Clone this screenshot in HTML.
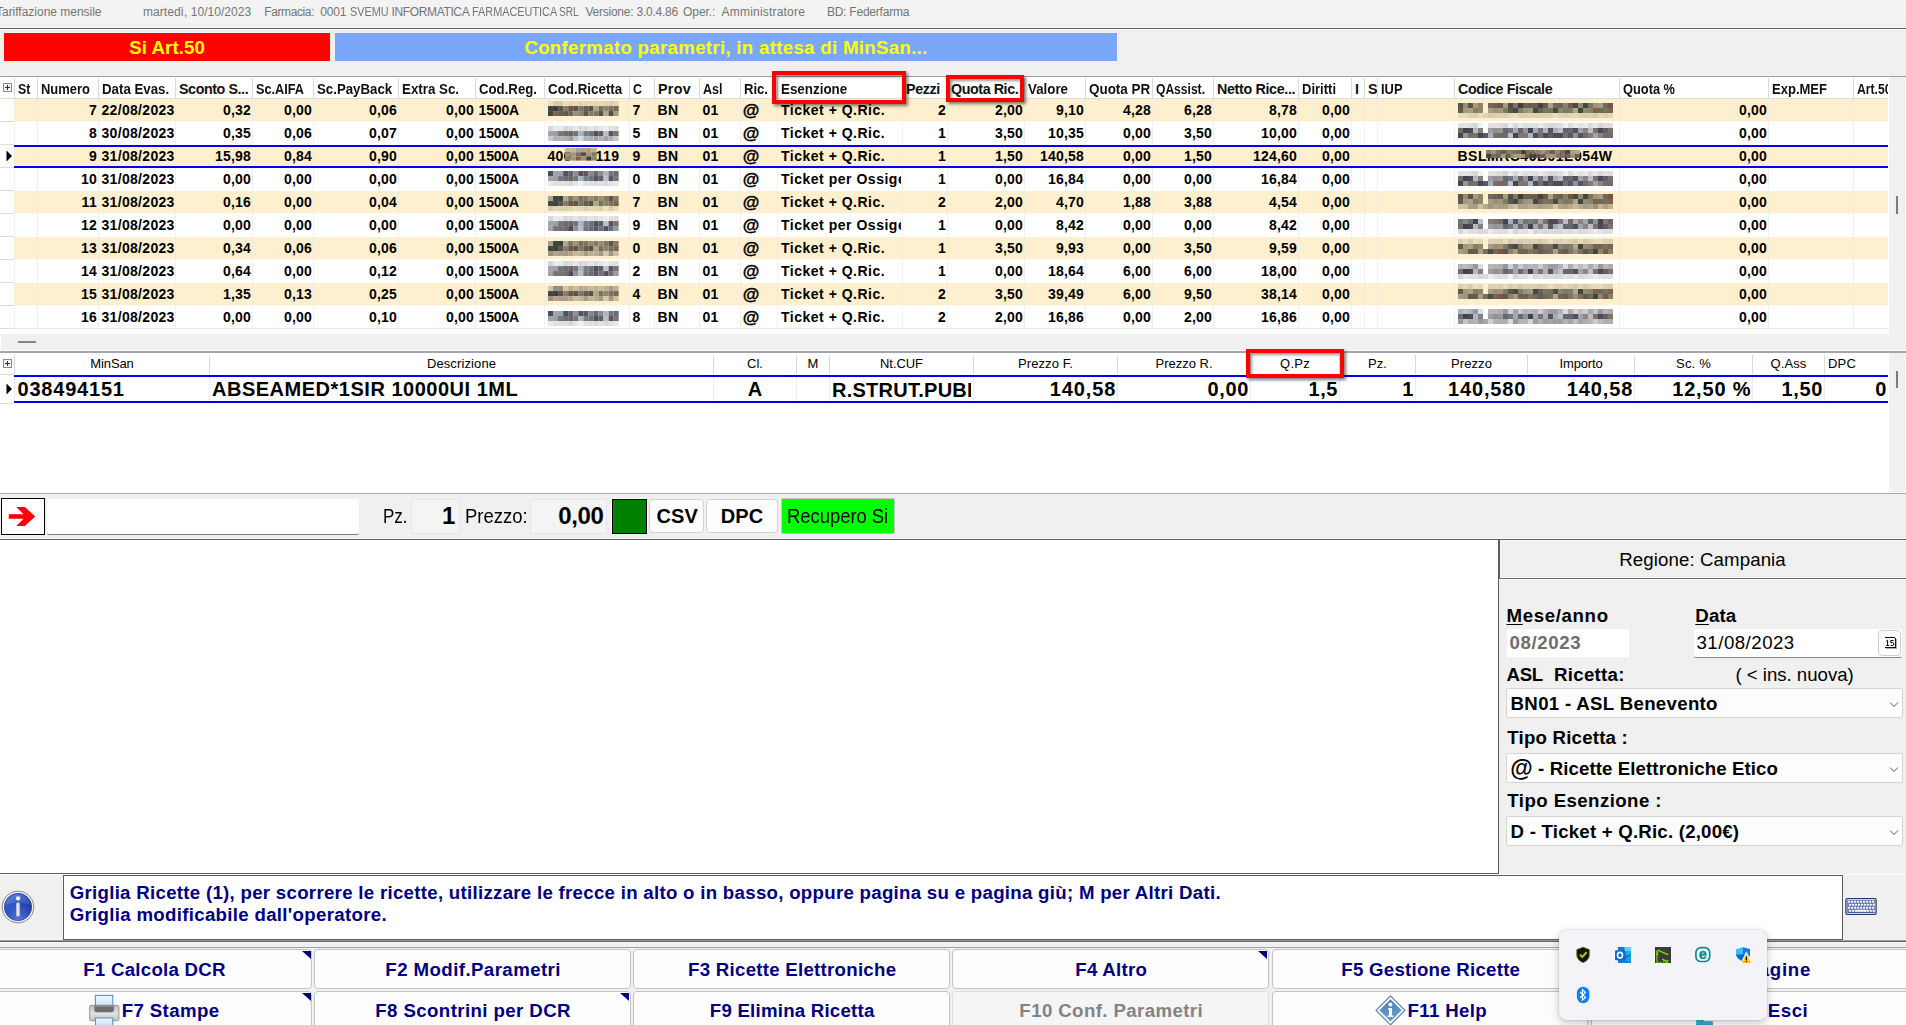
<!DOCTYPE html>
<html><head><meta charset="utf-8"><title>Tariffazione mensile</title><style>
html,body{margin:0;padding:0}
body{width:1906px;height:1025px;overflow:hidden;background:#f0f0f0;position:relative;font-family:"Liberation Sans",sans-serif;}
body>div,body>span,body>svg,.t{position:absolute}
body>div{box-sizing:content-box}
.clip>span{position:absolute}
.t{white-space:pre;}
.hd{font-size:14.3px;font-weight:bold;line-height:16px;color:#111}
u{text-decoration-thickness:1px;text-underline-offset:1.5px}
</style></head>
<body>
<div style="left:0px;top:0px;width:1906px;height:23px;background:#f3f3f3"></div>
<span class="t" style="letter-spacing:-0.017px;top:4.84px;line-height:14px;font-size:12px;color:#757575;left:-4px;">Tariffazione mensile</span>
<span class="t" style="letter-spacing:0.041px;top:4.84px;line-height:14px;font-size:12px;color:#757575;left:143px;">martedì, 10/10/2023</span>
<span class="t" style="letter-spacing:-0.394px;top:4.84px;line-height:14px;font-size:12px;color:#757575;left:264.3px;">Farmacia:</span>
<span class="t" style="letter-spacing:-0.226px;top:4.84px;line-height:14px;font-size:12px;color:#757575;left:320.3px;">0001</span>
<span class="t" style="display:inline-block;transform:scaleX(0.9066);transform-origin:left center;top:4.84px;line-height:14px;font-size:12px;color:#757575;left:349.5px;">SVEMU</span>
<span class="t" style="letter-spacing:-0.371px;top:4.84px;line-height:14px;font-size:12px;color:#757575;left:391.6px;">INFORMATICA</span>
<span class="t" style="display:inline-block;transform:scaleX(0.9062);transform-origin:left center;top:4.84px;line-height:14px;font-size:12px;color:#757575;left:471.5px;">FARMACEUTICA</span>
<span class="t" style="display:inline-block;transform:scaleX(0.8439);transform-origin:left center;top:4.84px;line-height:14px;font-size:12px;color:#757575;left:559px;">SRL</span>
<span class="t" style="letter-spacing:-0.231px;top:4.84px;line-height:14px;font-size:12px;color:#757575;left:585.4px;">Versione: 3.0.4.86</span>
<span class="t" style="letter-spacing:-0.065px;top:4.84px;line-height:14px;font-size:12px;color:#757575;left:683.1px;">Oper.:</span>
<span class="t" style="letter-spacing:0.194px;top:4.84px;line-height:14px;font-size:12px;color:#757575;left:721.6px;">Amministratore</span>
<span class="t" style="letter-spacing:-0.219px;top:4.84px;line-height:14px;font-size:12px;color:#757575;left:826.9px;">BD: Federfarma</span>
<div style="left:0px;top:27px;width:1906px;height:1px;background:#f8f8f8"></div>
<div style="left:0px;top:28px;width:1906px;height:1px;background:#626262"></div>
<div style="left:0px;top:29px;width:1906px;height:1px;background:#f8f8f8"></div>
<div style="left:4px;top:33px;width:326px;height:28px;background:#ff0000"></div>
<div class="t" style="top:36.53px;line-height:22px;font-size:18.67px;color:#ffff00;font-weight:bold;left:-433px;width:1200px;text-align:center;"><span style="letter-spacing:0.078px;">Si Art.50</span></div>
<div style="left:335px;top:33px;width:782px;height:28px;background:#7aa7fa"></div>
<div class="t" style="top:36.53px;line-height:22px;font-size:18.67px;color:#ffff00;font-weight:bold;left:126px;width:1200px;text-align:center;"><span style="letter-spacing:0.305px;">Confermato parametri, in attesa di MinSan...</span></div>
<div style="left:0px;top:76px;width:1906px;height:1px;background:#a0a0a0"></div>
<div style="left:0px;top:77px;width:1889px;height:257px;background:#fff"></div>
<div style="left:1905px;top:77px;width:1px;height:274px;background:#fbfbfb"></div>
<div style="left:0px;top:350px;width:1906px;height:1px;background:#fbfbfb"></div>
<div style="left:14px;top:99px;width:1874px;height:23px;background:#fef0ce"></div>
<div style="left:0px;top:121px;width:14px;height:1px;background:#dcdcdc"></div>
<div style="left:14px;top:121px;width:1874px;height:1px;background:rgba(255,255,255,0.72)"></div>
<div style="left:0px;top:144px;width:14px;height:1px;background:#dcdcdc"></div>
<div style="left:14px;top:144px;width:1874px;height:1px;background:rgba(255,255,255,0.72)"></div>
<div style="left:14px;top:145px;width:1874px;height:23px;background:#fef0ce"></div>
<div style="left:0px;top:167px;width:14px;height:1px;background:#dcdcdc"></div>
<div style="left:14px;top:167px;width:1874px;height:1px;background:rgba(255,255,255,0.72)"></div>
<div style="left:0px;top:190px;width:14px;height:1px;background:#dcdcdc"></div>
<div style="left:14px;top:190px;width:1874px;height:1px;background:rgba(255,255,255,0.72)"></div>
<div style="left:14px;top:191px;width:1874px;height:23px;background:#fef0ce"></div>
<div style="left:0px;top:213px;width:14px;height:1px;background:#dcdcdc"></div>
<div style="left:14px;top:213px;width:1874px;height:1px;background:rgba(255,255,255,0.72)"></div>
<div style="left:0px;top:236px;width:14px;height:1px;background:#dcdcdc"></div>
<div style="left:14px;top:236px;width:1874px;height:1px;background:rgba(255,255,255,0.72)"></div>
<div style="left:14px;top:237px;width:1874px;height:23px;background:#fef0ce"></div>
<div style="left:0px;top:259px;width:14px;height:1px;background:#dcdcdc"></div>
<div style="left:14px;top:259px;width:1874px;height:1px;background:rgba(255,255,255,0.72)"></div>
<div style="left:0px;top:282px;width:14px;height:1px;background:#dcdcdc"></div>
<div style="left:14px;top:282px;width:1874px;height:1px;background:rgba(255,255,255,0.72)"></div>
<div style="left:14px;top:283px;width:1874px;height:23px;background:#fef0ce"></div>
<div style="left:0px;top:305px;width:14px;height:1px;background:#dcdcdc"></div>
<div style="left:14px;top:305px;width:1874px;height:1px;background:rgba(255,255,255,0.72)"></div>
<div style="left:0px;top:328px;width:14px;height:1px;background:#dcdcdc"></div>
<div style="left:14px;top:328px;width:1874px;height:1px;background:rgba(255,255,255,0.72)"></div>
<div style="left:0px;top:98px;width:1888px;height:1px;background:#dcdcdc"></div>
<div style="left:14px;top:78px;width:1px;height:20px;background:#d9d9d9"></div>
<div style="left:14px;top:99px;width:1px;height:230px;background:rgba(234,234,234,0.72)"></div>
<div style="left:37px;top:78px;width:1px;height:20px;background:#d9d9d9"></div>
<div style="left:37px;top:99px;width:1px;height:230px;background:rgba(234,234,234,0.72)"></div>
<div style="left:98px;top:78px;width:1px;height:20px;background:#d9d9d9"></div>
<div style="left:98px;top:99px;width:1px;height:230px;background:rgba(234,234,234,0.72)"></div>
<div style="left:175px;top:78px;width:1px;height:20px;background:#d9d9d9"></div>
<div style="left:175px;top:99px;width:1px;height:230px;background:rgba(234,234,234,0.72)"></div>
<div style="left:252px;top:78px;width:1px;height:20px;background:#d9d9d9"></div>
<div style="left:252px;top:99px;width:1px;height:230px;background:rgba(234,234,234,0.72)"></div>
<div style="left:313px;top:78px;width:1px;height:20px;background:#d9d9d9"></div>
<div style="left:313px;top:99px;width:1px;height:230px;background:rgba(234,234,234,0.72)"></div>
<div style="left:398px;top:78px;width:1px;height:20px;background:#d9d9d9"></div>
<div style="left:398px;top:99px;width:1px;height:230px;background:rgba(234,234,234,0.72)"></div>
<div style="left:475px;top:78px;width:1px;height:20px;background:#d9d9d9"></div>
<div style="left:475px;top:99px;width:1px;height:230px;background:rgba(234,234,234,0.72)"></div>
<div style="left:544px;top:78px;width:1px;height:20px;background:#d9d9d9"></div>
<div style="left:544px;top:99px;width:1px;height:230px;background:rgba(234,234,234,0.72)"></div>
<div style="left:629px;top:78px;width:1px;height:20px;background:#d9d9d9"></div>
<div style="left:629px;top:99px;width:1px;height:230px;background:rgba(234,234,234,0.72)"></div>
<div style="left:654px;top:78px;width:1px;height:20px;background:#d9d9d9"></div>
<div style="left:654px;top:99px;width:1px;height:230px;background:rgba(234,234,234,0.72)"></div>
<div style="left:699px;top:78px;width:1px;height:20px;background:#d9d9d9"></div>
<div style="left:699px;top:99px;width:1px;height:230px;background:rgba(234,234,234,0.72)"></div>
<div style="left:740px;top:78px;width:1px;height:20px;background:#d9d9d9"></div>
<div style="left:740px;top:99px;width:1px;height:230px;background:rgba(234,234,234,0.72)"></div>
<div style="left:777px;top:78px;width:1px;height:20px;background:#d9d9d9"></div>
<div style="left:777px;top:99px;width:1px;height:230px;background:rgba(234,234,234,0.72)"></div>
<div style="left:902px;top:78px;width:1px;height:20px;background:#d9d9d9"></div>
<div style="left:902px;top:99px;width:1px;height:230px;background:rgba(234,234,234,0.72)"></div>
<div style="left:947px;top:78px;width:1px;height:20px;background:#d9d9d9"></div>
<div style="left:947px;top:99px;width:1px;height:230px;background:rgba(234,234,234,0.72)"></div>
<div style="left:1024px;top:78px;width:1px;height:20px;background:#d9d9d9"></div>
<div style="left:1024px;top:99px;width:1px;height:230px;background:rgba(234,234,234,0.72)"></div>
<div style="left:1085px;top:78px;width:1px;height:20px;background:#d9d9d9"></div>
<div style="left:1085px;top:99px;width:1px;height:230px;background:rgba(234,234,234,0.72)"></div>
<div style="left:1152px;top:78px;width:1px;height:20px;background:#d9d9d9"></div>
<div style="left:1152px;top:99px;width:1px;height:230px;background:rgba(234,234,234,0.72)"></div>
<div style="left:1213px;top:78px;width:1px;height:20px;background:#d9d9d9"></div>
<div style="left:1213px;top:99px;width:1px;height:230px;background:rgba(234,234,234,0.72)"></div>
<div style="left:1298px;top:78px;width:1px;height:20px;background:#d9d9d9"></div>
<div style="left:1298px;top:99px;width:1px;height:230px;background:rgba(234,234,234,0.72)"></div>
<div style="left:1351px;top:78px;width:1px;height:20px;background:#d9d9d9"></div>
<div style="left:1351px;top:99px;width:1px;height:230px;background:rgba(234,234,234,0.72)"></div>
<div style="left:1364px;top:78px;width:1px;height:20px;background:#d9d9d9"></div>
<div style="left:1364px;top:99px;width:1px;height:230px;background:rgba(234,234,234,0.72)"></div>
<div style="left:1377px;top:78px;width:1px;height:20px;background:#d9d9d9"></div>
<div style="left:1377px;top:99px;width:1px;height:230px;background:rgba(234,234,234,0.72)"></div>
<div style="left:1454px;top:78px;width:1px;height:20px;background:#d9d9d9"></div>
<div style="left:1454px;top:99px;width:1px;height:230px;background:rgba(234,234,234,0.72)"></div>
<div style="left:1619px;top:78px;width:1px;height:20px;background:#d9d9d9"></div>
<div style="left:1619px;top:99px;width:1px;height:230px;background:rgba(234,234,234,0.72)"></div>
<div style="left:1768px;top:78px;width:1px;height:20px;background:#d9d9d9"></div>
<div style="left:1768px;top:99px;width:1px;height:230px;background:rgba(234,234,234,0.72)"></div>
<div style="left:1853px;top:78px;width:1px;height:20px;background:#d9d9d9"></div>
<div style="left:1853px;top:99px;width:1px;height:230px;background:rgba(234,234,234,0.72)"></div>
<div style="left:14px;top:328px;width:1874px;height:1px;background:#e6e6e6"></div>
<div class="clip" style="left:18px;top:77px;width:19px;height:21px;overflow:hidden;"><span class="t hd" style="display:inline-block;transform:scaleX(0.8603);transform-origin:left center;left:0;top:3.5px">St</span></div>
<div class="clip" style="left:41px;top:77px;width:57px;height:21px;overflow:hidden;"><span class="t hd" style="display:inline-block;transform:scaleX(0.9069);transform-origin:left center;left:0;top:3.5px">Numero</span></div>
<div class="clip" style="left:102px;top:77px;width:73px;height:21px;overflow:hidden;"><span class="t hd" style="display:inline-block;transform:scaleX(0.9291);transform-origin:left center;left:0;top:3.5px">Data Evas.</span></div>
<div class="clip" style="left:179px;top:77px;width:73px;height:21px;overflow:hidden;"><span class="t hd" style="letter-spacing:-0.425px;left:0;top:3.5px">Sconto S...</span></div>
<div class="clip" style="left:256px;top:77px;width:57px;height:21px;overflow:hidden;"><span class="t hd" style="display:inline-block;transform:scaleX(0.8884);transform-origin:left center;left:0;top:3.5px">Sc.AIFA</span></div>
<div class="clip" style="left:317px;top:77px;width:81px;height:21px;overflow:hidden;"><span class="t hd" style="display:inline-block;transform:scaleX(0.9275);transform-origin:left center;left:0;top:3.5px">Sc.PayBack</span></div>
<div class="clip" style="left:402px;top:77px;width:73px;height:21px;overflow:hidden;"><span class="t hd" style="display:inline-block;transform:scaleX(0.9313);transform-origin:left center;left:0;top:3.5px">Extra Sc.</span></div>
<div class="clip" style="left:479px;top:77px;width:65px;height:21px;overflow:hidden;"><span class="t hd" style="display:inline-block;transform:scaleX(0.9243);transform-origin:left center;left:0;top:3.5px">Cod.Reg.</span></div>
<div class="clip" style="left:548px;top:77px;width:81px;height:21px;overflow:hidden;"><span class="t hd" style="display:inline-block;transform:scaleX(0.9341);transform-origin:left center;left:0;top:3.5px">Cod.Ricetta</span></div>
<div class="clip" style="left:633px;top:77px;width:21px;height:21px;overflow:hidden;"><span class="t hd" style="display:inline-block;transform:scaleX(0.8714);transform-origin:left center;left:0;top:3.5px">C</span></div>
<div class="clip" style="left:658px;top:77px;width:41px;height:21px;overflow:hidden;"><span class="t hd" style="letter-spacing:0.301px;left:0;top:3.5px">Prov</span></div>
<div class="clip" style="left:703px;top:77px;width:37px;height:21px;overflow:hidden;"><span class="t hd" style="display:inline-block;transform:scaleX(0.8764);transform-origin:left center;left:0;top:3.5px">Asl</span></div>
<div class="clip" style="left:744px;top:77px;width:33px;height:21px;overflow:hidden;"><span class="t hd" style="display:inline-block;transform:scaleX(0.9148);transform-origin:left center;left:0;top:3.5px">Ric.</span></div>
<div class="clip" style="left:781px;top:77px;width:121px;height:21px;overflow:hidden;"><span class="t hd" style="display:inline-block;transform:scaleX(0.9361);transform-origin:left center;left:0;top:3.5px">Esenzione</span></div>
<div class="clip" style="left:906px;top:77px;width:41px;height:21px;overflow:hidden;"><span class="t hd" style="letter-spacing:-0.353px;left:0;top:3.5px">Pezzi</span></div>
<div class="clip" style="left:951px;top:77px;width:73px;height:21px;overflow:hidden;"><span class="t hd" style="letter-spacing:-0.430px;left:0;top:3.5px">Quota Ric.</span></div>
<div class="clip" style="left:1028px;top:77px;width:57px;height:21px;overflow:hidden;"><span class="t hd" style="display:inline-block;transform:scaleX(0.9319);transform-origin:left center;left:0;top:3.5px">Valore</span></div>
<div class="clip" style="left:1089px;top:77px;width:63px;height:21px;overflow:hidden;"><span class="t hd" style="display:inline-block;transform:scaleX(0.9395);transform-origin:left center;left:0;top:3.5px">Quota PR</span></div>
<div class="clip" style="left:1156px;top:77px;width:57px;height:21px;overflow:hidden;"><span class="t hd" style="display:inline-block;transform:scaleX(0.8446);transform-origin:left center;left:0;top:3.5px">QAssist.</span></div>
<div class="clip" style="left:1217px;top:77px;width:81px;height:21px;overflow:hidden;"><span class="t hd" style="letter-spacing:-0.340px;left:0;top:3.5px">Netto Rice...</span></div>
<div class="clip" style="left:1302px;top:77px;width:49px;height:21px;overflow:hidden;"><span class="t hd" style="display:inline-block;transform:scaleX(0.9108);transform-origin:left center;left:0;top:3.5px">Diritti</span></div>
<div class="clip" style="left:1355px;top:77px;width:9px;height:21px;overflow:hidden;"><span class="t hd" style="left:0;top:3.5px">I</span></div>
<div class="clip" style="left:1368px;top:77px;width:9px;height:21px;overflow:hidden;"><span class="t hd" style="left:0;top:3.5px">S</span></div>
<div class="clip" style="left:1381px;top:77px;width:73px;height:21px;overflow:hidden;"><span class="t hd" style="display:inline-block;transform:scaleX(0.9017);transform-origin:left center;left:0;top:3.5px">IUP</span></div>
<div class="clip" style="left:1458px;top:77px;width:161px;height:21px;overflow:hidden;"><span class="t hd" style="letter-spacing:-0.423px;left:0;top:3.5px">Codice Fiscale</span></div>
<div class="clip" style="left:1623px;top:77px;width:145px;height:21px;overflow:hidden;"><span class="t hd" style="display:inline-block;transform:scaleX(0.8968);transform-origin:left center;left:0;top:3.5px">Quota %</span></div>
<div class="clip" style="left:1772px;top:77px;width:81px;height:21px;overflow:hidden;"><span class="t hd" style="display:inline-block;transform:scaleX(0.9110);transform-origin:left center;left:0;top:3.5px">Exp.MEF</span></div>
<div class="clip" style="left:1857px;top:77px;width:31px;height:21px;overflow:hidden;"><span class="t hd" style="display:inline-block;transform:scaleX(0.8512);transform-origin:left center;left:0;top:3.5px">Art.50</span></div>
<svg style="left:3px;top:83px;" width="9" height="9" viewBox="0 0 9 9"><rect x="0.5" y="0.5" width="8" height="8" fill="#f4f4f4" stroke="#8c8c8c"/><path d="M2 4.5h5M4.5 2v5" stroke="#1c2a8c" stroke-width="1"/></svg>
<span class="t d" style="letter-spacing:0.203px;margin-right:-0.203px;top:101.65px;line-height:17px;font-size:14px;color:#000;font-weight:bold;right:1809.2px;">7</span>
<span class="t d" style="letter-spacing:0.312px;top:101.65px;line-height:17px;font-size:14px;color:#000;font-weight:bold;left:101.5px;">22/08/2023</span>
<span class="t d" style="letter-spacing:0.188px;margin-right:-0.188px;top:101.65px;line-height:17px;font-size:14px;color:#000;font-weight:bold;right:1655.2px;">0,32</span>
<span class="t d" style="letter-spacing:0.188px;margin-right:-0.188px;top:101.65px;line-height:17px;font-size:14px;color:#000;font-weight:bold;right:1594.2px;">0,00</span>
<span class="t d" style="letter-spacing:0.188px;margin-right:-0.188px;top:101.65px;line-height:17px;font-size:14px;color:#000;font-weight:bold;right:1509.2px;">0,06</span>
<span class="t d" style="letter-spacing:0.188px;margin-right:-0.188px;top:101.65px;line-height:17px;font-size:14px;color:#000;font-weight:bold;right:1432.2px;">0,00</span>
<span class="t d" style="letter-spacing:-0.153px;top:101.65px;line-height:17px;font-size:14px;color:#000;font-weight:bold;left:478.5px;">1500A</span>
<svg style="left:548px;top:101px;filter:blur(0.35px);" width="70.7" height="15.149999999999999" viewBox="0 0 70.7 15.149999999999999"><rect x="0.0" y="0.0" width="5.05" height="5.05" fill="#ebdebd"/><rect x="5.05" y="0.0" width="5.05" height="5.05" fill="#d4caae"/><rect x="10.1" y="0.0" width="5.05" height="5.05" fill="#d3c9ad"/><rect x="15.149999999999999" y="0.0" width="5.05" height="5.05" fill="#eddfbe"/><rect x="20.2" y="0.0" width="5.05" height="5.05" fill="#e1d5b6"/><rect x="25.25" y="0.0" width="5.05" height="5.05" fill="#e8dbbb"/><rect x="30.299999999999997" y="0.0" width="5.05" height="5.05" fill="#e0d3b5"/><rect x="35.35" y="0.0" width="5.05" height="5.05" fill="#e2d4b7"/><rect x="40.4" y="0.0" width="5.05" height="5.05" fill="#e6d9b9"/><rect x="45.449999999999996" y="0.0" width="5.05" height="5.05" fill="#e2d6b7"/><rect x="50.5" y="0.0" width="5.05" height="5.05" fill="#e7daba"/><rect x="55.55" y="0.0" width="5.05" height="5.05" fill="#e2d5b5"/><rect x="60.599999999999994" y="0.0" width="5.05" height="5.05" fill="#daceb1"/><rect x="65.64999999999999" y="0.0" width="5.05" height="5.05" fill="#e3d7b8"/><rect x="0.0" y="5.05" width="5.05" height="5.05" fill="#41453f"/><rect x="5.05" y="5.05" width="5.05" height="5.05" fill="#3c403a"/><rect x="10.1" y="5.05" width="5.05" height="5.05" fill="#5a544a"/><rect x="15.149999999999999" y="5.05" width="5.05" height="5.05" fill="#837e6a"/><rect x="20.2" y="5.05" width="5.05" height="5.05" fill="#725440"/><rect x="25.25" y="5.05" width="5.05" height="5.05" fill="#5a544a"/><rect x="30.299999999999997" y="5.05" width="5.05" height="5.05" fill="#81775e"/><rect x="35.35" y="5.05" width="5.05" height="5.05" fill="#625c52"/><rect x="40.4" y="5.05" width="5.05" height="5.05" fill="#575147"/><rect x="45.449999999999996" y="5.05" width="5.05" height="5.05" fill="#b0a688"/><rect x="50.5" y="5.05" width="5.05" height="5.05" fill="#78735f"/><rect x="55.55" y="5.05" width="5.05" height="5.05" fill="#8f856c"/><rect x="60.599999999999994" y="5.05" width="5.05" height="5.05" fill="#7c7263"/><rect x="65.64999999999999" y="5.05" width="5.05" height="5.05" fill="#80624e"/><rect x="0.0" y="10.1" width="5.05" height="5.05" fill="#41453f"/><rect x="5.05" y="10.1" width="5.05" height="5.05" fill="#7f614d"/><rect x="10.1" y="10.1" width="5.05" height="5.05" fill="#655b51"/><rect x="15.149999999999999" y="10.1" width="5.05" height="5.05" fill="#61574d"/><rect x="20.2" y="10.1" width="5.05" height="5.05" fill="#716758"/><rect x="25.25" y="10.1" width="5.05" height="5.05" fill="#998f76"/><rect x="30.299999999999997" y="10.1" width="5.05" height="5.05" fill="#8c8269"/><rect x="35.35" y="10.1" width="5.05" height="5.05" fill="#5c564c"/><rect x="40.4" y="10.1" width="5.05" height="5.05" fill="#847f6b"/><rect x="45.449999999999996" y="10.1" width="5.05" height="5.05" fill="#7f7566"/><rect x="50.5" y="10.1" width="5.05" height="5.05" fill="#585248"/><rect x="55.55" y="10.1" width="5.05" height="5.05" fill="#b2a88a"/><rect x="60.599999999999994" y="10.1" width="5.05" height="5.05" fill="#544e44"/><rect x="65.64999999999999" y="10.1" width="5.05" height="5.05" fill="#a39980"/></svg>
<span class="t d" style="top:101.65px;line-height:17px;font-size:14px;color:#000;font-weight:bold;left:632.5px;">7</span>
<span class="t d" style="letter-spacing:0.383px;top:101.65px;line-height:17px;font-size:14px;color:#000;font-weight:bold;left:657.5px;">BN</span>
<span class="t d" style="letter-spacing:0.211px;top:101.65px;line-height:17px;font-size:14px;color:#000;font-weight:bold;left:702.5px;">01</span>
<span class="t d" style="top:100.91px;line-height:20px;font-size:17px;color:#000;font-weight:bold;left:742.7px;-webkit-text-stroke:0.35px #000;">@</span>
<div class="clip" style="left:781px;top:99px;width:120px;height:23px;overflow:hidden"><span class="t d" style="letter-spacing:0.505px;left:0;top:3.2px;font-size:14px;font-weight:bold;line-height:17px">Ticket + Q.Ric.</span></div>
<span class="t d" style="top:101.65px;line-height:17px;font-size:14px;color:#000;font-weight:bold;right:960.2px;">2</span>
<span class="t d" style="letter-spacing:0.188px;margin-right:-0.188px;top:101.65px;line-height:17px;font-size:14px;color:#000;font-weight:bold;right:883.2px;">2,00</span>
<span class="t d" style="letter-spacing:0.188px;margin-right:-0.188px;top:101.65px;line-height:17px;font-size:14px;color:#000;font-weight:bold;right:822.2px;">9,10</span>
<span class="t d" style="letter-spacing:0.188px;margin-right:-0.188px;top:101.65px;line-height:17px;font-size:14px;color:#000;font-weight:bold;right:755.2px;">4,28</span>
<span class="t d" style="letter-spacing:0.188px;margin-right:-0.188px;top:101.65px;line-height:17px;font-size:14px;color:#000;font-weight:bold;right:694.2px;">6,28</span>
<span class="t d" style="letter-spacing:0.188px;margin-right:-0.188px;top:101.65px;line-height:17px;font-size:14px;color:#000;font-weight:bold;right:609.2px;">8,78</span>
<span class="t d" style="letter-spacing:0.188px;margin-right:-0.188px;top:101.65px;line-height:17px;font-size:14px;color:#000;font-weight:bold;right:556.2px;">0,00</span>
<svg style="left:1458px;top:103px;filter:blur(0.35px);" width="155" height="15" viewBox="0 0 155 15"><rect x="0" y="0" width="5" height="5" fill="#5a544a"/><rect x="5" y="0" width="5" height="5" fill="#978d74"/><rect x="10" y="0" width="5" height="5" fill="#595349"/><rect x="15" y="0" width="5" height="5" fill="#a49a7c"/><rect x="20" y="0" width="5" height="5" fill="#8e846b"/><rect x="30" y="0" width="5" height="5" fill="#71675d"/><rect x="35" y="0" width="5" height="5" fill="#6b6157"/><rect x="40" y="0" width="5" height="5" fill="#62584e"/><rect x="45" y="0" width="5" height="5" fill="#a3997b"/><rect x="50" y="0" width="5" height="5" fill="#4a4e48"/><rect x="55" y="0" width="5" height="5" fill="#7e7465"/><rect x="60" y="0" width="5" height="5" fill="#3b3f39"/><rect x="65" y="0" width="5" height="5" fill="#685e54"/><rect x="70" y="0" width="5" height="5" fill="#645e54"/><rect x="75" y="0" width="5" height="5" fill="#675d53"/><rect x="80" y="0" width="5" height="5" fill="#40443e"/><rect x="85" y="0" width="5" height="5" fill="#665c52"/><rect x="90" y="0" width="5" height="5" fill="#aca284"/><rect x="95" y="0" width="5" height="5" fill="#73695a"/><rect x="100" y="0" width="5" height="5" fill="#6a6056"/><rect x="105" y="0" width="5" height="5" fill="#8a8067"/><rect x="110" y="0" width="5" height="5" fill="#765844"/><rect x="115" y="0" width="5" height="5" fill="#484c46"/><rect x="120" y="0" width="5" height="5" fill="#938970"/><rect x="125" y="0" width="5" height="5" fill="#434741"/><rect x="130" y="0" width="5" height="5" fill="#7a7561"/><rect x="135" y="0" width="5" height="5" fill="#9e947b"/><rect x="140" y="0" width="5" height="5" fill="#a69c7e"/><rect x="145" y="0" width="5" height="5" fill="#70665c"/><rect x="150" y="0" width="5" height="5" fill="#735541"/><rect x="0" y="5" width="5" height="5" fill="#63594f"/><rect x="5" y="5" width="5" height="5" fill="#a3997b"/><rect x="10" y="5" width="5" height="5" fill="#aba183"/><rect x="15" y="5" width="5" height="5" fill="#877d64"/><rect x="20" y="5" width="5" height="5" fill="#90866d"/><rect x="30" y="5" width="5" height="5" fill="#a79d84"/><rect x="35" y="5" width="5" height="5" fill="#9a9077"/><rect x="40" y="5" width="5" height="5" fill="#a0967d"/><rect x="45" y="5" width="5" height="5" fill="#807b67"/><rect x="50" y="5" width="5" height="5" fill="#5c564c"/><rect x="55" y="5" width="5" height="5" fill="#464a44"/><rect x="60" y="5" width="5" height="5" fill="#827d69"/><rect x="65" y="5" width="5" height="5" fill="#9d937a"/><rect x="70" y="5" width="5" height="5" fill="#a3997b"/><rect x="75" y="5" width="5" height="5" fill="#454943"/><rect x="80" y="5" width="5" height="5" fill="#6b6157"/><rect x="85" y="5" width="5" height="5" fill="#7f755c"/><rect x="90" y="5" width="5" height="5" fill="#7b7162"/><rect x="95" y="5" width="5" height="5" fill="#494d47"/><rect x="100" y="5" width="5" height="5" fill="#8e846b"/><rect x="105" y="5" width="5" height="5" fill="#7e7965"/><rect x="110" y="5" width="5" height="5" fill="#817c68"/><rect x="115" y="5" width="5" height="5" fill="#b1a789"/><rect x="120" y="5" width="5" height="5" fill="#41453f"/><rect x="125" y="5" width="5" height="5" fill="#948a71"/><rect x="130" y="5" width="5" height="5" fill="#8d836a"/><rect x="135" y="5" width="5" height="5" fill="#7f614d"/><rect x="140" y="5" width="5" height="5" fill="#716758"/><rect x="145" y="5" width="5" height="5" fill="#78735f"/><rect x="150" y="5" width="5" height="5" fill="#80624e"/><rect x="0" y="10" width="5" height="5" fill="#eaddbc"/><rect x="5" y="10" width="5" height="5" fill="#e8dbbb"/><rect x="10" y="10" width="5" height="5" fill="#dccfb2"/><rect x="15" y="10" width="5" height="5" fill="#dccfb2"/><rect x="20" y="10" width="5" height="5" fill="#ebddbc"/><rect x="25" y="10" width="5" height="5" fill="#dfd3b4"/><rect x="30" y="10" width="5" height="5" fill="#d6ccb0"/><rect x="35" y="10" width="5" height="5" fill="#e2d0b1"/><rect x="40" y="10" width="5" height="5" fill="#e0ceaf"/><rect x="45" y="10" width="5" height="5" fill="#dbceb1"/><rect x="50" y="10" width="5" height="5" fill="#e5d8b8"/><rect x="55" y="10" width="5" height="5" fill="#eaddbb"/><rect x="60" y="10" width="5" height="5" fill="#ddd0b4"/><rect x="65" y="10" width="5" height="5" fill="#ded0b4"/><rect x="70" y="10" width="5" height="5" fill="#e2d5b5"/><rect x="75" y="10" width="5" height="5" fill="#dfd2b4"/><rect x="80" y="10" width="5" height="5" fill="#dccfb2"/><rect x="85" y="10" width="5" height="5" fill="#dfd2b4"/><rect x="90" y="10" width="5" height="5" fill="#e0d4b5"/><rect x="95" y="10" width="5" height="5" fill="#ecdfbd"/><rect x="100" y="10" width="5" height="5" fill="#dfd2b4"/><rect x="105" y="10" width="5" height="5" fill="#ddcfb3"/><rect x="110" y="10" width="5" height="5" fill="#e2d5b7"/><rect x="115" y="10" width="5" height="5" fill="#e8daba"/><rect x="120" y="10" width="5" height="5" fill="#e1d4b6"/><rect x="125" y="10" width="5" height="5" fill="#dbceb1"/><rect x="130" y="10" width="5" height="5" fill="#ded1b5"/><rect x="135" y="10" width="5" height="5" fill="#d4caae"/><rect x="140" y="10" width="5" height="5" fill="#e6d9b9"/><rect x="145" y="10" width="5" height="5" fill="#e0cfb0"/><rect x="150" y="10" width="5" height="5" fill="#e3d7b8"/></svg>
<span class="t d" style="letter-spacing:0.188px;margin-right:-0.188px;top:101.65px;line-height:17px;font-size:14px;color:#000;font-weight:bold;right:139.20000000000005px;">0,00</span>
<span class="t d" style="letter-spacing:0.203px;margin-right:-0.203px;top:124.65px;line-height:17px;font-size:14px;color:#000;font-weight:bold;right:1809.2px;">8</span>
<span class="t d" style="letter-spacing:0.312px;top:124.65px;line-height:17px;font-size:14px;color:#000;font-weight:bold;left:101.5px;">30/08/2023</span>
<span class="t d" style="letter-spacing:0.188px;margin-right:-0.188px;top:124.65px;line-height:17px;font-size:14px;color:#000;font-weight:bold;right:1655.2px;">0,35</span>
<span class="t d" style="letter-spacing:0.188px;margin-right:-0.188px;top:124.65px;line-height:17px;font-size:14px;color:#000;font-weight:bold;right:1594.2px;">0,06</span>
<span class="t d" style="letter-spacing:0.188px;margin-right:-0.188px;top:124.65px;line-height:17px;font-size:14px;color:#000;font-weight:bold;right:1509.2px;">0,07</span>
<span class="t d" style="letter-spacing:0.188px;margin-right:-0.188px;top:124.65px;line-height:17px;font-size:14px;color:#000;font-weight:bold;right:1432.2px;">0,00</span>
<span class="t d" style="letter-spacing:-0.153px;top:124.65px;line-height:17px;font-size:14px;color:#000;font-weight:bold;left:478.5px;">1500A</span>
<svg style="left:548px;top:126px;filter:blur(0.35px);" width="70.7" height="15.149999999999999" viewBox="0 0 70.7 15.149999999999999"><rect x="0.0" y="0.0" width="5.05" height="5.05" fill="#d6d7da"/><rect x="5.05" y="0.0" width="5.05" height="5.05" fill="#e9eaed"/><rect x="10.1" y="0.0" width="5.05" height="5.05" fill="#e9eaec"/><rect x="15.149999999999999" y="0.0" width="5.05" height="5.05" fill="#d7d8db"/><rect x="20.2" y="0.0" width="5.05" height="5.05" fill="#dcdcde"/><rect x="25.25" y="0.0" width="5.05" height="5.05" fill="#e7e6e5"/><rect x="30.299999999999997" y="0.0" width="5.05" height="5.05" fill="#d9d8db"/><rect x="35.35" y="0.0" width="5.05" height="5.05" fill="#dbdadd"/><rect x="40.4" y="0.0" width="5.05" height="5.05" fill="#e5e4e3"/><rect x="45.449999999999996" y="0.0" width="5.05" height="5.05" fill="#dddddf"/><rect x="50.5" y="0.0" width="5.05" height="5.05" fill="#e6e5e3"/><rect x="55.55" y="0.0" width="5.05" height="5.05" fill="#edeef0"/><rect x="60.599999999999994" y="0.0" width="5.05" height="5.05" fill="#dfe1e3"/><rect x="65.64999999999999" y="0.0" width="5.05" height="5.05" fill="#dedee0"/><rect x="0.0" y="5.05" width="5.05" height="5.05" fill="#9fa4ae"/><rect x="5.05" y="5.05" width="5.05" height="5.05" fill="#9a9fa9"/><rect x="10.1" y="5.05" width="5.05" height="5.05" fill="#6c7680"/><rect x="15.149999999999999" y="5.05" width="5.05" height="5.05" fill="#6a6a74"/><rect x="20.2" y="5.05" width="5.05" height="5.05" fill="#72635e"/><rect x="25.25" y="5.05" width="5.05" height="5.05" fill="#6c7680"/><rect x="30.299999999999997" y="5.05" width="5.05" height="5.05" fill="#aeb3bd"/><rect x="35.35" y="5.05" width="5.05" height="5.05" fill="#747e88"/><rect x="40.4" y="5.05" width="5.05" height="5.05" fill="#69737d"/><rect x="45.449999999999996" y="5.05" width="5.05" height="5.05" fill="#4c515b"/><rect x="50.5" y="5.05" width="5.05" height="5.05" fill="#5f5f69"/><rect x="55.55" y="5.05" width="5.05" height="5.05" fill="#bcc1cb"/><rect x="60.599999999999994" y="5.05" width="5.05" height="5.05" fill="#595463"/><rect x="65.64999999999999" y="5.05" width="5.05" height="5.05" fill="#80716c"/><rect x="0.0" y="10.1" width="5.05" height="5.05" fill="#caccd2"/><rect x="5.05" y="10.1" width="5.05" height="5.05" fill="#b8b0ad"/><rect x="10.1" y="10.1" width="5.05" height="5.05" fill="#b5afad"/><rect x="15.149999999999999" y="10.1" width="5.05" height="5.05" fill="#b3adaa"/><rect x="20.2" y="10.1" width="5.05" height="5.05" fill="#9d9aa3"/><rect x="25.25" y="10.1" width="5.05" height="5.05" fill="#c1c1c4"/><rect x="30.299999999999997" y="10.1" width="5.05" height="5.05" fill="#d8dbe0"/><rect x="35.35" y="10.1" width="5.05" height="5.05" fill="#afb4ba"/><rect x="40.4" y="10.1" width="5.05" height="5.05" fill="#adadb3"/><rect x="45.449999999999996" y="10.1" width="5.05" height="5.05" fill="#a5a2aa"/><rect x="50.5" y="10.1" width="5.05" height="5.05" fill="#adb2b8"/><rect x="55.55" y="10.1" width="5.05" height="5.05" fill="#9da0a5"/><rect x="60.599999999999994" y="10.1" width="5.05" height="5.05" fill="#aab0b5"/><rect x="65.64999999999999" y="10.1" width="5.05" height="5.05" fill="#c6c6c9"/></svg>
<span class="t d" style="top:124.65px;line-height:17px;font-size:14px;color:#000;font-weight:bold;left:632.5px;">5</span>
<span class="t d" style="letter-spacing:0.383px;top:124.65px;line-height:17px;font-size:14px;color:#000;font-weight:bold;left:657.5px;">BN</span>
<span class="t d" style="letter-spacing:0.211px;top:124.65px;line-height:17px;font-size:14px;color:#000;font-weight:bold;left:702.5px;">01</span>
<span class="t d" style="top:123.91px;line-height:20px;font-size:17px;color:#000;font-weight:bold;left:742.7px;-webkit-text-stroke:0.35px #000;">@</span>
<div class="clip" style="left:781px;top:122px;width:120px;height:23px;overflow:hidden"><span class="t d" style="letter-spacing:0.505px;left:0;top:3.2px;font-size:14px;font-weight:bold;line-height:17px">Ticket + Q.Ric.</span></div>
<span class="t d" style="top:124.65px;line-height:17px;font-size:14px;color:#000;font-weight:bold;right:960.2px;">1</span>
<span class="t d" style="letter-spacing:0.188px;margin-right:-0.188px;top:124.65px;line-height:17px;font-size:14px;color:#000;font-weight:bold;right:883.2px;">3,50</span>
<span class="t d" style="letter-spacing:0.191px;margin-right:-0.191px;top:124.65px;line-height:17px;font-size:14px;color:#000;font-weight:bold;right:822.2px;">10,35</span>
<span class="t d" style="letter-spacing:0.188px;margin-right:-0.188px;top:124.65px;line-height:17px;font-size:14px;color:#000;font-weight:bold;right:755.2px;">0,00</span>
<span class="t d" style="letter-spacing:0.188px;margin-right:-0.188px;top:124.65px;line-height:17px;font-size:14px;color:#000;font-weight:bold;right:694.2px;">3,50</span>
<span class="t d" style="letter-spacing:0.191px;margin-right:-0.191px;top:124.65px;line-height:17px;font-size:14px;color:#000;font-weight:bold;right:609.2px;">10,00</span>
<span class="t d" style="letter-spacing:0.188px;margin-right:-0.188px;top:124.65px;line-height:17px;font-size:14px;color:#000;font-weight:bold;right:556.2px;">0,00</span>
<svg style="left:1458px;top:123px;filter:blur(0.35px);" width="155" height="15" viewBox="0 0 155 15"><rect x="0" y="0" width="5" height="5" fill="#dee0e3"/><rect x="5" y="0" width="5" height="5" fill="#e5e4e3"/><rect x="10" y="0" width="5" height="5" fill="#dee0e2"/><rect x="15" y="0" width="5" height="5" fill="#d4d6d8"/><rect x="20" y="0" width="5" height="5" fill="#f0f1f3"/><rect x="30" y="0" width="5" height="5" fill="#e4e1e0"/><rect x="35" y="0" width="5" height="5" fill="#e2e0df"/><rect x="40" y="0" width="5" height="5" fill="#e0dedd"/><rect x="45" y="0" width="5" height="5" fill="#d4d5d8"/><rect x="50" y="0" width="5" height="5" fill="#ebecef"/><rect x="55" y="0" width="5" height="5" fill="#dad9dd"/><rect x="60" y="0" width="5" height="5" fill="#e8e9eb"/><rect x="65" y="0" width="5" height="5" fill="#e2dfde"/><rect x="70" y="0" width="5" height="5" fill="#e0e3e5"/><rect x="75" y="0" width="5" height="5" fill="#e1dfde"/><rect x="80" y="0" width="5" height="5" fill="#e9eaec"/><rect x="85" y="0" width="5" height="5" fill="#e1dfde"/><rect x="90" y="0" width="5" height="5" fill="#d6d7da"/><rect x="95" y="0" width="5" height="5" fill="#d8d7da"/><rect x="100" y="0" width="5" height="5" fill="#e2e0df"/><rect x="105" y="0" width="5" height="5" fill="#eff0f2"/><rect x="110" y="0" width="5" height="5" fill="#e0dddc"/><rect x="115" y="0" width="5" height="5" fill="#ebecee"/><rect x="120" y="0" width="5" height="5" fill="#e5e3e2"/><rect x="125" y="0" width="5" height="5" fill="#eaebed"/><rect x="130" y="0" width="5" height="5" fill="#dcdcde"/><rect x="135" y="0" width="5" height="5" fill="#e7e7e8"/><rect x="140" y="0" width="5" height="5" fill="#d5d6d8"/><rect x="145" y="0" width="5" height="5" fill="#e3e1e0"/><rect x="150" y="0" width="5" height="5" fill="#e0dcdb"/><rect x="0" y="5" width="5" height="5" fill="#776d68"/><rect x="5" y="5" width="5" height="5" fill="#3f444e"/><rect x="10" y="5" width="5" height="5" fill="#474c56"/><rect x="15" y="5" width="5" height="5" fill="#b4b9c3"/><rect x="20" y="5" width="5" height="5" fill="#86817c"/><rect x="30" y="5" width="5" height="5" fill="#9d9da2"/><rect x="35" y="5" width="5" height="5" fill="#909095"/><rect x="40" y="5" width="5" height="5" fill="#96969b"/><rect x="45" y="5" width="5" height="5" fill="#676771"/><rect x="50" y="5" width="5" height="5" fill="#6e7882"/><rect x="55" y="5" width="5" height="5" fill="#a4a9b3"/><rect x="60" y="5" width="5" height="5" fill="#696973"/><rect x="65" y="5" width="5" height="5" fill="#939398"/><rect x="70" y="5" width="5" height="5" fill="#3f444e"/><rect x="75" y="5" width="5" height="5" fill="#a3a8b2"/><rect x="80" y="5" width="5" height="5" fill="#7f7570"/><rect x="85" y="5" width="5" height="5" fill="#acb1bb"/><rect x="90" y="5" width="5" height="5" fill="#585362"/><rect x="95" y="5" width="5" height="5" fill="#a7acb6"/><rect x="100" y="5" width="5" height="5" fill="#bbc0ca"/><rect x="105" y="5" width="5" height="5" fill="#65656f"/><rect x="110" y="5" width="5" height="5" fill="#686872"/><rect x="115" y="5" width="5" height="5" fill="#4d525c"/><rect x="120" y="5" width="5" height="5" fill="#9fa4ae"/><rect x="125" y="5" width="5" height="5" fill="#8a8580"/><rect x="130" y="5" width="5" height="5" fill="#babfc9"/><rect x="135" y="5" width="5" height="5" fill="#7f706b"/><rect x="140" y="5" width="5" height="5" fill="#4e4958"/><rect x="145" y="5" width="5" height="5" fill="#5f5f69"/><rect x="150" y="5" width="5" height="5" fill="#80716c"/><rect x="0" y="10" width="5" height="5" fill="#434852"/><rect x="5" y="10" width="5" height="5" fill="#949499"/><rect x="10" y="10" width="5" height="5" fill="#786e69"/><rect x="15" y="10" width="5" height="5" fill="#7b716c"/><rect x="20" y="10" width="5" height="5" fill="#444953"/><rect x="25" y="10" width="5" height="5" fill="#5c5c66"/><rect x="30" y="10" width="5" height="5" fill="#a7acb6"/><rect x="35" y="10" width="5" height="5" fill="#7f706b"/><rect x="40" y="10" width="5" height="5" fill="#766762"/><rect x="45" y="10" width="5" height="5" fill="#756b66"/><rect x="50" y="10" width="5" height="5" fill="#babfc9"/><rect x="55" y="10" width="5" height="5" fill="#40454f"/><rect x="60" y="10" width="5" height="5" fill="#807671"/><rect x="65" y="10" width="5" height="5" fill="#817772"/><rect x="70" y="10" width="5" height="5" fill="#aeb3bd"/><rect x="75" y="10" width="5" height="5" fill="#514c5b"/><rect x="80" y="10" width="5" height="5" fill="#796f6a"/><rect x="85" y="10" width="5" height="5" fill="#4f4a59"/><rect x="90" y="10" width="5" height="5" fill="#5d5d67"/><rect x="95" y="10" width="5" height="5" fill="#494e58"/><rect x="100" y="10" width="5" height="5" fill="#4f4a59"/><rect x="105" y="10" width="5" height="5" fill="#7c726d"/><rect x="110" y="10" width="5" height="5" fill="#5d5867"/><rect x="115" y="10" width="5" height="5" fill="#909095"/><rect x="120" y="10" width="5" height="5" fill="#585362"/><rect x="125" y="10" width="5" height="5" fill="#756b66"/><rect x="130" y="10" width="5" height="5" fill="#857b76"/><rect x="135" y="10" width="5" height="5" fill="#a0a5af"/><rect x="140" y="10" width="5" height="5" fill="#88837e"/><rect x="145" y="10" width="5" height="5" fill="#796a65"/><rect x="150" y="10" width="5" height="5" fill="#6c6c76"/></svg>
<span class="t d" style="letter-spacing:0.188px;margin-right:-0.188px;top:124.65px;line-height:17px;font-size:14px;color:#000;font-weight:bold;right:139.20000000000005px;">0,00</span>
<span class="t d" style="letter-spacing:0.203px;margin-right:-0.203px;top:147.65px;line-height:17px;font-size:14px;color:#000;font-weight:bold;right:1809.2px;">9</span>
<span class="t d" style="letter-spacing:0.312px;top:147.65px;line-height:17px;font-size:14px;color:#000;font-weight:bold;left:101.5px;">31/08/2023</span>
<span class="t d" style="letter-spacing:0.191px;margin-right:-0.191px;top:147.65px;line-height:17px;font-size:14px;color:#000;font-weight:bold;right:1655.2px;">15,98</span>
<span class="t d" style="letter-spacing:0.188px;margin-right:-0.188px;top:147.65px;line-height:17px;font-size:14px;color:#000;font-weight:bold;right:1594.2px;">0,84</span>
<span class="t d" style="letter-spacing:0.188px;margin-right:-0.188px;top:147.65px;line-height:17px;font-size:14px;color:#000;font-weight:bold;right:1509.2px;">0,90</span>
<span class="t d" style="letter-spacing:0.188px;margin-right:-0.188px;top:147.65px;line-height:17px;font-size:14px;color:#000;font-weight:bold;right:1432.2px;">0,00</span>
<span class="t d" style="letter-spacing:-0.153px;top:147.65px;line-height:17px;font-size:14px;color:#000;font-weight:bold;left:478.5px;">1500A</span>
<span class="t d" style="letter-spacing:0.214px;top:147.65px;line-height:17px;font-size:14px;color:#000;font-weight:bold;left:547.5px;">400</span>
<span class="t d" style="letter-spacing:0.469px;top:147.65px;line-height:17px;font-size:14px;color:#000;font-weight:bold;left:595.5px;">119</span>
<svg style="left:565px;top:148px;filter:blur(0.35px);" width="31.799999999999997" height="12.600000000000001" viewBox="0 0 31.799999999999997 12.600000000000001"><rect x="0.0" y="0.0" width="5.3" height="4.2" fill="#c6ba9d"/><rect x="5.3" y="0.0" width="5.3" height="4.2" fill="#c3b79a"/><rect x="10.6" y="0.0" width="5.3" height="4.2" fill="#aca08c"/><rect x="15.899999999999999" y="0.0" width="5.3" height="4.2" fill="#b7a085"/><rect x="21.2" y="0.0" width="5.3" height="4.2" fill="#b0997f"/><rect x="26.5" y="0.0" width="5.3" height="4.2" fill="#bbb298"/><rect x="0.0" y="4.2" width="5.3" height="4.2" fill="#9a9077"/><rect x="5.3" y="4.2" width="5.3" height="4.2" fill="#9f957c"/><rect x="10.6" y="4.2" width="5.3" height="4.2" fill="#797460"/><rect x="15.899999999999999" y="4.2" width="5.3" height="4.2" fill="#554f45"/><rect x="21.2" y="4.2" width="5.3" height="4.2" fill="#9c9279"/><rect x="26.5" y="4.2" width="5.3" height="4.2" fill="#7c7763"/><rect x="0.0" y="8.4" width="5.3" height="4.2" fill="#85806c"/><rect x="5.3" y="8.4" width="5.3" height="4.2" fill="#9d937a"/><rect x="10.6" y="8.4" width="5.3" height="4.2" fill="#7d5f4b"/><rect x="15.899999999999999" y="8.4" width="5.3" height="4.2" fill="#9a9077"/><rect x="21.2" y="8.4" width="5.3" height="4.2" fill="#3c403a"/><rect x="26.5" y="8.4" width="5.3" height="4.2" fill="#8b8168"/></svg>
<span class="t d" style="top:147.65px;line-height:17px;font-size:14px;color:#000;font-weight:bold;left:632.5px;">9</span>
<span class="t d" style="letter-spacing:0.383px;top:147.65px;line-height:17px;font-size:14px;color:#000;font-weight:bold;left:657.5px;">BN</span>
<span class="t d" style="letter-spacing:0.211px;top:147.65px;line-height:17px;font-size:14px;color:#000;font-weight:bold;left:702.5px;">01</span>
<span class="t d" style="top:146.91px;line-height:20px;font-size:17px;color:#000;font-weight:bold;left:742.7px;-webkit-text-stroke:0.35px #000;">@</span>
<div class="clip" style="left:781px;top:145px;width:120px;height:23px;overflow:hidden"><span class="t d" style="letter-spacing:0.505px;left:0;top:3.2px;font-size:14px;font-weight:bold;line-height:17px">Ticket + Q.Ric.</span></div>
<span class="t d" style="top:147.65px;line-height:17px;font-size:14px;color:#000;font-weight:bold;right:960.2px;">1</span>
<span class="t d" style="letter-spacing:0.188px;margin-right:-0.188px;top:147.65px;line-height:17px;font-size:14px;color:#000;font-weight:bold;right:883.2px;">1,50</span>
<span class="t d" style="letter-spacing:0.195px;margin-right:-0.195px;top:147.65px;line-height:17px;font-size:14px;color:#000;font-weight:bold;right:822.2px;">140,58</span>
<span class="t d" style="letter-spacing:0.188px;margin-right:-0.188px;top:147.65px;line-height:17px;font-size:14px;color:#000;font-weight:bold;right:755.2px;">0,00</span>
<span class="t d" style="letter-spacing:0.188px;margin-right:-0.188px;top:147.65px;line-height:17px;font-size:14px;color:#000;font-weight:bold;right:694.2px;">1,50</span>
<span class="t d" style="letter-spacing:0.195px;margin-right:-0.195px;top:147.65px;line-height:17px;font-size:14px;color:#000;font-weight:bold;right:609.2px;">124,60</span>
<span class="t d" style="letter-spacing:0.188px;margin-right:-0.188px;top:147.65px;line-height:17px;font-size:14px;color:#000;font-weight:bold;right:556.2px;">0,00</span>
<span class="t d" style="letter-spacing:0.496px;top:147.65px;line-height:17px;font-size:14px;color:#000;font-weight:bold;left:1457.5px;">BSLMRC40B01E054W</span>
<svg style="left:1486px;top:150px;filter:blur(0.35px);" width="94.05" height="8.2" viewBox="0 0 94.05 8.2"><rect x="0.0" y="0.0" width="4.95" height="4.1" fill="#827d69"/><rect x="4.95" y="0.0" width="4.95" height="4.1" fill="#9e947b"/><rect x="9.9" y="0.0" width="4.95" height="4.1" fill="#7c7263"/><rect x="14.850000000000001" y="0.0" width="4.95" height="4.1" fill="#675d53"/><rect x="19.8" y="0.0" width="4.95" height="4.1" fill="#817c68"/><rect x="24.75" y="0.0" width="4.95" height="4.1" fill="#82785f"/><rect x="29.700000000000003" y="0.0" width="4.95" height="4.1" fill="#75705c"/><rect x="34.65" y="0.0" width="4.95" height="4.1" fill="#3e423c"/><rect x="39.6" y="0.0" width="4.95" height="4.1" fill="#76715d"/><rect x="44.550000000000004" y="0.0" width="4.95" height="4.1" fill="#77725e"/><rect x="49.5" y="0.0" width="4.95" height="4.1" fill="#8b8168"/><rect x="54.45" y="0.0" width="4.95" height="4.1" fill="#a1977e"/><rect x="59.400000000000006" y="0.0" width="4.95" height="4.1" fill="#837e6a"/><rect x="64.35000000000001" y="0.0" width="4.95" height="4.1" fill="#6a6056"/><rect x="69.3" y="0.0" width="4.95" height="4.1" fill="#90866d"/><rect x="74.25" y="0.0" width="4.95" height="4.1" fill="#796f60"/><rect x="79.2" y="0.0" width="4.95" height="4.1" fill="#474b45"/><rect x="84.15" y="0.0" width="4.95" height="4.1" fill="#a99f81"/><rect x="89.10000000000001" y="0.0" width="4.95" height="4.1" fill="#afa587"/><rect x="0.0" y="4.1" width="4.95" height="4.1" fill="#3e423c"/><rect x="4.95" y="4.1" width="4.95" height="4.1" fill="#776d5e"/><rect x="9.9" y="4.1" width="4.95" height="4.1" fill="#706657"/><rect x="14.850000000000001" y="4.1" width="4.95" height="4.1" fill="#a49a81"/><rect x="19.8" y="4.1" width="4.95" height="4.1" fill="#645e54"/><rect x="24.75" y="4.1" width="4.95" height="4.1" fill="#9d937a"/><rect x="29.700000000000003" y="4.1" width="4.95" height="4.1" fill="#a3997b"/><rect x="34.65" y="4.1" width="4.95" height="4.1" fill="#9f957c"/><rect x="39.6" y="4.1" width="4.95" height="4.1" fill="#745642"/><rect x="44.550000000000004" y="4.1" width="4.95" height="4.1" fill="#424640"/><rect x="49.5" y="4.1" width="4.95" height="4.1" fill="#5a544a"/><rect x="54.45" y="4.1" width="4.95" height="4.1" fill="#745642"/><rect x="59.400000000000006" y="4.1" width="4.95" height="4.1" fill="#9d937a"/><rect x="64.35000000000001" y="4.1" width="4.95" height="4.1" fill="#a3997b"/><rect x="69.3" y="4.1" width="4.95" height="4.1" fill="#7f7566"/><rect x="74.25" y="4.1" width="4.95" height="4.1" fill="#7b7162"/><rect x="79.2" y="4.1" width="4.95" height="4.1" fill="#6a6056"/><rect x="84.15" y="4.1" width="4.95" height="4.1" fill="#988e75"/><rect x="89.10000000000001" y="4.1" width="4.95" height="4.1" fill="#785a46"/></svg>
<span class="t d" style="letter-spacing:0.188px;margin-right:-0.188px;top:147.65px;line-height:17px;font-size:14px;color:#000;font-weight:bold;right:139.20000000000005px;">0,00</span>
<span class="t d" style="letter-spacing:0.211px;margin-right:-0.211px;top:170.65px;line-height:17px;font-size:14px;color:#000;font-weight:bold;right:1809.2px;">10</span>
<span class="t d" style="letter-spacing:0.312px;top:170.65px;line-height:17px;font-size:14px;color:#000;font-weight:bold;left:101.5px;">31/08/2023</span>
<span class="t d" style="letter-spacing:0.188px;margin-right:-0.188px;top:170.65px;line-height:17px;font-size:14px;color:#000;font-weight:bold;right:1655.2px;">0,00</span>
<span class="t d" style="letter-spacing:0.188px;margin-right:-0.188px;top:170.65px;line-height:17px;font-size:14px;color:#000;font-weight:bold;right:1594.2px;">0,00</span>
<span class="t d" style="letter-spacing:0.188px;margin-right:-0.188px;top:170.65px;line-height:17px;font-size:14px;color:#000;font-weight:bold;right:1509.2px;">0,00</span>
<span class="t d" style="letter-spacing:0.188px;margin-right:-0.188px;top:170.65px;line-height:17px;font-size:14px;color:#000;font-weight:bold;right:1432.2px;">0,00</span>
<span class="t d" style="letter-spacing:-0.153px;top:170.65px;line-height:17px;font-size:14px;color:#000;font-weight:bold;left:478.5px;">1500A</span>
<svg style="left:548px;top:171px;filter:blur(0.35px);" width="70.7" height="15.149999999999999" viewBox="0 0 70.7 15.149999999999999"><rect x="0.0" y="0.0" width="5.05" height="5.05" fill="#484d57"/><rect x="5.05" y="0.0" width="5.05" height="5.05" fill="#9fa4ae"/><rect x="10.1" y="0.0" width="5.05" height="5.05" fill="#9ba0aa"/><rect x="15.149999999999999" y="0.0" width="5.05" height="5.05" fill="#4d525c"/><rect x="20.2" y="0.0" width="5.05" height="5.05" fill="#63636d"/><rect x="25.25" y="0.0" width="5.05" height="5.05" fill="#948f8a"/><rect x="30.299999999999997" y="0.0" width="5.05" height="5.05" fill="#55505f"/><rect x="35.35" y="0.0" width="5.05" height="5.05" fill="#5c5766"/><rect x="40.4" y="0.0" width="5.05" height="5.05" fill="#8a8580"/><rect x="45.449999999999996" y="0.0" width="5.05" height="5.05" fill="#686872"/><rect x="50.5" y="0.0" width="5.05" height="5.05" fill="#8e8984"/><rect x="55.55" y="0.0" width="5.05" height="5.05" fill="#afb4be"/><rect x="60.599999999999994" y="0.0" width="5.05" height="5.05" fill="#6e7882"/><rect x="65.64999999999999" y="0.0" width="5.05" height="5.05" fill="#6b6b75"/><rect x="0.0" y="5.05" width="5.05" height="5.05" fill="#9fa4ae"/><rect x="5.05" y="5.05" width="5.05" height="5.05" fill="#9a9fa9"/><rect x="10.1" y="5.05" width="5.05" height="5.05" fill="#6c7680"/><rect x="15.149999999999999" y="5.05" width="5.05" height="5.05" fill="#6a6a74"/><rect x="20.2" y="5.05" width="5.05" height="5.05" fill="#72635e"/><rect x="25.25" y="5.05" width="5.05" height="5.05" fill="#6c7680"/><rect x="30.299999999999997" y="5.05" width="5.05" height="5.05" fill="#aeb3bd"/><rect x="35.35" y="5.05" width="5.05" height="5.05" fill="#747e88"/><rect x="40.4" y="5.05" width="5.05" height="5.05" fill="#69737d"/><rect x="45.449999999999996" y="5.05" width="5.05" height="5.05" fill="#4c515b"/><rect x="50.5" y="5.05" width="5.05" height="5.05" fill="#5f5f69"/><rect x="55.55" y="5.05" width="5.05" height="5.05" fill="#bcc1cb"/><rect x="60.599999999999994" y="5.05" width="5.05" height="5.05" fill="#595463"/><rect x="65.64999999999999" y="5.05" width="5.05" height="5.05" fill="#80716c"/><rect x="0.0" y="10.1" width="5.05" height="5.05" fill="#e9eaed"/><rect x="5.05" y="10.1" width="5.05" height="5.05" fill="#e2dfde"/><rect x="10.1" y="10.1" width="5.05" height="5.05" fill="#e1dfde"/><rect x="15.149999999999999" y="10.1" width="5.05" height="5.05" fill="#e0dedd"/><rect x="20.2" y="10.1" width="5.05" height="5.05" fill="#d8d6da"/><rect x="25.25" y="10.1" width="5.05" height="5.05" fill="#e6e6e7"/><rect x="30.299999999999997" y="10.1" width="5.05" height="5.05" fill="#eff0f2"/><rect x="35.35" y="10.1" width="5.05" height="5.05" fill="#dfe1e3"/><rect x="40.4" y="10.1" width="5.05" height="5.05" fill="#dedee0"/><rect x="45.449999999999996" y="10.1" width="5.05" height="5.05" fill="#dbdadd"/><rect x="50.5" y="10.1" width="5.05" height="5.05" fill="#dee0e2"/><rect x="55.55" y="10.1" width="5.05" height="5.05" fill="#d8d9db"/><rect x="60.599999999999994" y="10.1" width="5.05" height="5.05" fill="#dddfe1"/><rect x="65.64999999999999" y="10.1" width="5.05" height="5.05" fill="#e8e8e9"/></svg>
<span class="t d" style="top:170.65px;line-height:17px;font-size:14px;color:#000;font-weight:bold;left:632.5px;">0</span>
<span class="t d" style="letter-spacing:0.383px;top:170.65px;line-height:17px;font-size:14px;color:#000;font-weight:bold;left:657.5px;">BN</span>
<span class="t d" style="letter-spacing:0.211px;top:170.65px;line-height:17px;font-size:14px;color:#000;font-weight:bold;left:702.5px;">01</span>
<span class="t d" style="top:169.91px;line-height:20px;font-size:17px;color:#000;font-weight:bold;left:742.7px;-webkit-text-stroke:0.35px #000;">@</span>
<div class="clip" style="left:781px;top:168px;width:120px;height:23px;overflow:hidden"><span class="t d" style="letter-spacing:0.514px;left:0;top:3.2px;font-size:14px;font-weight:bold;line-height:17px">Ticket per Ossige</span></div>
<span class="t d" style="top:170.65px;line-height:17px;font-size:14px;color:#000;font-weight:bold;right:960.2px;">1</span>
<span class="t d" style="letter-spacing:0.188px;margin-right:-0.188px;top:170.65px;line-height:17px;font-size:14px;color:#000;font-weight:bold;right:883.2px;">0,00</span>
<span class="t d" style="letter-spacing:0.191px;margin-right:-0.191px;top:170.65px;line-height:17px;font-size:14px;color:#000;font-weight:bold;right:822.2px;">16,84</span>
<span class="t d" style="letter-spacing:0.188px;margin-right:-0.188px;top:170.65px;line-height:17px;font-size:14px;color:#000;font-weight:bold;right:755.2px;">0,00</span>
<span class="t d" style="letter-spacing:0.188px;margin-right:-0.188px;top:170.65px;line-height:17px;font-size:14px;color:#000;font-weight:bold;right:694.2px;">0,00</span>
<span class="t d" style="letter-spacing:0.191px;margin-right:-0.191px;top:170.65px;line-height:17px;font-size:14px;color:#000;font-weight:bold;right:609.2px;">16,84</span>
<span class="t d" style="letter-spacing:0.188px;margin-right:-0.188px;top:170.65px;line-height:17px;font-size:14px;color:#000;font-weight:bold;right:556.2px;">0,00</span>
<svg style="left:1458px;top:171px;filter:blur(0.35px);" width="155" height="15" viewBox="0 0 155 15"><rect x="0" y="0" width="5" height="5" fill="#dee0e3"/><rect x="5" y="0" width="5" height="5" fill="#e5e4e3"/><rect x="10" y="0" width="5" height="5" fill="#dee0e2"/><rect x="15" y="0" width="5" height="5" fill="#d4d6d8"/><rect x="20" y="0" width="5" height="5" fill="#f0f1f3"/><rect x="30" y="0" width="5" height="5" fill="#e4e1e0"/><rect x="35" y="0" width="5" height="5" fill="#e2e0df"/><rect x="40" y="0" width="5" height="5" fill="#e0dedd"/><rect x="45" y="0" width="5" height="5" fill="#d4d5d8"/><rect x="50" y="0" width="5" height="5" fill="#ebecef"/><rect x="55" y="0" width="5" height="5" fill="#dad9dd"/><rect x="60" y="0" width="5" height="5" fill="#e8e9eb"/><rect x="65" y="0" width="5" height="5" fill="#e2dfde"/><rect x="70" y="0" width="5" height="5" fill="#e0e3e5"/><rect x="75" y="0" width="5" height="5" fill="#e1dfde"/><rect x="80" y="0" width="5" height="5" fill="#e9eaec"/><rect x="85" y="0" width="5" height="5" fill="#e1dfde"/><rect x="90" y="0" width="5" height="5" fill="#d6d7da"/><rect x="95" y="0" width="5" height="5" fill="#d8d7da"/><rect x="100" y="0" width="5" height="5" fill="#e2e0df"/><rect x="105" y="0" width="5" height="5" fill="#eff0f2"/><rect x="110" y="0" width="5" height="5" fill="#e0dddc"/><rect x="115" y="0" width="5" height="5" fill="#ebecee"/><rect x="120" y="0" width="5" height="5" fill="#e5e3e2"/><rect x="125" y="0" width="5" height="5" fill="#eaebed"/><rect x="130" y="0" width="5" height="5" fill="#dcdcde"/><rect x="135" y="0" width="5" height="5" fill="#e7e7e8"/><rect x="140" y="0" width="5" height="5" fill="#d5d6d8"/><rect x="145" y="0" width="5" height="5" fill="#e3e1e0"/><rect x="150" y="0" width="5" height="5" fill="#e0dcdb"/><rect x="0" y="5" width="5" height="5" fill="#776d68"/><rect x="5" y="5" width="5" height="5" fill="#3f444e"/><rect x="10" y="5" width="5" height="5" fill="#474c56"/><rect x="15" y="5" width="5" height="5" fill="#b4b9c3"/><rect x="20" y="5" width="5" height="5" fill="#86817c"/><rect x="30" y="5" width="5" height="5" fill="#9d9da2"/><rect x="35" y="5" width="5" height="5" fill="#909095"/><rect x="40" y="5" width="5" height="5" fill="#96969b"/><rect x="45" y="5" width="5" height="5" fill="#676771"/><rect x="50" y="5" width="5" height="5" fill="#6e7882"/><rect x="55" y="5" width="5" height="5" fill="#a4a9b3"/><rect x="60" y="5" width="5" height="5" fill="#696973"/><rect x="65" y="5" width="5" height="5" fill="#939398"/><rect x="70" y="5" width="5" height="5" fill="#3f444e"/><rect x="75" y="5" width="5" height="5" fill="#a3a8b2"/><rect x="80" y="5" width="5" height="5" fill="#7f7570"/><rect x="85" y="5" width="5" height="5" fill="#acb1bb"/><rect x="90" y="5" width="5" height="5" fill="#585362"/><rect x="95" y="5" width="5" height="5" fill="#a7acb6"/><rect x="100" y="5" width="5" height="5" fill="#bbc0ca"/><rect x="105" y="5" width="5" height="5" fill="#65656f"/><rect x="110" y="5" width="5" height="5" fill="#686872"/><rect x="115" y="5" width="5" height="5" fill="#4d525c"/><rect x="120" y="5" width="5" height="5" fill="#9fa4ae"/><rect x="125" y="5" width="5" height="5" fill="#8a8580"/><rect x="130" y="5" width="5" height="5" fill="#babfc9"/><rect x="135" y="5" width="5" height="5" fill="#7f706b"/><rect x="140" y="5" width="5" height="5" fill="#4e4958"/><rect x="145" y="5" width="5" height="5" fill="#5f5f69"/><rect x="150" y="5" width="5" height="5" fill="#80716c"/><rect x="0" y="10" width="5" height="5" fill="#434852"/><rect x="5" y="10" width="5" height="5" fill="#949499"/><rect x="10" y="10" width="5" height="5" fill="#786e69"/><rect x="15" y="10" width="5" height="5" fill="#7b716c"/><rect x="20" y="10" width="5" height="5" fill="#444953"/><rect x="25" y="10" width="5" height="5" fill="#5c5c66"/><rect x="30" y="10" width="5" height="5" fill="#a7acb6"/><rect x="35" y="10" width="5" height="5" fill="#7f706b"/><rect x="40" y="10" width="5" height="5" fill="#766762"/><rect x="45" y="10" width="5" height="5" fill="#756b66"/><rect x="50" y="10" width="5" height="5" fill="#babfc9"/><rect x="55" y="10" width="5" height="5" fill="#40454f"/><rect x="60" y="10" width="5" height="5" fill="#807671"/><rect x="65" y="10" width="5" height="5" fill="#817772"/><rect x="70" y="10" width="5" height="5" fill="#aeb3bd"/><rect x="75" y="10" width="5" height="5" fill="#514c5b"/><rect x="80" y="10" width="5" height="5" fill="#796f6a"/><rect x="85" y="10" width="5" height="5" fill="#4f4a59"/><rect x="90" y="10" width="5" height="5" fill="#5d5d67"/><rect x="95" y="10" width="5" height="5" fill="#494e58"/><rect x="100" y="10" width="5" height="5" fill="#4f4a59"/><rect x="105" y="10" width="5" height="5" fill="#7c726d"/><rect x="110" y="10" width="5" height="5" fill="#5d5867"/><rect x="115" y="10" width="5" height="5" fill="#909095"/><rect x="120" y="10" width="5" height="5" fill="#585362"/><rect x="125" y="10" width="5" height="5" fill="#756b66"/><rect x="130" y="10" width="5" height="5" fill="#857b76"/><rect x="135" y="10" width="5" height="5" fill="#a0a5af"/><rect x="140" y="10" width="5" height="5" fill="#88837e"/><rect x="145" y="10" width="5" height="5" fill="#796a65"/><rect x="150" y="10" width="5" height="5" fill="#6c6c76"/></svg>
<span class="t d" style="letter-spacing:0.188px;margin-right:-0.188px;top:170.65px;line-height:17px;font-size:14px;color:#000;font-weight:bold;right:139.20000000000005px;">0,00</span>
<span class="t d" style="letter-spacing:0.594px;margin-right:-0.594px;top:193.65px;line-height:17px;font-size:14px;color:#000;font-weight:bold;right:1809.2px;">11</span>
<span class="t d" style="letter-spacing:0.312px;top:193.65px;line-height:17px;font-size:14px;color:#000;font-weight:bold;left:101.5px;">31/08/2023</span>
<span class="t d" style="letter-spacing:0.188px;margin-right:-0.188px;top:193.65px;line-height:17px;font-size:14px;color:#000;font-weight:bold;right:1655.2px;">0,16</span>
<span class="t d" style="letter-spacing:0.188px;margin-right:-0.188px;top:193.65px;line-height:17px;font-size:14px;color:#000;font-weight:bold;right:1594.2px;">0,00</span>
<span class="t d" style="letter-spacing:0.188px;margin-right:-0.188px;top:193.65px;line-height:17px;font-size:14px;color:#000;font-weight:bold;right:1509.2px;">0,04</span>
<span class="t d" style="letter-spacing:0.188px;margin-right:-0.188px;top:193.65px;line-height:17px;font-size:14px;color:#000;font-weight:bold;right:1432.2px;">0,00</span>
<span class="t d" style="letter-spacing:-0.153px;top:193.65px;line-height:17px;font-size:14px;color:#000;font-weight:bold;left:478.5px;">1500A</span>
<svg style="left:548px;top:196px;filter:blur(0.35px);" width="70.7" height="15.149999999999999" viewBox="0 0 70.7 15.149999999999999"><rect x="0.0" y="0.0" width="5.05" height="5.05" fill="#aca284"/><rect x="5.05" y="0.0" width="5.05" height="5.05" fill="#41453f"/><rect x="10.1" y="0.0" width="5.05" height="5.05" fill="#3d413b"/><rect x="15.149999999999999" y="0.0" width="5.05" height="5.05" fill="#b1a789"/><rect x="20.2" y="0.0" width="5.05" height="5.05" fill="#7c7763"/><rect x="25.25" y="0.0" width="5.05" height="5.05" fill="#9e947b"/><rect x="30.299999999999997" y="0.0" width="5.05" height="5.05" fill="#786e5f"/><rect x="35.35" y="0.0" width="5.05" height="5.05" fill="#7f7566"/><rect x="40.4" y="0.0" width="5.05" height="5.05" fill="#948a71"/><rect x="45.449999999999996" y="0.0" width="5.05" height="5.05" fill="#817c68"/><rect x="50.5" y="0.0" width="5.05" height="5.05" fill="#988e75"/><rect x="55.55" y="0.0" width="5.05" height="5.05" fill="#82785f"/><rect x="60.599999999999994" y="0.0" width="5.05" height="5.05" fill="#5c564c"/><rect x="65.64999999999999" y="0.0" width="5.05" height="5.05" fill="#847f6b"/><rect x="0.0" y="5.05" width="5.05" height="5.05" fill="#41453f"/><rect x="5.05" y="5.05" width="5.05" height="5.05" fill="#3c403a"/><rect x="10.1" y="5.05" width="5.05" height="5.05" fill="#5a544a"/><rect x="15.149999999999999" y="5.05" width="5.05" height="5.05" fill="#837e6a"/><rect x="20.2" y="5.05" width="5.05" height="5.05" fill="#725440"/><rect x="25.25" y="5.05" width="5.05" height="5.05" fill="#5a544a"/><rect x="30.299999999999997" y="5.05" width="5.05" height="5.05" fill="#81775e"/><rect x="35.35" y="5.05" width="5.05" height="5.05" fill="#625c52"/><rect x="40.4" y="5.05" width="5.05" height="5.05" fill="#575147"/><rect x="45.449999999999996" y="5.05" width="5.05" height="5.05" fill="#b0a688"/><rect x="50.5" y="5.05" width="5.05" height="5.05" fill="#78735f"/><rect x="55.55" y="5.05" width="5.05" height="5.05" fill="#8f856c"/><rect x="60.599999999999994" y="5.05" width="5.05" height="5.05" fill="#7c7263"/><rect x="65.64999999999999" y="5.05" width="5.05" height="5.05" fill="#80624e"/><rect x="0.0" y="10.1" width="5.05" height="5.05" fill="#d4caae"/><rect x="5.05" y="10.1" width="5.05" height="5.05" fill="#e2d0b1"/><rect x="10.1" y="10.1" width="5.05" height="5.05" fill="#dccfb2"/><rect x="15.149999999999999" y="10.1" width="5.05" height="5.05" fill="#dbceb1"/><rect x="20.2" y="10.1" width="5.05" height="5.05" fill="#ded1b4"/><rect x="25.25" y="10.1" width="5.05" height="5.05" fill="#e7daba"/><rect x="30.299999999999997" y="10.1" width="5.05" height="5.05" fill="#e4d7b7"/><rect x="35.35" y="10.1" width="5.05" height="5.05" fill="#daceb1"/><rect x="40.4" y="10.1" width="5.05" height="5.05" fill="#e3d7b8"/><rect x="45.449999999999996" y="10.1" width="5.05" height="5.05" fill="#e2d4b7"/><rect x="50.5" y="10.1" width="5.05" height="5.05" fill="#d9cdb0"/><rect x="55.55" y="10.1" width="5.05" height="5.05" fill="#ede0bf"/><rect x="60.599999999999994" y="10.1" width="5.05" height="5.05" fill="#d8ccaf"/><rect x="65.64999999999999" y="10.1" width="5.05" height="5.05" fill="#e9dcbc"/></svg>
<span class="t d" style="top:193.65px;line-height:17px;font-size:14px;color:#000;font-weight:bold;left:632.5px;">7</span>
<span class="t d" style="letter-spacing:0.383px;top:193.65px;line-height:17px;font-size:14px;color:#000;font-weight:bold;left:657.5px;">BN</span>
<span class="t d" style="letter-spacing:0.211px;top:193.65px;line-height:17px;font-size:14px;color:#000;font-weight:bold;left:702.5px;">01</span>
<span class="t d" style="top:192.91px;line-height:20px;font-size:17px;color:#000;font-weight:bold;left:742.7px;-webkit-text-stroke:0.35px #000;">@</span>
<div class="clip" style="left:781px;top:191px;width:120px;height:23px;overflow:hidden"><span class="t d" style="letter-spacing:0.505px;left:0;top:3.2px;font-size:14px;font-weight:bold;line-height:17px">Ticket + Q.Ric.</span></div>
<span class="t d" style="top:193.65px;line-height:17px;font-size:14px;color:#000;font-weight:bold;right:960.2px;">2</span>
<span class="t d" style="letter-spacing:0.188px;margin-right:-0.188px;top:193.65px;line-height:17px;font-size:14px;color:#000;font-weight:bold;right:883.2px;">2,00</span>
<span class="t d" style="letter-spacing:0.188px;margin-right:-0.188px;top:193.65px;line-height:17px;font-size:14px;color:#000;font-weight:bold;right:822.2px;">4,70</span>
<span class="t d" style="letter-spacing:0.188px;margin-right:-0.188px;top:193.65px;line-height:17px;font-size:14px;color:#000;font-weight:bold;right:755.2px;">1,88</span>
<span class="t d" style="letter-spacing:0.188px;margin-right:-0.188px;top:193.65px;line-height:17px;font-size:14px;color:#000;font-weight:bold;right:694.2px;">3,88</span>
<span class="t d" style="letter-spacing:0.188px;margin-right:-0.188px;top:193.65px;line-height:17px;font-size:14px;color:#000;font-weight:bold;right:609.2px;">4,54</span>
<span class="t d" style="letter-spacing:0.188px;margin-right:-0.188px;top:193.65px;line-height:17px;font-size:14px;color:#000;font-weight:bold;right:556.2px;">0,00</span>
<svg style="left:1458px;top:194px;filter:blur(0.35px);" width="155" height="15" viewBox="0 0 155 15"><rect x="0" y="0" width="5" height="5" fill="#5a544a"/><rect x="5" y="0" width="5" height="5" fill="#978d74"/><rect x="10" y="0" width="5" height="5" fill="#595349"/><rect x="15" y="0" width="5" height="5" fill="#a49a7c"/><rect x="20" y="0" width="5" height="5" fill="#8e846b"/><rect x="30" y="0" width="5" height="5" fill="#71675d"/><rect x="35" y="0" width="5" height="5" fill="#6b6157"/><rect x="40" y="0" width="5" height="5" fill="#62584e"/><rect x="45" y="0" width="5" height="5" fill="#a3997b"/><rect x="50" y="0" width="5" height="5" fill="#4a4e48"/><rect x="55" y="0" width="5" height="5" fill="#7e7465"/><rect x="60" y="0" width="5" height="5" fill="#3b3f39"/><rect x="65" y="0" width="5" height="5" fill="#685e54"/><rect x="70" y="0" width="5" height="5" fill="#645e54"/><rect x="75" y="0" width="5" height="5" fill="#675d53"/><rect x="80" y="0" width="5" height="5" fill="#40443e"/><rect x="85" y="0" width="5" height="5" fill="#665c52"/><rect x="90" y="0" width="5" height="5" fill="#aca284"/><rect x="95" y="0" width="5" height="5" fill="#73695a"/><rect x="100" y="0" width="5" height="5" fill="#6a6056"/><rect x="105" y="0" width="5" height="5" fill="#8a8067"/><rect x="110" y="0" width="5" height="5" fill="#765844"/><rect x="115" y="0" width="5" height="5" fill="#484c46"/><rect x="120" y="0" width="5" height="5" fill="#938970"/><rect x="125" y="0" width="5" height="5" fill="#434741"/><rect x="130" y="0" width="5" height="5" fill="#7a7561"/><rect x="135" y="0" width="5" height="5" fill="#9e947b"/><rect x="140" y="0" width="5" height="5" fill="#a69c7e"/><rect x="145" y="0" width="5" height="5" fill="#70665c"/><rect x="150" y="0" width="5" height="5" fill="#735541"/><rect x="0" y="5" width="5" height="5" fill="#63594f"/><rect x="5" y="5" width="5" height="5" fill="#a3997b"/><rect x="10" y="5" width="5" height="5" fill="#aba183"/><rect x="15" y="5" width="5" height="5" fill="#877d64"/><rect x="20" y="5" width="5" height="5" fill="#90866d"/><rect x="30" y="5" width="5" height="5" fill="#a79d84"/><rect x="35" y="5" width="5" height="5" fill="#9a9077"/><rect x="40" y="5" width="5" height="5" fill="#a0967d"/><rect x="45" y="5" width="5" height="5" fill="#807b67"/><rect x="50" y="5" width="5" height="5" fill="#5c564c"/><rect x="55" y="5" width="5" height="5" fill="#464a44"/><rect x="60" y="5" width="5" height="5" fill="#827d69"/><rect x="65" y="5" width="5" height="5" fill="#9d937a"/><rect x="70" y="5" width="5" height="5" fill="#a3997b"/><rect x="75" y="5" width="5" height="5" fill="#454943"/><rect x="80" y="5" width="5" height="5" fill="#6b6157"/><rect x="85" y="5" width="5" height="5" fill="#7f755c"/><rect x="90" y="5" width="5" height="5" fill="#7b7162"/><rect x="95" y="5" width="5" height="5" fill="#494d47"/><rect x="100" y="5" width="5" height="5" fill="#8e846b"/><rect x="105" y="5" width="5" height="5" fill="#7e7965"/><rect x="110" y="5" width="5" height="5" fill="#817c68"/><rect x="115" y="5" width="5" height="5" fill="#b1a789"/><rect x="120" y="5" width="5" height="5" fill="#41453f"/><rect x="125" y="5" width="5" height="5" fill="#948a71"/><rect x="130" y="5" width="5" height="5" fill="#8d836a"/><rect x="135" y="5" width="5" height="5" fill="#7f614d"/><rect x="140" y="5" width="5" height="5" fill="#716758"/><rect x="145" y="5" width="5" height="5" fill="#78735f"/><rect x="150" y="5" width="5" height="5" fill="#80624e"/><rect x="0" y="10" width="5" height="5" fill="#cec2a2"/><rect x="5" y="10" width="5" height="5" fill="#c9bda0"/><rect x="10" y="10" width="5" height="5" fill="#a99d88"/><rect x="15" y="10" width="5" height="5" fill="#aa9f8a"/><rect x="20" y="10" width="5" height="5" fill="#cec2a3"/><rect x="25" y="10" width="5" height="5" fill="#b2a98f"/><rect x="30" y="10" width="5" height="5" fill="#9a9683"/><rect x="35" y="10" width="5" height="5" fill="#b8a187"/><rect x="40" y="10" width="5" height="5" fill="#b39c82"/><rect x="45" y="10" width="5" height="5" fill="#a79b87"/><rect x="50" y="10" width="5" height="5" fill="#bfb497"/><rect x="55" y="10" width="5" height="5" fill="#ccc0a0"/><rect x="60" y="10" width="5" height="5" fill="#ada18d"/><rect x="65" y="10" width="5" height="5" fill="#aea28d"/><rect x="70" y="10" width="5" height="5" fill="#b9ad90"/><rect x="75" y="10" width="5" height="5" fill="#b2a68e"/><rect x="80" y="10" width="5" height="5" fill="#a99e89"/><rect x="85" y="10" width="5" height="5" fill="#b1a58d"/><rect x="90" y="10" width="5" height="5" fill="#b3aa8f"/><rect x="95" y="10" width="5" height="5" fill="#d1c5a5"/><rect x="100" y="10" width="5" height="5" fill="#b1a58d"/><rect x="105" y="10" width="5" height="5" fill="#ab9f8a"/><rect x="110" y="10" width="5" height="5" fill="#b8ac95"/><rect x="115" y="10" width="5" height="5" fill="#c7bb9e"/><rect x="120" y="10" width="5" height="5" fill="#b5aa92"/><rect x="125" y="10" width="5" height="5" fill="#a79b87"/><rect x="130" y="10" width="5" height="5" fill="#b0a48f"/><rect x="135" y="10" width="5" height="5" fill="#96927f"/><rect x="140" y="10" width="5" height="5" fill="#c2b699"/><rect x="145" y="10" width="5" height="5" fill="#b49e83"/><rect x="150" y="10" width="5" height="5" fill="#bbb298"/></svg>
<span class="t d" style="letter-spacing:0.188px;margin-right:-0.188px;top:193.65px;line-height:17px;font-size:14px;color:#000;font-weight:bold;right:139.20000000000005px;">0,00</span>
<span class="t d" style="letter-spacing:0.211px;margin-right:-0.211px;top:216.65px;line-height:17px;font-size:14px;color:#000;font-weight:bold;right:1809.2px;">12</span>
<span class="t d" style="letter-spacing:0.312px;top:216.65px;line-height:17px;font-size:14px;color:#000;font-weight:bold;left:101.5px;">31/08/2023</span>
<span class="t d" style="letter-spacing:0.188px;margin-right:-0.188px;top:216.65px;line-height:17px;font-size:14px;color:#000;font-weight:bold;right:1655.2px;">0,00</span>
<span class="t d" style="letter-spacing:0.188px;margin-right:-0.188px;top:216.65px;line-height:17px;font-size:14px;color:#000;font-weight:bold;right:1594.2px;">0,00</span>
<span class="t d" style="letter-spacing:0.188px;margin-right:-0.188px;top:216.65px;line-height:17px;font-size:14px;color:#000;font-weight:bold;right:1509.2px;">0,00</span>
<span class="t d" style="letter-spacing:0.188px;margin-right:-0.188px;top:216.65px;line-height:17px;font-size:14px;color:#000;font-weight:bold;right:1432.2px;">0,00</span>
<span class="t d" style="letter-spacing:-0.153px;top:216.65px;line-height:17px;font-size:14px;color:#000;font-weight:bold;left:478.5px;">1500A</span>
<svg style="left:548px;top:216px;filter:blur(0.35px);" width="70.7" height="15.149999999999999" viewBox="0 0 70.7 15.149999999999999"><rect x="0.0" y="0.0" width="5.05" height="5.05" fill="#d6d7da"/><rect x="5.05" y="0.0" width="5.05" height="5.05" fill="#e9eaed"/><rect x="10.1" y="0.0" width="5.05" height="5.05" fill="#e9eaec"/><rect x="15.149999999999999" y="0.0" width="5.05" height="5.05" fill="#d7d8db"/><rect x="20.2" y="0.0" width="5.05" height="5.05" fill="#dcdcde"/><rect x="25.25" y="0.0" width="5.05" height="5.05" fill="#e7e6e5"/><rect x="30.299999999999997" y="0.0" width="5.05" height="5.05" fill="#d9d8db"/><rect x="35.35" y="0.0" width="5.05" height="5.05" fill="#dbdadd"/><rect x="40.4" y="0.0" width="5.05" height="5.05" fill="#e5e4e3"/><rect x="45.449999999999996" y="0.0" width="5.05" height="5.05" fill="#dddddf"/><rect x="50.5" y="0.0" width="5.05" height="5.05" fill="#e6e5e3"/><rect x="55.55" y="0.0" width="5.05" height="5.05" fill="#edeef0"/><rect x="60.599999999999994" y="0.0" width="5.05" height="5.05" fill="#dfe1e3"/><rect x="65.64999999999999" y="0.0" width="5.05" height="5.05" fill="#dedee0"/><rect x="0.0" y="5.05" width="5.05" height="5.05" fill="#9fa4ae"/><rect x="5.05" y="5.05" width="5.05" height="5.05" fill="#9a9fa9"/><rect x="10.1" y="5.05" width="5.05" height="5.05" fill="#6c7680"/><rect x="15.149999999999999" y="5.05" width="5.05" height="5.05" fill="#6a6a74"/><rect x="20.2" y="5.05" width="5.05" height="5.05" fill="#72635e"/><rect x="25.25" y="5.05" width="5.05" height="5.05" fill="#6c7680"/><rect x="30.299999999999997" y="5.05" width="5.05" height="5.05" fill="#aeb3bd"/><rect x="35.35" y="5.05" width="5.05" height="5.05" fill="#747e88"/><rect x="40.4" y="5.05" width="5.05" height="5.05" fill="#69737d"/><rect x="45.449999999999996" y="5.05" width="5.05" height="5.05" fill="#4c515b"/><rect x="50.5" y="5.05" width="5.05" height="5.05" fill="#5f5f69"/><rect x="55.55" y="5.05" width="5.05" height="5.05" fill="#bcc1cb"/><rect x="60.599999999999994" y="5.05" width="5.05" height="5.05" fill="#595463"/><rect x="65.64999999999999" y="5.05" width="5.05" height="5.05" fill="#80716c"/><rect x="0.0" y="10.1" width="5.05" height="5.05" fill="#9fa4ae"/><rect x="5.05" y="10.1" width="5.05" height="5.05" fill="#7f706b"/><rect x="10.1" y="10.1" width="5.05" height="5.05" fill="#796f6a"/><rect x="15.149999999999999" y="10.1" width="5.05" height="5.05" fill="#756b66"/><rect x="20.2" y="10.1" width="5.05" height="5.05" fill="#4e4958"/><rect x="25.25" y="10.1" width="5.05" height="5.05" fill="#8f8f94"/><rect x="30.299999999999997" y="10.1" width="5.05" height="5.05" fill="#b9bec8"/><rect x="35.35" y="10.1" width="5.05" height="5.05" fill="#6e7882"/><rect x="40.4" y="10.1" width="5.05" height="5.05" fill="#6b6b75"/><rect x="45.449999999999996" y="10.1" width="5.05" height="5.05" fill="#5c5766"/><rect x="50.5" y="10.1" width="5.05" height="5.05" fill="#6a747e"/><rect x="55.55" y="10.1" width="5.05" height="5.05" fill="#4e535d"/><rect x="60.599999999999994" y="10.1" width="5.05" height="5.05" fill="#66707a"/><rect x="65.64999999999999" y="10.1" width="5.05" height="5.05" fill="#99999e"/></svg>
<span class="t d" style="top:216.65px;line-height:17px;font-size:14px;color:#000;font-weight:bold;left:632.5px;">9</span>
<span class="t d" style="letter-spacing:0.383px;top:216.65px;line-height:17px;font-size:14px;color:#000;font-weight:bold;left:657.5px;">BN</span>
<span class="t d" style="letter-spacing:0.211px;top:216.65px;line-height:17px;font-size:14px;color:#000;font-weight:bold;left:702.5px;">01</span>
<span class="t d" style="top:215.91px;line-height:20px;font-size:17px;color:#000;font-weight:bold;left:742.7px;-webkit-text-stroke:0.35px #000;">@</span>
<div class="clip" style="left:781px;top:214px;width:120px;height:23px;overflow:hidden"><span class="t d" style="letter-spacing:0.514px;left:0;top:3.2px;font-size:14px;font-weight:bold;line-height:17px">Ticket per Ossige</span></div>
<span class="t d" style="top:216.65px;line-height:17px;font-size:14px;color:#000;font-weight:bold;right:960.2px;">1</span>
<span class="t d" style="letter-spacing:0.188px;margin-right:-0.188px;top:216.65px;line-height:17px;font-size:14px;color:#000;font-weight:bold;right:883.2px;">0,00</span>
<span class="t d" style="letter-spacing:0.188px;margin-right:-0.188px;top:216.65px;line-height:17px;font-size:14px;color:#000;font-weight:bold;right:822.2px;">8,42</span>
<span class="t d" style="letter-spacing:0.188px;margin-right:-0.188px;top:216.65px;line-height:17px;font-size:14px;color:#000;font-weight:bold;right:755.2px;">0,00</span>
<span class="t d" style="letter-spacing:0.188px;margin-right:-0.188px;top:216.65px;line-height:17px;font-size:14px;color:#000;font-weight:bold;right:694.2px;">0,00</span>
<span class="t d" style="letter-spacing:0.188px;margin-right:-0.188px;top:216.65px;line-height:17px;font-size:14px;color:#000;font-weight:bold;right:609.2px;">8,42</span>
<span class="t d" style="letter-spacing:0.188px;margin-right:-0.188px;top:216.65px;line-height:17px;font-size:14px;color:#000;font-weight:bold;right:556.2px;">0,00</span>
<svg style="left:1458px;top:219px;filter:blur(0.35px);" width="155" height="15" viewBox="0 0 155 15"><rect x="0" y="0" width="5" height="5" fill="#6c7680"/><rect x="5" y="0" width="5" height="5" fill="#8d8883"/><rect x="10" y="0" width="5" height="5" fill="#6b757f"/><rect x="15" y="0" width="5" height="5" fill="#40454f"/><rect x="20" y="0" width="5" height="5" fill="#bbc0ca"/><rect x="30" y="0" width="5" height="5" fill="#857b76"/><rect x="35" y="0" width="5" height="5" fill="#7f7570"/><rect x="40" y="0" width="5" height="5" fill="#766c67"/><rect x="45" y="0" width="5" height="5" fill="#3f444e"/><rect x="50" y="0" width="5" height="5" fill="#a8adb7"/><rect x="55" y="0" width="5" height="5" fill="#5b5665"/><rect x="60" y="0" width="5" height="5" fill="#999ea8"/><rect x="65" y="0" width="5" height="5" fill="#7c726d"/><rect x="70" y="0" width="5" height="5" fill="#76808a"/><rect x="75" y="0" width="5" height="5" fill="#7b716c"/><rect x="80" y="0" width="5" height="5" fill="#9ea3ad"/><rect x="85" y="0" width="5" height="5" fill="#7a706b"/><rect x="90" y="0" width="5" height="5" fill="#484d57"/><rect x="95" y="0" width="5" height="5" fill="#504b5a"/><rect x="100" y="0" width="5" height="5" fill="#7e746f"/><rect x="105" y="0" width="5" height="5" fill="#b7bcc6"/><rect x="110" y="0" width="5" height="5" fill="#766762"/><rect x="115" y="0" width="5" height="5" fill="#a6abb5"/><rect x="120" y="0" width="5" height="5" fill="#89847f"/><rect x="125" y="0" width="5" height="5" fill="#a1a6b0"/><rect x="130" y="0" width="5" height="5" fill="#61616b"/><rect x="135" y="0" width="5" height="5" fill="#949499"/><rect x="140" y="0" width="5" height="5" fill="#424751"/><rect x="145" y="0" width="5" height="5" fill="#847a75"/><rect x="150" y="0" width="5" height="5" fill="#73645f"/><rect x="0" y="5" width="5" height="5" fill="#776d68"/><rect x="5" y="5" width="5" height="5" fill="#3f444e"/><rect x="10" y="5" width="5" height="5" fill="#474c56"/><rect x="15" y="5" width="5" height="5" fill="#b4b9c3"/><rect x="20" y="5" width="5" height="5" fill="#86817c"/><rect x="30" y="5" width="5" height="5" fill="#9d9da2"/><rect x="35" y="5" width="5" height="5" fill="#909095"/><rect x="40" y="5" width="5" height="5" fill="#96969b"/><rect x="45" y="5" width="5" height="5" fill="#676771"/><rect x="50" y="5" width="5" height="5" fill="#6e7882"/><rect x="55" y="5" width="5" height="5" fill="#a4a9b3"/><rect x="60" y="5" width="5" height="5" fill="#696973"/><rect x="65" y="5" width="5" height="5" fill="#939398"/><rect x="70" y="5" width="5" height="5" fill="#3f444e"/><rect x="75" y="5" width="5" height="5" fill="#a3a8b2"/><rect x="80" y="5" width="5" height="5" fill="#7f7570"/><rect x="85" y="5" width="5" height="5" fill="#acb1bb"/><rect x="90" y="5" width="5" height="5" fill="#585362"/><rect x="95" y="5" width="5" height="5" fill="#a7acb6"/><rect x="100" y="5" width="5" height="5" fill="#bbc0ca"/><rect x="105" y="5" width="5" height="5" fill="#65656f"/><rect x="110" y="5" width="5" height="5" fill="#686872"/><rect x="115" y="5" width="5" height="5" fill="#4d525c"/><rect x="120" y="5" width="5" height="5" fill="#9fa4ae"/><rect x="125" y="5" width="5" height="5" fill="#8a8580"/><rect x="130" y="5" width="5" height="5" fill="#babfc9"/><rect x="135" y="5" width="5" height="5" fill="#7f706b"/><rect x="140" y="5" width="5" height="5" fill="#4e4958"/><rect x="145" y="5" width="5" height="5" fill="#5f5f69"/><rect x="150" y="5" width="5" height="5" fill="#80716c"/><rect x="0" y="10" width="5" height="5" fill="#d5d6d8"/><rect x="5" y="10" width="5" height="5" fill="#e7e7e8"/><rect x="10" y="10" width="5" height="5" fill="#e1dfde"/><rect x="15" y="10" width="5" height="5" fill="#e1dfde"/><rect x="20" y="10" width="5" height="5" fill="#d5d6d9"/><rect x="25" y="10" width="5" height="5" fill="#dbdbdd"/><rect x="30" y="10" width="5" height="5" fill="#ebecee"/><rect x="35" y="10" width="5" height="5" fill="#e2dfde"/><rect x="40" y="10" width="5" height="5" fill="#e0dddc"/><rect x="45" y="10" width="5" height="5" fill="#e0dedd"/><rect x="50" y="10" width="5" height="5" fill="#eff0f3"/><rect x="55" y="10" width="5" height="5" fill="#d4d6d8"/><rect x="60" y="10" width="5" height="5" fill="#e3e0df"/><rect x="65" y="10" width="5" height="5" fill="#e3e1df"/><rect x="70" y="10" width="5" height="5" fill="#edeef0"/><rect x="75" y="10" width="5" height="5" fill="#d8d7da"/><rect x="80" y="10" width="5" height="5" fill="#e1dfde"/><rect x="85" y="10" width="5" height="5" fill="#d8d7da"/><rect x="90" y="10" width="5" height="5" fill="#dbdbdd"/><rect x="95" y="10" width="5" height="5" fill="#d6d8da"/><rect x="100" y="10" width="5" height="5" fill="#d8d7da"/><rect x="105" y="10" width="5" height="5" fill="#e2dfde"/><rect x="110" y="10" width="5" height="5" fill="#dbdadd"/><rect x="115" y="10" width="5" height="5" fill="#e6e6e7"/><rect x="120" y="10" width="5" height="5" fill="#dad9dc"/><rect x="125" y="10" width="5" height="5" fill="#e0dedd"/><rect x="130" y="10" width="5" height="5" fill="#e4e1e0"/><rect x="135" y="10" width="5" height="5" fill="#eaebed"/><rect x="140" y="10" width="5" height="5" fill="#e4e3e2"/><rect x="145" y="10" width="5" height="5" fill="#e1dedd"/><rect x="150" y="10" width="5" height="5" fill="#dedee0"/></svg>
<span class="t d" style="letter-spacing:0.188px;margin-right:-0.188px;top:216.65px;line-height:17px;font-size:14px;color:#000;font-weight:bold;right:139.20000000000005px;">0,00</span>
<span class="t d" style="letter-spacing:0.211px;margin-right:-0.211px;top:239.65px;line-height:17px;font-size:14px;color:#000;font-weight:bold;right:1809.2px;">13</span>
<span class="t d" style="letter-spacing:0.312px;top:239.65px;line-height:17px;font-size:14px;color:#000;font-weight:bold;left:101.5px;">31/08/2023</span>
<span class="t d" style="letter-spacing:0.188px;margin-right:-0.188px;top:239.65px;line-height:17px;font-size:14px;color:#000;font-weight:bold;right:1655.2px;">0,34</span>
<span class="t d" style="letter-spacing:0.188px;margin-right:-0.188px;top:239.65px;line-height:17px;font-size:14px;color:#000;font-weight:bold;right:1594.2px;">0,06</span>
<span class="t d" style="letter-spacing:0.188px;margin-right:-0.188px;top:239.65px;line-height:17px;font-size:14px;color:#000;font-weight:bold;right:1509.2px;">0,06</span>
<span class="t d" style="letter-spacing:0.188px;margin-right:-0.188px;top:239.65px;line-height:17px;font-size:14px;color:#000;font-weight:bold;right:1432.2px;">0,00</span>
<span class="t d" style="letter-spacing:-0.153px;top:239.65px;line-height:17px;font-size:14px;color:#000;font-weight:bold;left:478.5px;">1500A</span>
<svg style="left:548px;top:241px;filter:blur(0.35px);" width="70.7" height="15.149999999999999" viewBox="0 0 70.7 15.149999999999999"><rect x="0.0" y="0.0" width="5.05" height="5.05" fill="#aca284"/><rect x="5.05" y="0.0" width="5.05" height="5.05" fill="#41453f"/><rect x="10.1" y="0.0" width="5.05" height="5.05" fill="#3d413b"/><rect x="15.149999999999999" y="0.0" width="5.05" height="5.05" fill="#b1a789"/><rect x="20.2" y="0.0" width="5.05" height="5.05" fill="#7c7763"/><rect x="25.25" y="0.0" width="5.05" height="5.05" fill="#9e947b"/><rect x="30.299999999999997" y="0.0" width="5.05" height="5.05" fill="#786e5f"/><rect x="35.35" y="0.0" width="5.05" height="5.05" fill="#7f7566"/><rect x="40.4" y="0.0" width="5.05" height="5.05" fill="#948a71"/><rect x="45.449999999999996" y="0.0" width="5.05" height="5.05" fill="#817c68"/><rect x="50.5" y="0.0" width="5.05" height="5.05" fill="#988e75"/><rect x="55.55" y="0.0" width="5.05" height="5.05" fill="#82785f"/><rect x="60.599999999999994" y="0.0" width="5.05" height="5.05" fill="#5c564c"/><rect x="65.64999999999999" y="0.0" width="5.05" height="5.05" fill="#847f6b"/><rect x="0.0" y="5.05" width="5.05" height="5.05" fill="#41453f"/><rect x="5.05" y="5.05" width="5.05" height="5.05" fill="#3c403a"/><rect x="10.1" y="5.05" width="5.05" height="5.05" fill="#5a544a"/><rect x="15.149999999999999" y="5.05" width="5.05" height="5.05" fill="#837e6a"/><rect x="20.2" y="5.05" width="5.05" height="5.05" fill="#725440"/><rect x="25.25" y="5.05" width="5.05" height="5.05" fill="#5a544a"/><rect x="30.299999999999997" y="5.05" width="5.05" height="5.05" fill="#81775e"/><rect x="35.35" y="5.05" width="5.05" height="5.05" fill="#625c52"/><rect x="40.4" y="5.05" width="5.05" height="5.05" fill="#575147"/><rect x="45.449999999999996" y="5.05" width="5.05" height="5.05" fill="#b0a688"/><rect x="50.5" y="5.05" width="5.05" height="5.05" fill="#78735f"/><rect x="55.55" y="5.05" width="5.05" height="5.05" fill="#8f856c"/><rect x="60.599999999999994" y="5.05" width="5.05" height="5.05" fill="#7c7263"/><rect x="65.64999999999999" y="5.05" width="5.05" height="5.05" fill="#80624e"/><rect x="0.0" y="10.1" width="5.05" height="5.05" fill="#96917f"/><rect x="5.05" y="10.1" width="5.05" height="5.05" fill="#b8a187"/><rect x="10.1" y="10.1" width="5.05" height="5.05" fill="#a99e89"/><rect x="15.149999999999999" y="10.1" width="5.05" height="5.05" fill="#a79b87"/><rect x="20.2" y="10.1" width="5.05" height="5.05" fill="#b0a48d"/><rect x="25.25" y="10.1" width="5.05" height="5.05" fill="#c6ba9d"/><rect x="30.299999999999997" y="10.1" width="5.05" height="5.05" fill="#bfb396"/><rect x="35.35" y="10.1" width="5.05" height="5.05" fill="#a49b86"/><rect x="40.4" y="10.1" width="5.05" height="5.05" fill="#bab197"/><rect x="45.449999999999996" y="10.1" width="5.05" height="5.05" fill="#b8ac94"/><rect x="50.5" y="10.1" width="5.05" height="5.05" fill="#a29984"/><rect x="55.55" y="10.1" width="5.05" height="5.05" fill="#d4c8a8"/><rect x="60.599999999999994" y="10.1" width="5.05" height="5.05" fill="#a09682"/><rect x="65.64999999999999" y="10.1" width="5.05" height="5.05" fill="#cbc0a3"/></svg>
<span class="t d" style="top:239.65px;line-height:17px;font-size:14px;color:#000;font-weight:bold;left:632.5px;">0</span>
<span class="t d" style="letter-spacing:0.383px;top:239.65px;line-height:17px;font-size:14px;color:#000;font-weight:bold;left:657.5px;">BN</span>
<span class="t d" style="letter-spacing:0.211px;top:239.65px;line-height:17px;font-size:14px;color:#000;font-weight:bold;left:702.5px;">01</span>
<span class="t d" style="top:238.91px;line-height:20px;font-size:17px;color:#000;font-weight:bold;left:742.7px;-webkit-text-stroke:0.35px #000;">@</span>
<div class="clip" style="left:781px;top:237px;width:120px;height:23px;overflow:hidden"><span class="t d" style="letter-spacing:0.505px;left:0;top:3.2px;font-size:14px;font-weight:bold;line-height:17px">Ticket + Q.Ric.</span></div>
<span class="t d" style="top:239.65px;line-height:17px;font-size:14px;color:#000;font-weight:bold;right:960.2px;">1</span>
<span class="t d" style="letter-spacing:0.188px;margin-right:-0.188px;top:239.65px;line-height:17px;font-size:14px;color:#000;font-weight:bold;right:883.2px;">3,50</span>
<span class="t d" style="letter-spacing:0.188px;margin-right:-0.188px;top:239.65px;line-height:17px;font-size:14px;color:#000;font-weight:bold;right:822.2px;">9,93</span>
<span class="t d" style="letter-spacing:0.188px;margin-right:-0.188px;top:239.65px;line-height:17px;font-size:14px;color:#000;font-weight:bold;right:755.2px;">0,00</span>
<span class="t d" style="letter-spacing:0.188px;margin-right:-0.188px;top:239.65px;line-height:17px;font-size:14px;color:#000;font-weight:bold;right:694.2px;">3,50</span>
<span class="t d" style="letter-spacing:0.188px;margin-right:-0.188px;top:239.65px;line-height:17px;font-size:14px;color:#000;font-weight:bold;right:609.2px;">9,59</span>
<span class="t d" style="letter-spacing:0.188px;margin-right:-0.188px;top:239.65px;line-height:17px;font-size:14px;color:#000;font-weight:bold;right:556.2px;">0,00</span>
<svg style="left:1458px;top:239px;filter:blur(0.35px);" width="155" height="15" viewBox="0 0 155 15"><rect x="0" y="0" width="5" height="5" fill="#d9cdb0"/><rect x="5" y="0" width="5" height="5" fill="#e7daba"/><rect x="10" y="0" width="5" height="5" fill="#d9cdb0"/><rect x="15" y="0" width="5" height="5" fill="#eaddbb"/><rect x="20" y="0" width="5" height="5" fill="#e5d8b8"/><rect x="30" y="0" width="5" height="5" fill="#ded1b5"/><rect x="35" y="0" width="5" height="5" fill="#ddd0b3"/><rect x="40" y="0" width="5" height="5" fill="#dbceb1"/><rect x="45" y="0" width="5" height="5" fill="#e9dcbb"/><rect x="50" y="0" width="5" height="5" fill="#d6ccb0"/><rect x="55" y="0" width="5" height="5" fill="#e1d4b6"/><rect x="60" y="0" width="5" height="5" fill="#d3c9ad"/><rect x="65" y="0" width="5" height="5" fill="#ddcfb3"/><rect x="70" y="0" width="5" height="5" fill="#dccfb3"/><rect x="75" y="0" width="5" height="5" fill="#dccfb2"/><rect x="80" y="0" width="5" height="5" fill="#d4caae"/><rect x="85" y="0" width="5" height="5" fill="#dccfb2"/><rect x="90" y="0" width="5" height="5" fill="#ebdebd"/><rect x="95" y="0" width="5" height="5" fill="#dfd2b4"/><rect x="100" y="0" width="5" height="5" fill="#ddd0b3"/><rect x="105" y="0" width="5" height="5" fill="#e4d7b7"/><rect x="110" y="0" width="5" height="5" fill="#e0ceaf"/><rect x="115" y="0" width="5" height="5" fill="#d5cbb0"/><rect x="120" y="0" width="5" height="5" fill="#e6d9b9"/><rect x="125" y="0" width="5" height="5" fill="#d4caae"/><rect x="130" y="0" width="5" height="5" fill="#e0d4b6"/><rect x="135" y="0" width="5" height="5" fill="#e8dbbb"/><rect x="140" y="0" width="5" height="5" fill="#eaddbc"/><rect x="145" y="0" width="5" height="5" fill="#ded1b4"/><rect x="150" y="0" width="5" height="5" fill="#dfcdae"/><rect x="0" y="5" width="5" height="5" fill="#63594f"/><rect x="5" y="5" width="5" height="5" fill="#a3997b"/><rect x="10" y="5" width="5" height="5" fill="#aba183"/><rect x="15" y="5" width="5" height="5" fill="#877d64"/><rect x="20" y="5" width="5" height="5" fill="#90866d"/><rect x="30" y="5" width="5" height="5" fill="#a79d84"/><rect x="35" y="5" width="5" height="5" fill="#9a9077"/><rect x="40" y="5" width="5" height="5" fill="#a0967d"/><rect x="45" y="5" width="5" height="5" fill="#807b67"/><rect x="50" y="5" width="5" height="5" fill="#5c564c"/><rect x="55" y="5" width="5" height="5" fill="#464a44"/><rect x="60" y="5" width="5" height="5" fill="#827d69"/><rect x="65" y="5" width="5" height="5" fill="#9d937a"/><rect x="70" y="5" width="5" height="5" fill="#a3997b"/><rect x="75" y="5" width="5" height="5" fill="#454943"/><rect x="80" y="5" width="5" height="5" fill="#6b6157"/><rect x="85" y="5" width="5" height="5" fill="#7f755c"/><rect x="90" y="5" width="5" height="5" fill="#7b7162"/><rect x="95" y="5" width="5" height="5" fill="#494d47"/><rect x="100" y="5" width="5" height="5" fill="#8e846b"/><rect x="105" y="5" width="5" height="5" fill="#7e7965"/><rect x="110" y="5" width="5" height="5" fill="#817c68"/><rect x="115" y="5" width="5" height="5" fill="#b1a789"/><rect x="120" y="5" width="5" height="5" fill="#41453f"/><rect x="125" y="5" width="5" height="5" fill="#948a71"/><rect x="130" y="5" width="5" height="5" fill="#8d836a"/><rect x="135" y="5" width="5" height="5" fill="#7f614d"/><rect x="140" y="5" width="5" height="5" fill="#716758"/><rect x="145" y="5" width="5" height="5" fill="#78735f"/><rect x="150" y="5" width="5" height="5" fill="#80624e"/><rect x="0" y="10" width="5" height="5" fill="#a79d7f"/><rect x="5" y="10" width="5" height="5" fill="#9e947b"/><rect x="10" y="10" width="5" height="5" fill="#645a50"/><rect x="15" y="10" width="5" height="5" fill="#675d53"/><rect x="20" y="10" width="5" height="5" fill="#a89e80"/><rect x="25" y="10" width="5" height="5" fill="#75705c"/><rect x="30" y="10" width="5" height="5" fill="#494d47"/><rect x="35" y="10" width="5" height="5" fill="#7f614d"/><rect x="40" y="10" width="5" height="5" fill="#765844"/><rect x="45" y="10" width="5" height="5" fill="#61574d"/><rect x="50" y="10" width="5" height="5" fill="#8d836a"/><rect x="55" y="10" width="5" height="5" fill="#a49a7c"/><rect x="60" y="10" width="5" height="5" fill="#6c6258"/><rect x="65" y="10" width="5" height="5" fill="#6d6359"/><rect x="70" y="10" width="5" height="5" fill="#81775e"/><rect x="75" y="10" width="5" height="5" fill="#746a5b"/><rect x="80" y="10" width="5" height="5" fill="#655b51"/><rect x="85" y="10" width="5" height="5" fill="#726859"/><rect x="90" y="10" width="5" height="5" fill="#76715d"/><rect x="95" y="10" width="5" height="5" fill="#ada385"/><rect x="100" y="10" width="5" height="5" fill="#726859"/><rect x="105" y="10" width="5" height="5" fill="#685e54"/><rect x="110" y="10" width="5" height="5" fill="#807667"/><rect x="115" y="10" width="5" height="5" fill="#9a9077"/><rect x="120" y="10" width="5" height="5" fill="#7b7162"/><rect x="125" y="10" width="5" height="5" fill="#61574d"/><rect x="130" y="10" width="5" height="5" fill="#71675d"/><rect x="135" y="10" width="5" height="5" fill="#424640"/><rect x="140" y="10" width="5" height="5" fill="#92886f"/><rect x="145" y="10" width="5" height="5" fill="#795b47"/><rect x="150" y="10" width="5" height="5" fill="#85806c"/></svg>
<span class="t d" style="letter-spacing:0.188px;margin-right:-0.188px;top:239.65px;line-height:17px;font-size:14px;color:#000;font-weight:bold;right:139.20000000000005px;">0,00</span>
<span class="t d" style="letter-spacing:0.211px;margin-right:-0.211px;top:262.65px;line-height:17px;font-size:14px;color:#000;font-weight:bold;right:1809.2px;">14</span>
<span class="t d" style="letter-spacing:0.312px;top:262.65px;line-height:17px;font-size:14px;color:#000;font-weight:bold;left:101.5px;">31/08/2023</span>
<span class="t d" style="letter-spacing:0.188px;margin-right:-0.188px;top:262.65px;line-height:17px;font-size:14px;color:#000;font-weight:bold;right:1655.2px;">0,64</span>
<span class="t d" style="letter-spacing:0.188px;margin-right:-0.188px;top:262.65px;line-height:17px;font-size:14px;color:#000;font-weight:bold;right:1594.2px;">0,00</span>
<span class="t d" style="letter-spacing:0.188px;margin-right:-0.188px;top:262.65px;line-height:17px;font-size:14px;color:#000;font-weight:bold;right:1509.2px;">0,12</span>
<span class="t d" style="letter-spacing:0.188px;margin-right:-0.188px;top:262.65px;line-height:17px;font-size:14px;color:#000;font-weight:bold;right:1432.2px;">0,00</span>
<span class="t d" style="letter-spacing:-0.153px;top:262.65px;line-height:17px;font-size:14px;color:#000;font-weight:bold;left:478.5px;">1500A</span>
<svg style="left:548px;top:261px;filter:blur(0.35px);" width="70.7" height="15.149999999999999" viewBox="0 0 70.7 15.149999999999999"><rect x="0.0" y="0.0" width="5.05" height="5.05" fill="#d6d7da"/><rect x="5.05" y="0.0" width="5.05" height="5.05" fill="#e9eaed"/><rect x="10.1" y="0.0" width="5.05" height="5.05" fill="#e9eaec"/><rect x="15.149999999999999" y="0.0" width="5.05" height="5.05" fill="#d7d8db"/><rect x="20.2" y="0.0" width="5.05" height="5.05" fill="#dcdcde"/><rect x="25.25" y="0.0" width="5.05" height="5.05" fill="#e7e6e5"/><rect x="30.299999999999997" y="0.0" width="5.05" height="5.05" fill="#d9d8db"/><rect x="35.35" y="0.0" width="5.05" height="5.05" fill="#dbdadd"/><rect x="40.4" y="0.0" width="5.05" height="5.05" fill="#e5e4e3"/><rect x="45.449999999999996" y="0.0" width="5.05" height="5.05" fill="#dddddf"/><rect x="50.5" y="0.0" width="5.05" height="5.05" fill="#e6e5e3"/><rect x="55.55" y="0.0" width="5.05" height="5.05" fill="#edeef0"/><rect x="60.599999999999994" y="0.0" width="5.05" height="5.05" fill="#dfe1e3"/><rect x="65.64999999999999" y="0.0" width="5.05" height="5.05" fill="#dedee0"/><rect x="0.0" y="5.05" width="5.05" height="5.05" fill="#9fa4ae"/><rect x="5.05" y="5.05" width="5.05" height="5.05" fill="#9a9fa9"/><rect x="10.1" y="5.05" width="5.05" height="5.05" fill="#6c7680"/><rect x="15.149999999999999" y="5.05" width="5.05" height="5.05" fill="#6a6a74"/><rect x="20.2" y="5.05" width="5.05" height="5.05" fill="#72635e"/><rect x="25.25" y="5.05" width="5.05" height="5.05" fill="#6c7680"/><rect x="30.299999999999997" y="5.05" width="5.05" height="5.05" fill="#aeb3bd"/><rect x="35.35" y="5.05" width="5.05" height="5.05" fill="#747e88"/><rect x="40.4" y="5.05" width="5.05" height="5.05" fill="#69737d"/><rect x="45.449999999999996" y="5.05" width="5.05" height="5.05" fill="#4c515b"/><rect x="50.5" y="5.05" width="5.05" height="5.05" fill="#5f5f69"/><rect x="55.55" y="5.05" width="5.05" height="5.05" fill="#bcc1cb"/><rect x="60.599999999999994" y="5.05" width="5.05" height="5.05" fill="#595463"/><rect x="65.64999999999999" y="5.05" width="5.05" height="5.05" fill="#80716c"/><rect x="0.0" y="10.1" width="5.05" height="5.05" fill="#9fa4ae"/><rect x="5.05" y="10.1" width="5.05" height="5.05" fill="#7f706b"/><rect x="10.1" y="10.1" width="5.05" height="5.05" fill="#796f6a"/><rect x="15.149999999999999" y="10.1" width="5.05" height="5.05" fill="#756b66"/><rect x="20.2" y="10.1" width="5.05" height="5.05" fill="#4e4958"/><rect x="25.25" y="10.1" width="5.05" height="5.05" fill="#8f8f94"/><rect x="30.299999999999997" y="10.1" width="5.05" height="5.05" fill="#b9bec8"/><rect x="35.35" y="10.1" width="5.05" height="5.05" fill="#6e7882"/><rect x="40.4" y="10.1" width="5.05" height="5.05" fill="#6b6b75"/><rect x="45.449999999999996" y="10.1" width="5.05" height="5.05" fill="#5c5766"/><rect x="50.5" y="10.1" width="5.05" height="5.05" fill="#6a747e"/><rect x="55.55" y="10.1" width="5.05" height="5.05" fill="#4e535d"/><rect x="60.599999999999994" y="10.1" width="5.05" height="5.05" fill="#66707a"/><rect x="65.64999999999999" y="10.1" width="5.05" height="5.05" fill="#99999e"/></svg>
<span class="t d" style="top:262.65px;line-height:17px;font-size:14px;color:#000;font-weight:bold;left:632.5px;">2</span>
<span class="t d" style="letter-spacing:0.383px;top:262.65px;line-height:17px;font-size:14px;color:#000;font-weight:bold;left:657.5px;">BN</span>
<span class="t d" style="letter-spacing:0.211px;top:262.65px;line-height:17px;font-size:14px;color:#000;font-weight:bold;left:702.5px;">01</span>
<span class="t d" style="top:261.91px;line-height:20px;font-size:17px;color:#000;font-weight:bold;left:742.7px;-webkit-text-stroke:0.35px #000;">@</span>
<div class="clip" style="left:781px;top:260px;width:120px;height:23px;overflow:hidden"><span class="t d" style="letter-spacing:0.505px;left:0;top:3.2px;font-size:14px;font-weight:bold;line-height:17px">Ticket + Q.Ric.</span></div>
<span class="t d" style="top:262.65px;line-height:17px;font-size:14px;color:#000;font-weight:bold;right:960.2px;">1</span>
<span class="t d" style="letter-spacing:0.188px;margin-right:-0.188px;top:262.65px;line-height:17px;font-size:14px;color:#000;font-weight:bold;right:883.2px;">0,00</span>
<span class="t d" style="letter-spacing:0.191px;margin-right:-0.191px;top:262.65px;line-height:17px;font-size:14px;color:#000;font-weight:bold;right:822.2px;">18,64</span>
<span class="t d" style="letter-spacing:0.188px;margin-right:-0.188px;top:262.65px;line-height:17px;font-size:14px;color:#000;font-weight:bold;right:755.2px;">6,00</span>
<span class="t d" style="letter-spacing:0.188px;margin-right:-0.188px;top:262.65px;line-height:17px;font-size:14px;color:#000;font-weight:bold;right:694.2px;">6,00</span>
<span class="t d" style="letter-spacing:0.191px;margin-right:-0.191px;top:262.65px;line-height:17px;font-size:14px;color:#000;font-weight:bold;right:609.2px;">18,00</span>
<span class="t d" style="letter-spacing:0.188px;margin-right:-0.188px;top:262.65px;line-height:17px;font-size:14px;color:#000;font-weight:bold;right:556.2px;">0,00</span>
<svg style="left:1458px;top:264px;filter:blur(0.35px);" width="155" height="15" viewBox="0 0 155 15"><rect x="0" y="0" width="5" height="5" fill="#aeb3b9"/><rect x="5" y="0" width="5" height="5" fill="#c0bdba"/><rect x="10" y="0" width="5" height="5" fill="#adb3b8"/><rect x="15" y="0" width="5" height="5" fill="#95989e"/><rect x="20" y="0" width="5" height="5" fill="#d9dce1"/><rect x="30" y="0" width="5" height="5" fill="#bbb6b3"/><rect x="35" y="0" width="5" height="5" fill="#b8b3b0"/><rect x="40" y="0" width="5" height="5" fill="#b3aeab"/><rect x="45" y="0" width="5" height="5" fill="#95989d"/><rect x="50" y="0" width="5" height="5" fill="#cfd1d7"/><rect x="55" y="0" width="5" height="5" fill="#a4a2aa"/><rect x="60" y="0" width="5" height="5" fill="#c6c9cf"/><rect x="65" y="0" width="5" height="5" fill="#b6b1ae"/><rect x="70" y="0" width="5" height="5" fill="#b3b9be"/><rect x="75" y="0" width="5" height="5" fill="#b6b0ae"/><rect x="80" y="0" width="5" height="5" fill="#c9ccd1"/><rect x="85" y="0" width="5" height="5" fill="#b5b0ad"/><rect x="90" y="0" width="5" height="5" fill="#9a9da2"/><rect x="95" y="0" width="5" height="5" fill="#9e9ca4"/><rect x="100" y="0" width="5" height="5" fill="#b8b2af"/><rect x="105" y="0" width="5" height="5" fill="#d7dadf"/><rect x="110" y="0" width="5" height="5" fill="#b3aba8"/><rect x="115" y="0" width="5" height="5" fill="#ced0d6"/><rect x="120" y="0" width="5" height="5" fill="#bebbb8"/><rect x="125" y="0" width="5" height="5" fill="#cbced3"/><rect x="130" y="0" width="5" height="5" fill="#a8a8ad"/><rect x="135" y="0" width="5" height="5" fill="#c4c4c6"/><rect x="140" y="0" width="5" height="5" fill="#97999f"/><rect x="145" y="0" width="5" height="5" fill="#bbb5b3"/><rect x="150" y="0" width="5" height="5" fill="#b2a9a7"/><rect x="0" y="5" width="5" height="5" fill="#776d68"/><rect x="5" y="5" width="5" height="5" fill="#3f444e"/><rect x="10" y="5" width="5" height="5" fill="#474c56"/><rect x="15" y="5" width="5" height="5" fill="#b4b9c3"/><rect x="20" y="5" width="5" height="5" fill="#86817c"/><rect x="30" y="5" width="5" height="5" fill="#9d9da2"/><rect x="35" y="5" width="5" height="5" fill="#909095"/><rect x="40" y="5" width="5" height="5" fill="#96969b"/><rect x="45" y="5" width="5" height="5" fill="#676771"/><rect x="50" y="5" width="5" height="5" fill="#6e7882"/><rect x="55" y="5" width="5" height="5" fill="#a4a9b3"/><rect x="60" y="5" width="5" height="5" fill="#696973"/><rect x="65" y="5" width="5" height="5" fill="#939398"/><rect x="70" y="5" width="5" height="5" fill="#3f444e"/><rect x="75" y="5" width="5" height="5" fill="#a3a8b2"/><rect x="80" y="5" width="5" height="5" fill="#7f7570"/><rect x="85" y="5" width="5" height="5" fill="#acb1bb"/><rect x="90" y="5" width="5" height="5" fill="#585362"/><rect x="95" y="5" width="5" height="5" fill="#a7acb6"/><rect x="100" y="5" width="5" height="5" fill="#bbc0ca"/><rect x="105" y="5" width="5" height="5" fill="#65656f"/><rect x="110" y="5" width="5" height="5" fill="#686872"/><rect x="115" y="5" width="5" height="5" fill="#4d525c"/><rect x="120" y="5" width="5" height="5" fill="#9fa4ae"/><rect x="125" y="5" width="5" height="5" fill="#8a8580"/><rect x="130" y="5" width="5" height="5" fill="#babfc9"/><rect x="135" y="5" width="5" height="5" fill="#7f706b"/><rect x="140" y="5" width="5" height="5" fill="#4e4958"/><rect x="145" y="5" width="5" height="5" fill="#5f5f69"/><rect x="150" y="5" width="5" height="5" fill="#80716c"/><rect x="0" y="10" width="5" height="5" fill="#d5d6d8"/><rect x="5" y="10" width="5" height="5" fill="#e7e7e8"/><rect x="10" y="10" width="5" height="5" fill="#e1dfde"/><rect x="15" y="10" width="5" height="5" fill="#e1dfde"/><rect x="20" y="10" width="5" height="5" fill="#d5d6d9"/><rect x="25" y="10" width="5" height="5" fill="#dbdbdd"/><rect x="30" y="10" width="5" height="5" fill="#ebecee"/><rect x="35" y="10" width="5" height="5" fill="#e2dfde"/><rect x="40" y="10" width="5" height="5" fill="#e0dddc"/><rect x="45" y="10" width="5" height="5" fill="#e0dedd"/><rect x="50" y="10" width="5" height="5" fill="#eff0f3"/><rect x="55" y="10" width="5" height="5" fill="#d4d6d8"/><rect x="60" y="10" width="5" height="5" fill="#e3e0df"/><rect x="65" y="10" width="5" height="5" fill="#e3e1df"/><rect x="70" y="10" width="5" height="5" fill="#edeef0"/><rect x="75" y="10" width="5" height="5" fill="#d8d7da"/><rect x="80" y="10" width="5" height="5" fill="#e1dfde"/><rect x="85" y="10" width="5" height="5" fill="#d8d7da"/><rect x="90" y="10" width="5" height="5" fill="#dbdbdd"/><rect x="95" y="10" width="5" height="5" fill="#d6d8da"/><rect x="100" y="10" width="5" height="5" fill="#d8d7da"/><rect x="105" y="10" width="5" height="5" fill="#e2dfde"/><rect x="110" y="10" width="5" height="5" fill="#dbdadd"/><rect x="115" y="10" width="5" height="5" fill="#e6e6e7"/><rect x="120" y="10" width="5" height="5" fill="#dad9dc"/><rect x="125" y="10" width="5" height="5" fill="#e0dedd"/><rect x="130" y="10" width="5" height="5" fill="#e4e1e0"/><rect x="135" y="10" width="5" height="5" fill="#eaebed"/><rect x="140" y="10" width="5" height="5" fill="#e4e3e2"/><rect x="145" y="10" width="5" height="5" fill="#e1dedd"/><rect x="150" y="10" width="5" height="5" fill="#dedee0"/></svg>
<span class="t d" style="letter-spacing:0.188px;margin-right:-0.188px;top:262.65px;line-height:17px;font-size:14px;color:#000;font-weight:bold;right:139.20000000000005px;">0,00</span>
<span class="t d" style="letter-spacing:0.211px;margin-right:-0.211px;top:285.65px;line-height:17px;font-size:14px;color:#000;font-weight:bold;right:1809.2px;">15</span>
<span class="t d" style="letter-spacing:0.312px;top:285.65px;line-height:17px;font-size:14px;color:#000;font-weight:bold;left:101.5px;">31/08/2023</span>
<span class="t d" style="letter-spacing:0.188px;margin-right:-0.188px;top:285.65px;line-height:17px;font-size:14px;color:#000;font-weight:bold;right:1655.2px;">1,35</span>
<span class="t d" style="letter-spacing:0.188px;margin-right:-0.188px;top:285.65px;line-height:17px;font-size:14px;color:#000;font-weight:bold;right:1594.2px;">0,13</span>
<span class="t d" style="letter-spacing:0.188px;margin-right:-0.188px;top:285.65px;line-height:17px;font-size:14px;color:#000;font-weight:bold;right:1509.2px;">0,25</span>
<span class="t d" style="letter-spacing:0.188px;margin-right:-0.188px;top:285.65px;line-height:17px;font-size:14px;color:#000;font-weight:bold;right:1432.2px;">0,00</span>
<span class="t d" style="letter-spacing:-0.153px;top:285.65px;line-height:17px;font-size:14px;color:#000;font-weight:bold;left:478.5px;">1500A</span>
<svg style="left:548px;top:286px;filter:blur(0.35px);" width="70.7" height="15.149999999999999" viewBox="0 0 70.7 15.149999999999999"><rect x="0.0" y="0.0" width="5.05" height="5.05" fill="#d0c5a5"/><rect x="5.05" y="0.0" width="5.05" height="5.05" fill="#96917f"/><rect x="10.1" y="0.0" width="5.05" height="5.05" fill="#938f7d"/><rect x="15.149999999999999" y="0.0" width="5.05" height="5.05" fill="#d3c7a8"/><rect x="20.2" y="0.0" width="5.05" height="5.05" fill="#b6ad93"/><rect x="25.25" y="0.0" width="5.05" height="5.05" fill="#c9bda0"/><rect x="30.299999999999997" y="0.0" width="5.05" height="5.05" fill="#b4a890"/><rect x="35.35" y="0.0" width="5.05" height="5.05" fill="#b8ac94"/><rect x="40.4" y="0.0" width="5.05" height="5.05" fill="#c3b79a"/><rect x="45.449999999999996" y="0.0" width="5.05" height="5.05" fill="#b9b095"/><rect x="50.5" y="0.0" width="5.05" height="5.05" fill="#c5ba9d"/><rect x="55.55" y="0.0" width="5.05" height="5.05" fill="#b9ae90"/><rect x="60.599999999999994" y="0.0" width="5.05" height="5.05" fill="#a49b86"/><rect x="65.64999999999999" y="0.0" width="5.05" height="5.05" fill="#bab197"/><rect x="0.0" y="5.05" width="5.05" height="5.05" fill="#41453f"/><rect x="5.05" y="5.05" width="5.05" height="5.05" fill="#3c403a"/><rect x="10.1" y="5.05" width="5.05" height="5.05" fill="#5a544a"/><rect x="15.149999999999999" y="5.05" width="5.05" height="5.05" fill="#837e6a"/><rect x="20.2" y="5.05" width="5.05" height="5.05" fill="#725440"/><rect x="25.25" y="5.05" width="5.05" height="5.05" fill="#5a544a"/><rect x="30.299999999999997" y="5.05" width="5.05" height="5.05" fill="#81775e"/><rect x="35.35" y="5.05" width="5.05" height="5.05" fill="#625c52"/><rect x="40.4" y="5.05" width="5.05" height="5.05" fill="#575147"/><rect x="45.449999999999996" y="5.05" width="5.05" height="5.05" fill="#b0a688"/><rect x="50.5" y="5.05" width="5.05" height="5.05" fill="#78735f"/><rect x="55.55" y="5.05" width="5.05" height="5.05" fill="#8f856c"/><rect x="60.599999999999994" y="5.05" width="5.05" height="5.05" fill="#7c7263"/><rect x="65.64999999999999" y="5.05" width="5.05" height="5.05" fill="#80624e"/><rect x="0.0" y="10.1" width="5.05" height="5.05" fill="#96917f"/><rect x="5.05" y="10.1" width="5.05" height="5.05" fill="#b8a187"/><rect x="10.1" y="10.1" width="5.05" height="5.05" fill="#a99e89"/><rect x="15.149999999999999" y="10.1" width="5.05" height="5.05" fill="#a79b87"/><rect x="20.2" y="10.1" width="5.05" height="5.05" fill="#b0a48d"/><rect x="25.25" y="10.1" width="5.05" height="5.05" fill="#c6ba9d"/><rect x="30.299999999999997" y="10.1" width="5.05" height="5.05" fill="#bfb396"/><rect x="35.35" y="10.1" width="5.05" height="5.05" fill="#a49b86"/><rect x="40.4" y="10.1" width="5.05" height="5.05" fill="#bab197"/><rect x="45.449999999999996" y="10.1" width="5.05" height="5.05" fill="#b8ac94"/><rect x="50.5" y="10.1" width="5.05" height="5.05" fill="#a29984"/><rect x="55.55" y="10.1" width="5.05" height="5.05" fill="#d4c8a8"/><rect x="60.599999999999994" y="10.1" width="5.05" height="5.05" fill="#a09682"/><rect x="65.64999999999999" y="10.1" width="5.05" height="5.05" fill="#cbc0a3"/></svg>
<span class="t d" style="top:285.65px;line-height:17px;font-size:14px;color:#000;font-weight:bold;left:632.5px;">4</span>
<span class="t d" style="letter-spacing:0.383px;top:285.65px;line-height:17px;font-size:14px;color:#000;font-weight:bold;left:657.5px;">BN</span>
<span class="t d" style="letter-spacing:0.211px;top:285.65px;line-height:17px;font-size:14px;color:#000;font-weight:bold;left:702.5px;">01</span>
<span class="t d" style="top:284.91px;line-height:20px;font-size:17px;color:#000;font-weight:bold;left:742.7px;-webkit-text-stroke:0.35px #000;">@</span>
<div class="clip" style="left:781px;top:283px;width:120px;height:23px;overflow:hidden"><span class="t d" style="letter-spacing:0.505px;left:0;top:3.2px;font-size:14px;font-weight:bold;line-height:17px">Ticket + Q.Ric.</span></div>
<span class="t d" style="top:285.65px;line-height:17px;font-size:14px;color:#000;font-weight:bold;right:960.2px;">2</span>
<span class="t d" style="letter-spacing:0.188px;margin-right:-0.188px;top:285.65px;line-height:17px;font-size:14px;color:#000;font-weight:bold;right:883.2px;">3,50</span>
<span class="t d" style="letter-spacing:0.191px;margin-right:-0.191px;top:285.65px;line-height:17px;font-size:14px;color:#000;font-weight:bold;right:822.2px;">39,49</span>
<span class="t d" style="letter-spacing:0.188px;margin-right:-0.188px;top:285.65px;line-height:17px;font-size:14px;color:#000;font-weight:bold;right:755.2px;">6,00</span>
<span class="t d" style="letter-spacing:0.188px;margin-right:-0.188px;top:285.65px;line-height:17px;font-size:14px;color:#000;font-weight:bold;right:694.2px;">9,50</span>
<span class="t d" style="letter-spacing:0.191px;margin-right:-0.191px;top:285.65px;line-height:17px;font-size:14px;color:#000;font-weight:bold;right:609.2px;">38,14</span>
<span class="t d" style="letter-spacing:0.188px;margin-right:-0.188px;top:285.65px;line-height:17px;font-size:14px;color:#000;font-weight:bold;right:556.2px;">0,00</span>
<svg style="left:1458px;top:284px;filter:blur(0.35px);" width="155" height="15" viewBox="0 0 155 15"><rect x="0" y="0" width="5" height="5" fill="#d9cdb0"/><rect x="5" y="0" width="5" height="5" fill="#e7daba"/><rect x="10" y="0" width="5" height="5" fill="#d9cdb0"/><rect x="15" y="0" width="5" height="5" fill="#eaddbb"/><rect x="20" y="0" width="5" height="5" fill="#e5d8b8"/><rect x="30" y="0" width="5" height="5" fill="#ded1b5"/><rect x="35" y="0" width="5" height="5" fill="#ddd0b3"/><rect x="40" y="0" width="5" height="5" fill="#dbceb1"/><rect x="45" y="0" width="5" height="5" fill="#e9dcbb"/><rect x="50" y="0" width="5" height="5" fill="#d6ccb0"/><rect x="55" y="0" width="5" height="5" fill="#e1d4b6"/><rect x="60" y="0" width="5" height="5" fill="#d3c9ad"/><rect x="65" y="0" width="5" height="5" fill="#ddcfb3"/><rect x="70" y="0" width="5" height="5" fill="#dccfb3"/><rect x="75" y="0" width="5" height="5" fill="#dccfb2"/><rect x="80" y="0" width="5" height="5" fill="#d4caae"/><rect x="85" y="0" width="5" height="5" fill="#dccfb2"/><rect x="90" y="0" width="5" height="5" fill="#ebdebd"/><rect x="95" y="0" width="5" height="5" fill="#dfd2b4"/><rect x="100" y="0" width="5" height="5" fill="#ddd0b3"/><rect x="105" y="0" width="5" height="5" fill="#e4d7b7"/><rect x="110" y="0" width="5" height="5" fill="#e0ceaf"/><rect x="115" y="0" width="5" height="5" fill="#d5cbb0"/><rect x="120" y="0" width="5" height="5" fill="#e6d9b9"/><rect x="125" y="0" width="5" height="5" fill="#d4caae"/><rect x="130" y="0" width="5" height="5" fill="#e0d4b6"/><rect x="135" y="0" width="5" height="5" fill="#e8dbbb"/><rect x="140" y="0" width="5" height="5" fill="#eaddbc"/><rect x="145" y="0" width="5" height="5" fill="#ded1b4"/><rect x="150" y="0" width="5" height="5" fill="#dfcdae"/><rect x="0" y="5" width="5" height="5" fill="#63594f"/><rect x="5" y="5" width="5" height="5" fill="#a3997b"/><rect x="10" y="5" width="5" height="5" fill="#aba183"/><rect x="15" y="5" width="5" height="5" fill="#877d64"/><rect x="20" y="5" width="5" height="5" fill="#90866d"/><rect x="30" y="5" width="5" height="5" fill="#a79d84"/><rect x="35" y="5" width="5" height="5" fill="#9a9077"/><rect x="40" y="5" width="5" height="5" fill="#a0967d"/><rect x="45" y="5" width="5" height="5" fill="#807b67"/><rect x="50" y="5" width="5" height="5" fill="#5c564c"/><rect x="55" y="5" width="5" height="5" fill="#464a44"/><rect x="60" y="5" width="5" height="5" fill="#827d69"/><rect x="65" y="5" width="5" height="5" fill="#9d937a"/><rect x="70" y="5" width="5" height="5" fill="#a3997b"/><rect x="75" y="5" width="5" height="5" fill="#454943"/><rect x="80" y="5" width="5" height="5" fill="#6b6157"/><rect x="85" y="5" width="5" height="5" fill="#7f755c"/><rect x="90" y="5" width="5" height="5" fill="#7b7162"/><rect x="95" y="5" width="5" height="5" fill="#494d47"/><rect x="100" y="5" width="5" height="5" fill="#8e846b"/><rect x="105" y="5" width="5" height="5" fill="#7e7965"/><rect x="110" y="5" width="5" height="5" fill="#817c68"/><rect x="115" y="5" width="5" height="5" fill="#b1a789"/><rect x="120" y="5" width="5" height="5" fill="#41453f"/><rect x="125" y="5" width="5" height="5" fill="#948a71"/><rect x="130" y="5" width="5" height="5" fill="#8d836a"/><rect x="135" y="5" width="5" height="5" fill="#7f614d"/><rect x="140" y="5" width="5" height="5" fill="#716758"/><rect x="145" y="5" width="5" height="5" fill="#78735f"/><rect x="150" y="5" width="5" height="5" fill="#80624e"/><rect x="0" y="10" width="5" height="5" fill="#a79d7f"/><rect x="5" y="10" width="5" height="5" fill="#9e947b"/><rect x="10" y="10" width="5" height="5" fill="#645a50"/><rect x="15" y="10" width="5" height="5" fill="#675d53"/><rect x="20" y="10" width="5" height="5" fill="#a89e80"/><rect x="25" y="10" width="5" height="5" fill="#75705c"/><rect x="30" y="10" width="5" height="5" fill="#494d47"/><rect x="35" y="10" width="5" height="5" fill="#7f614d"/><rect x="40" y="10" width="5" height="5" fill="#765844"/><rect x="45" y="10" width="5" height="5" fill="#61574d"/><rect x="50" y="10" width="5" height="5" fill="#8d836a"/><rect x="55" y="10" width="5" height="5" fill="#a49a7c"/><rect x="60" y="10" width="5" height="5" fill="#6c6258"/><rect x="65" y="10" width="5" height="5" fill="#6d6359"/><rect x="70" y="10" width="5" height="5" fill="#81775e"/><rect x="75" y="10" width="5" height="5" fill="#746a5b"/><rect x="80" y="10" width="5" height="5" fill="#655b51"/><rect x="85" y="10" width="5" height="5" fill="#726859"/><rect x="90" y="10" width="5" height="5" fill="#76715d"/><rect x="95" y="10" width="5" height="5" fill="#ada385"/><rect x="100" y="10" width="5" height="5" fill="#726859"/><rect x="105" y="10" width="5" height="5" fill="#685e54"/><rect x="110" y="10" width="5" height="5" fill="#807667"/><rect x="115" y="10" width="5" height="5" fill="#9a9077"/><rect x="120" y="10" width="5" height="5" fill="#7b7162"/><rect x="125" y="10" width="5" height="5" fill="#61574d"/><rect x="130" y="10" width="5" height="5" fill="#71675d"/><rect x="135" y="10" width="5" height="5" fill="#424640"/><rect x="140" y="10" width="5" height="5" fill="#92886f"/><rect x="145" y="10" width="5" height="5" fill="#795b47"/><rect x="150" y="10" width="5" height="5" fill="#85806c"/></svg>
<span class="t d" style="letter-spacing:0.188px;margin-right:-0.188px;top:285.65px;line-height:17px;font-size:14px;color:#000;font-weight:bold;right:139.20000000000005px;">0,00</span>
<span class="t d" style="letter-spacing:0.211px;margin-right:-0.211px;top:308.65px;line-height:17px;font-size:14px;color:#000;font-weight:bold;right:1809.2px;">16</span>
<span class="t d" style="letter-spacing:0.312px;top:308.65px;line-height:17px;font-size:14px;color:#000;font-weight:bold;left:101.5px;">31/08/2023</span>
<span class="t d" style="letter-spacing:0.188px;margin-right:-0.188px;top:308.65px;line-height:17px;font-size:14px;color:#000;font-weight:bold;right:1655.2px;">0,00</span>
<span class="t d" style="letter-spacing:0.188px;margin-right:-0.188px;top:308.65px;line-height:17px;font-size:14px;color:#000;font-weight:bold;right:1594.2px;">0,00</span>
<span class="t d" style="letter-spacing:0.188px;margin-right:-0.188px;top:308.65px;line-height:17px;font-size:14px;color:#000;font-weight:bold;right:1509.2px;">0,10</span>
<span class="t d" style="letter-spacing:0.188px;margin-right:-0.188px;top:308.65px;line-height:17px;font-size:14px;color:#000;font-weight:bold;right:1432.2px;">0,00</span>
<span class="t d" style="letter-spacing:-0.153px;top:308.65px;line-height:17px;font-size:14px;color:#000;font-weight:bold;left:478.5px;">1500A</span>
<svg style="left:548px;top:311px;filter:blur(0.35px);" width="70.7" height="15.149999999999999" viewBox="0 0 70.7 15.149999999999999"><rect x="0.0" y="0.0" width="5.05" height="5.05" fill="#484d57"/><rect x="5.05" y="0.0" width="5.05" height="5.05" fill="#9fa4ae"/><rect x="10.1" y="0.0" width="5.05" height="5.05" fill="#9ba0aa"/><rect x="15.149999999999999" y="0.0" width="5.05" height="5.05" fill="#4d525c"/><rect x="20.2" y="0.0" width="5.05" height="5.05" fill="#63636d"/><rect x="25.25" y="0.0" width="5.05" height="5.05" fill="#948f8a"/><rect x="30.299999999999997" y="0.0" width="5.05" height="5.05" fill="#55505f"/><rect x="35.35" y="0.0" width="5.05" height="5.05" fill="#5c5766"/><rect x="40.4" y="0.0" width="5.05" height="5.05" fill="#8a8580"/><rect x="45.449999999999996" y="0.0" width="5.05" height="5.05" fill="#686872"/><rect x="50.5" y="0.0" width="5.05" height="5.05" fill="#8e8984"/><rect x="55.55" y="0.0" width="5.05" height="5.05" fill="#afb4be"/><rect x="60.599999999999994" y="0.0" width="5.05" height="5.05" fill="#6e7882"/><rect x="65.64999999999999" y="0.0" width="5.05" height="5.05" fill="#6b6b75"/><rect x="0.0" y="5.05" width="5.05" height="5.05" fill="#9fa4ae"/><rect x="5.05" y="5.05" width="5.05" height="5.05" fill="#9a9fa9"/><rect x="10.1" y="5.05" width="5.05" height="5.05" fill="#6c7680"/><rect x="15.149999999999999" y="5.05" width="5.05" height="5.05" fill="#6a6a74"/><rect x="20.2" y="5.05" width="5.05" height="5.05" fill="#72635e"/><rect x="25.25" y="5.05" width="5.05" height="5.05" fill="#6c7680"/><rect x="30.299999999999997" y="5.05" width="5.05" height="5.05" fill="#aeb3bd"/><rect x="35.35" y="5.05" width="5.05" height="5.05" fill="#747e88"/><rect x="40.4" y="5.05" width="5.05" height="5.05" fill="#69737d"/><rect x="45.449999999999996" y="5.05" width="5.05" height="5.05" fill="#4c515b"/><rect x="50.5" y="5.05" width="5.05" height="5.05" fill="#5f5f69"/><rect x="55.55" y="5.05" width="5.05" height="5.05" fill="#bcc1cb"/><rect x="60.599999999999994" y="5.05" width="5.05" height="5.05" fill="#595463"/><rect x="65.64999999999999" y="5.05" width="5.05" height="5.05" fill="#80716c"/><rect x="0.0" y="10.1" width="5.05" height="5.05" fill="#e9eaed"/><rect x="5.05" y="10.1" width="5.05" height="5.05" fill="#e2dfde"/><rect x="10.1" y="10.1" width="5.05" height="5.05" fill="#e1dfde"/><rect x="15.149999999999999" y="10.1" width="5.05" height="5.05" fill="#e0dedd"/><rect x="20.2" y="10.1" width="5.05" height="5.05" fill="#d8d6da"/><rect x="25.25" y="10.1" width="5.05" height="5.05" fill="#e6e6e7"/><rect x="30.299999999999997" y="10.1" width="5.05" height="5.05" fill="#eff0f2"/><rect x="35.35" y="10.1" width="5.05" height="5.05" fill="#dfe1e3"/><rect x="40.4" y="10.1" width="5.05" height="5.05" fill="#dedee0"/><rect x="45.449999999999996" y="10.1" width="5.05" height="5.05" fill="#dbdadd"/><rect x="50.5" y="10.1" width="5.05" height="5.05" fill="#dee0e2"/><rect x="55.55" y="10.1" width="5.05" height="5.05" fill="#d8d9db"/><rect x="60.599999999999994" y="10.1" width="5.05" height="5.05" fill="#dddfe1"/><rect x="65.64999999999999" y="10.1" width="5.05" height="5.05" fill="#e8e8e9"/></svg>
<span class="t d" style="top:308.65px;line-height:17px;font-size:14px;color:#000;font-weight:bold;left:632.5px;">8</span>
<span class="t d" style="letter-spacing:0.383px;top:308.65px;line-height:17px;font-size:14px;color:#000;font-weight:bold;left:657.5px;">BN</span>
<span class="t d" style="letter-spacing:0.211px;top:308.65px;line-height:17px;font-size:14px;color:#000;font-weight:bold;left:702.5px;">01</span>
<span class="t d" style="top:307.91px;line-height:20px;font-size:17px;color:#000;font-weight:bold;left:742.7px;-webkit-text-stroke:0.35px #000;">@</span>
<div class="clip" style="left:781px;top:306px;width:120px;height:23px;overflow:hidden"><span class="t d" style="letter-spacing:0.505px;left:0;top:3.2px;font-size:14px;font-weight:bold;line-height:17px">Ticket + Q.Ric.</span></div>
<span class="t d" style="top:308.65px;line-height:17px;font-size:14px;color:#000;font-weight:bold;right:960.2px;">2</span>
<span class="t d" style="letter-spacing:0.188px;margin-right:-0.188px;top:308.65px;line-height:17px;font-size:14px;color:#000;font-weight:bold;right:883.2px;">2,00</span>
<span class="t d" style="letter-spacing:0.191px;margin-right:-0.191px;top:308.65px;line-height:17px;font-size:14px;color:#000;font-weight:bold;right:822.2px;">16,86</span>
<span class="t d" style="letter-spacing:0.188px;margin-right:-0.188px;top:308.65px;line-height:17px;font-size:14px;color:#000;font-weight:bold;right:755.2px;">0,00</span>
<span class="t d" style="letter-spacing:0.188px;margin-right:-0.188px;top:308.65px;line-height:17px;font-size:14px;color:#000;font-weight:bold;right:694.2px;">2,00</span>
<span class="t d" style="letter-spacing:0.191px;margin-right:-0.191px;top:308.65px;line-height:17px;font-size:14px;color:#000;font-weight:bold;right:609.2px;">16,86</span>
<span class="t d" style="letter-spacing:0.188px;margin-right:-0.188px;top:308.65px;line-height:17px;font-size:14px;color:#000;font-weight:bold;right:556.2px;">0,00</span>
<svg style="left:1458px;top:309px;filter:blur(0.35px);" width="155" height="15" viewBox="0 0 155 15"><rect x="0" y="0" width="5" height="5" fill="#aeb3b9"/><rect x="5" y="0" width="5" height="5" fill="#c0bdba"/><rect x="10" y="0" width="5" height="5" fill="#adb3b8"/><rect x="15" y="0" width="5" height="5" fill="#95989e"/><rect x="20" y="0" width="5" height="5" fill="#d9dce1"/><rect x="30" y="0" width="5" height="5" fill="#bbb6b3"/><rect x="35" y="0" width="5" height="5" fill="#b8b3b0"/><rect x="40" y="0" width="5" height="5" fill="#b3aeab"/><rect x="45" y="0" width="5" height="5" fill="#95989d"/><rect x="50" y="0" width="5" height="5" fill="#cfd1d7"/><rect x="55" y="0" width="5" height="5" fill="#a4a2aa"/><rect x="60" y="0" width="5" height="5" fill="#c6c9cf"/><rect x="65" y="0" width="5" height="5" fill="#b6b1ae"/><rect x="70" y="0" width="5" height="5" fill="#b3b9be"/><rect x="75" y="0" width="5" height="5" fill="#b6b0ae"/><rect x="80" y="0" width="5" height="5" fill="#c9ccd1"/><rect x="85" y="0" width="5" height="5" fill="#b5b0ad"/><rect x="90" y="0" width="5" height="5" fill="#9a9da2"/><rect x="95" y="0" width="5" height="5" fill="#9e9ca4"/><rect x="100" y="0" width="5" height="5" fill="#b8b2af"/><rect x="105" y="0" width="5" height="5" fill="#d7dadf"/><rect x="110" y="0" width="5" height="5" fill="#b3aba8"/><rect x="115" y="0" width="5" height="5" fill="#ced0d6"/><rect x="120" y="0" width="5" height="5" fill="#bebbb8"/><rect x="125" y="0" width="5" height="5" fill="#cbced3"/><rect x="130" y="0" width="5" height="5" fill="#a8a8ad"/><rect x="135" y="0" width="5" height="5" fill="#c4c4c6"/><rect x="140" y="0" width="5" height="5" fill="#97999f"/><rect x="145" y="0" width="5" height="5" fill="#bbb5b3"/><rect x="150" y="0" width="5" height="5" fill="#b2a9a7"/><rect x="0" y="5" width="5" height="5" fill="#776d68"/><rect x="5" y="5" width="5" height="5" fill="#3f444e"/><rect x="10" y="5" width="5" height="5" fill="#474c56"/><rect x="15" y="5" width="5" height="5" fill="#b4b9c3"/><rect x="20" y="5" width="5" height="5" fill="#86817c"/><rect x="30" y="5" width="5" height="5" fill="#9d9da2"/><rect x="35" y="5" width="5" height="5" fill="#909095"/><rect x="40" y="5" width="5" height="5" fill="#96969b"/><rect x="45" y="5" width="5" height="5" fill="#676771"/><rect x="50" y="5" width="5" height="5" fill="#6e7882"/><rect x="55" y="5" width="5" height="5" fill="#a4a9b3"/><rect x="60" y="5" width="5" height="5" fill="#696973"/><rect x="65" y="5" width="5" height="5" fill="#939398"/><rect x="70" y="5" width="5" height="5" fill="#3f444e"/><rect x="75" y="5" width="5" height="5" fill="#a3a8b2"/><rect x="80" y="5" width="5" height="5" fill="#7f7570"/><rect x="85" y="5" width="5" height="5" fill="#acb1bb"/><rect x="90" y="5" width="5" height="5" fill="#585362"/><rect x="95" y="5" width="5" height="5" fill="#a7acb6"/><rect x="100" y="5" width="5" height="5" fill="#bbc0ca"/><rect x="105" y="5" width="5" height="5" fill="#65656f"/><rect x="110" y="5" width="5" height="5" fill="#686872"/><rect x="115" y="5" width="5" height="5" fill="#4d525c"/><rect x="120" y="5" width="5" height="5" fill="#9fa4ae"/><rect x="125" y="5" width="5" height="5" fill="#8a8580"/><rect x="130" y="5" width="5" height="5" fill="#babfc9"/><rect x="135" y="5" width="5" height="5" fill="#7f706b"/><rect x="140" y="5" width="5" height="5" fill="#4e4958"/><rect x="145" y="5" width="5" height="5" fill="#5f5f69"/><rect x="150" y="5" width="5" height="5" fill="#80716c"/><rect x="0" y="10" width="5" height="5" fill="#979a9f"/><rect x="5" y="10" width="5" height="5" fill="#c4c4c6"/><rect x="10" y="10" width="5" height="5" fill="#b4afac"/><rect x="15" y="10" width="5" height="5" fill="#b6b0ae"/><rect x="20" y="10" width="5" height="5" fill="#989aa0"/><rect x="25" y="10" width="5" height="5" fill="#a5a5aa"/><rect x="30" y="10" width="5" height="5" fill="#ced1d6"/><rect x="35" y="10" width="5" height="5" fill="#b8b0ad"/><rect x="40" y="10" width="5" height="5" fill="#b3aba8"/><rect x="45" y="10" width="5" height="5" fill="#b3adaa"/><rect x="50" y="10" width="5" height="5" fill="#d9dbe1"/><rect x="55" y="10" width="5" height="5" fill="#95989e"/><rect x="60" y="10" width="5" height="5" fill="#b9b3b0"/><rect x="65" y="10" width="5" height="5" fill="#b9b4b1"/><rect x="70" y="10" width="5" height="5" fill="#d2d5da"/><rect x="75" y="10" width="5" height="5" fill="#9f9ca4"/><rect x="80" y="10" width="5" height="5" fill="#b5afad"/><rect x="85" y="10" width="5" height="5" fill="#9e9ba3"/><rect x="90" y="10" width="5" height="5" fill="#a5a5ab"/><rect x="95" y="10" width="5" height="5" fill="#9a9da3"/><rect x="100" y="10" width="5" height="5" fill="#9e9ba3"/><rect x="105" y="10" width="5" height="5" fill="#b6b1ae"/><rect x="110" y="10" width="5" height="5" fill="#a5a3ab"/><rect x="115" y="10" width="5" height="5" fill="#c1c1c4"/><rect x="120" y="10" width="5" height="5" fill="#a3a0a8"/><rect x="125" y="10" width="5" height="5" fill="#b3adaa"/><rect x="130" y="10" width="5" height="5" fill="#bbb6b3"/><rect x="135" y="10" width="5" height="5" fill="#cacdd3"/><rect x="140" y="10" width="5" height="5" fill="#bdbab8"/><rect x="145" y="10" width="5" height="5" fill="#b5adaa"/><rect x="150" y="10" width="5" height="5" fill="#aeaeb3"/></svg>
<span class="t d" style="letter-spacing:0.188px;margin-right:-0.188px;top:308.65px;line-height:17px;font-size:14px;color:#000;font-weight:bold;right:139.20000000000005px;">0,00</span>
<div style="left:14px;top:145px;width:1874px;height:2px;background:#0000f0"></div>
<div style="left:14px;top:166px;width:1874px;height:2px;background:#0000f0"></div>
<svg style="left:6px;top:150px;" width="7" height="12" viewBox="0 0 7 12"><path d="M0.5 0.5L6 6L0.5 11.5z" fill="#000"/></svg>
<div style="left:1896px;top:196px;width:2px;height:18px;background:#7a7a7a"></div>
<div style="left:18px;top:341px;width:18px;height:2px;background:#858585"></div>
<div style="left:0px;top:334px;width:1px;height:17px;background:#fff"></div>
<div style="left:772px;top:71px;width:126px;height:25px;border:4px solid #ff0000;box-shadow:2px 2px 3px rgba(0,0,0,0.5), inset 2px 2px 3px rgba(0,0,0,0.4)"></div>
<div style="left:946px;top:75px;width:70px;height:19px;border:4px solid #ff0000;box-shadow:2px 2px 3px rgba(0,0,0,0.5), inset 2px 2px 3px rgba(0,0,0,0.4)"></div>
<div style="left:0px;top:351px;width:1906px;height:2px;background:#a2a5ab"></div>
<div style="left:1887px;top:354px;width:1px;height:21px;background:#d9d9d9"></div>
<div style="left:1887px;top:377px;width:1px;height:24px;background:#ececec"></div>
<div style="left:0px;top:353px;width:1889px;height:139px;background:#fff"></div>
<div style="left:1905px;top:353px;width:1px;height:139px;background:#fbfbfb"></div>
<div style="left:0px;top:492px;width:1906px;height:1px;background:#fff"></div>
<div style="left:0px;top:493px;width:1906px;height:1px;background:#a6a6ad"></div>
<div style="left:14px;top:355px;width:1px;height:19px;background:#d9d9d9"></div>
<div style="left:14px;top:377px;width:1px;height:24px;background:#ececec"></div>
<div style="left:209px;top:355px;width:1px;height:19px;background:#d9d9d9"></div>
<div style="left:209px;top:377px;width:1px;height:24px;background:#ececec"></div>
<div style="left:713px;top:355px;width:1px;height:19px;background:#d9d9d9"></div>
<div style="left:713px;top:377px;width:1px;height:24px;background:#ececec"></div>
<div style="left:796px;top:355px;width:1px;height:19px;background:#d9d9d9"></div>
<div style="left:796px;top:377px;width:1px;height:24px;background:#ececec"></div>
<div style="left:829px;top:355px;width:1px;height:19px;background:#d9d9d9"></div>
<div style="left:829px;top:377px;width:1px;height:24px;background:#ececec"></div>
<div style="left:973px;top:355px;width:1px;height:19px;background:#d9d9d9"></div>
<div style="left:973px;top:377px;width:1px;height:24px;background:#ececec"></div>
<div style="left:1117px;top:355px;width:1px;height:19px;background:#d9d9d9"></div>
<div style="left:1117px;top:377px;width:1px;height:24px;background:#ececec"></div>
<div style="left:1250px;top:355px;width:1px;height:19px;background:#d9d9d9"></div>
<div style="left:1250px;top:377px;width:1px;height:24px;background:#ececec"></div>
<div style="left:1339px;top:355px;width:1px;height:19px;background:#d9d9d9"></div>
<div style="left:1339px;top:377px;width:1px;height:24px;background:#ececec"></div>
<div style="left:1415px;top:355px;width:1px;height:19px;background:#d9d9d9"></div>
<div style="left:1415px;top:377px;width:1px;height:24px;background:#ececec"></div>
<div style="left:1527px;top:355px;width:1px;height:19px;background:#d9d9d9"></div>
<div style="left:1527px;top:377px;width:1px;height:24px;background:#ececec"></div>
<div style="left:1634px;top:355px;width:1px;height:19px;background:#d9d9d9"></div>
<div style="left:1634px;top:377px;width:1px;height:24px;background:#ececec"></div>
<div style="left:1752px;top:355px;width:1px;height:19px;background:#d9d9d9"></div>
<div style="left:1752px;top:377px;width:1px;height:24px;background:#ececec"></div>
<div style="left:1824px;top:355px;width:1px;height:19px;background:#d9d9d9"></div>
<div style="left:1824px;top:377px;width:1px;height:24px;background:#ececec"></div>
<div style="left:0px;top:374px;width:14px;height:1px;background:#dcdcdc"></div>
<div style="left:0px;top:403px;width:14px;height:1px;background:#dcdcdc"></div>
<div style="left:14px;top:375px;width:1874px;height:2px;background:#0000f0"></div>
<div style="left:14px;top:401px;width:1874px;height:2px;background:#0000f0"></div>
<svg style="left:3px;top:359px;" width="9" height="9" viewBox="0 0 9 9"><rect x="0.5" y="0.5" width="8" height="8" fill="#f4f4f4" stroke="#8c8c8c"/><path d="M2 4.5h5M4.5 2v5" stroke="#1c2a8c" stroke-width="1"/></svg>
<svg style="left:6px;top:383px;" width="7" height="12" viewBox="0 0 7 12"><path d="M0.5 0.5L6 6L0.5 11.5z" fill="#000"/></svg>
<div class="t" style="top:356.10px;line-height:16px;font-size:13px;color:#000;left:-488.0px;width:1200px;text-align:center;"><span style="letter-spacing:-0.096px;">MinSan</span></div>
<div class="t" style="top:356.10px;line-height:16px;font-size:13px;color:#000;left:-138.5px;width:1200px;text-align:center;"><span style="letter-spacing:0.116px;">Descrizione</span></div>
<div class="t" style="top:356.10px;line-height:16px;font-size:13px;color:#000;left:155.0px;width:1200px;text-align:center;"><span>Cl.</span></div>
<div class="t" style="top:356.10px;line-height:16px;font-size:13px;color:#000;left:213.0px;width:1200px;text-align:center;"><span>M</span></div>
<div class="t" style="top:356.10px;line-height:16px;font-size:13px;color:#000;left:301.5px;width:1200px;text-align:center;"><span style="letter-spacing:-0.057px;">Nt.CUF</span></div>
<div class="t" style="top:356.10px;line-height:16px;font-size:13px;color:#000;left:445.5px;width:1200px;text-align:center;"><span style="letter-spacing:0.090px;">Prezzo F.</span></div>
<div class="t" style="top:356.10px;line-height:16px;font-size:13px;color:#000;left:584.0px;width:1200px;text-align:center;"><span style="letter-spacing:-0.009px;">Prezzo R.</span></div>
<div class="t" style="top:356.10px;line-height:16px;font-size:13px;color:#000;left:695.0px;width:1200px;text-align:center;"><span style="letter-spacing:0.273px;">Q.Pz</span></div>
<div class="t" style="top:356.10px;line-height:16px;font-size:13px;color:#000;left:777.5px;width:1200px;text-align:center;"><span>Pz.</span></div>
<div class="t" style="top:356.10px;line-height:16px;font-size:13px;color:#000;left:871.5px;width:1200px;text-align:center;"><span style="letter-spacing:0.089px;">Prezzo</span></div>
<div class="t" style="top:356.10px;line-height:16px;font-size:13px;color:#000;left:981.0px;width:1200px;text-align:center;"><span style="letter-spacing:-0.154px;">Importo</span></div>
<div class="t" style="top:356.10px;line-height:16px;font-size:13px;color:#000;left:1093.5px;width:1200px;text-align:center;"><span style="letter-spacing:0.206px;">Sc. %</span></div>
<div class="t" style="top:356.10px;line-height:16px;font-size:13px;color:#000;left:1188.5px;width:1200px;text-align:center;"><span style="letter-spacing:0.119px;">Q.Ass</span></div>
<span class="t" style="letter-spacing:0.182px;top:356.10px;line-height:16px;font-size:13px;color:#000;left:1828px;">DPC</span>
<span class="t" style="letter-spacing:0.788px;top:377.07px;line-height:24px;font-size:20px;color:#000;font-weight:bold;left:17.5px;">038494151</span>
<span class="t" style="letter-spacing:0.510px;top:377.07px;line-height:24px;font-size:20px;color:#000;font-weight:bold;left:212px;">ABSEAMED*1SIR 10000UI 1ML</span>
<div class="t" style="top:377.07px;line-height:24px;font-size:20px;color:#000;font-weight:bold;left:155px;width:1200px;text-align:center;"><span>A</span></div>
<div class="clip" style="left:832px;top:377px;width:138.6px;height:24px;overflow:hidden"><span class="t" style="letter-spacing:0.255px;left:0;top:1.3px;font-size:20px;font-weight:bold;line-height:24px">R.STRUT.PUBBL</span></div>
<span class="t" style="letter-spacing:0.905px;margin-right:-0.905px;top:377.07px;line-height:24px;font-size:20px;color:#000;font-weight:bold;right:790.5px;">140,58</span>
<span class="t" style="letter-spacing:0.666px;margin-right:-0.666px;top:377.07px;line-height:24px;font-size:20px;color:#000;font-weight:bold;right:657.5px;">0,00</span>
<span class="t" style="letter-spacing:0.629px;margin-right:-0.629px;top:377.07px;line-height:24px;font-size:20px;color:#000;font-weight:bold;right:568.5px;">1,5</span>
<span class="t" style="letter-spacing:0.775px;margin-right:-0.775px;top:377.07px;line-height:24px;font-size:20px;color:#000;font-weight:bold;right:492.5px;">1</span>
<span class="t" style="letter-spacing:0.886px;margin-right:-0.886px;top:377.07px;line-height:24px;font-size:20px;color:#000;font-weight:bold;right:380.5px;">140,580</span>
<span class="t" style="letter-spacing:0.905px;margin-right:-0.905px;top:377.07px;line-height:24px;font-size:20px;color:#000;font-weight:bold;right:273.5px;">140,58</span>
<span class="t" style="letter-spacing:0.816px;margin-right:-0.816px;top:377.07px;line-height:24px;font-size:20px;color:#000;font-weight:bold;right:155.5px;">12,50 %</span>
<span class="t" style="letter-spacing:0.666px;margin-right:-0.666px;top:377.07px;line-height:24px;font-size:20px;color:#000;font-weight:bold;right:83.5px;">1,50</span>
<span class="t" style="letter-spacing:0.775px;margin-right:-0.775px;top:377.07px;line-height:24px;font-size:20px;color:#000;font-weight:bold;right:19.5px;">0</span>
<div style="left:1246px;top:349px;width:90px;height:21px;border:4px solid #ff0000;box-shadow:2px 2px 3px rgba(0,0,0,0.5), inset 2px 2px 3px rgba(0,0,0,0.4)"></div>
<div style="left:1896px;top:371px;width:2px;height:17px;background:#7a7a7a"></div>
<div style="left:1px;top:498px;width:44px;height:37px;background:#fff;border:1px solid #000;box-sizing:border-box"></div>
<svg style="left:1px;top:498px;" width="44" height="37" viewBox="0 0 44 37"><path d="M15.3 9H23.9L34.2 18.4L23.9 28H15.3L22.5 20.8H7.8V16.2H22.5z" fill="#ff0000"/></svg>
<div style="left:47px;top:499px;width:312px;height:35px;background:#fff;border-bottom:1px solid #7e7e7e;border-radius:2px"></div>
<span class="t" style="display:inline-block;transform:scaleX(0.8476);transform-origin:left center;top:504.37px;line-height:24px;font-size:20px;color:#000;left:383px;">Pz.</span>
<div style="left:411px;top:499px;width:49px;height:35px;background:#f4f4f4;border:1px solid #e6e6e6;box-sizing:border-box"></div>
<span class="t" style="top:501.38px;line-height:29px;font-size:24px;color:#000;font-weight:bold;right:1450.7px;">1</span>
<span class="t" style="display:inline-block;transform:scaleX(0.9246);transform-origin:left center;top:504.37px;line-height:24px;font-size:20px;color:#000;left:465px;">Prezzo:</span>
<div style="left:530px;top:499px;width:77px;height:35px;background:#f4f4f4;border:1px solid #e6e6e6;box-sizing:border-box"></div>
<span class="t" style="letter-spacing:-0.380px;margin-right:0.380px;top:501.38px;line-height:29px;font-size:24px;color:#000;font-weight:bold;right:1302.2px;">0,00</span>
<div style="left:612px;top:499px;width:35px;height:35px;background:#008000;border:1px solid #000;box-sizing:border-box;box-shadow:0 0 0 1px #fbfbfb"></div>
<div style="left:649px;top:499px;width:55px;height:34px;background:#fdfdfd;border:1px solid #d2d2d2;border-radius:4px;box-sizing:border-box"></div>
<div class="t" style="top:504.07px;line-height:24px;font-size:20px;color:#000;font-weight:bold;left:77.29999999999995px;width:1200px;text-align:center;"><span style="letter-spacing:0.125px;">CSV</span></div>
<div style="left:706px;top:499px;width:72px;height:34px;background:#fdfdfd;border:1px solid #d2d2d2;border-radius:4px;box-sizing:border-box"></div>
<div class="t" style="top:504.07px;line-height:24px;font-size:20px;color:#000;font-weight:bold;left:142px;width:1200px;text-align:center;"><span style="letter-spacing:0.089px;">DPC</span></div>
<div style="left:781px;top:498px;width:114px;height:36px;background:#00ff00;border:1px solid #cfc4cf;box-sizing:border-box"></div>
<span class="t" style="display:inline-block;transform:scaleX(0.9195);transform-origin:left center;top:503.87px;line-height:24px;font-size:20px;color:#000;left:787px;">Recupero Si</span>
<div style="left:0px;top:538px;width:1906px;height:1px;background:#f8f8f8"></div>
<div style="left:0px;top:539px;width:1906px;height:1px;background:#606060"></div>
<div style="left:1500px;top:540px;width:406px;height:1px;background:#fafafa"></div>
<div style="left:0px;top:540px;width:1498px;height:333px;background:#fff"></div>
<div style="left:1498px;top:540px;width:1px;height:334px;background:#5c5c5c"></div>
<div style="left:1499px;top:540px;width:1px;height:39px;background:#5c5c5c"></div>
<div style="left:1500px;top:541px;width:1px;height:37px;background:#fafafa"></div>
<div style="left:0px;top:873px;width:1499px;height:1px;background:#5c5c5c"></div>
<div style="left:1499px;top:578px;width:407px;height:1px;background:#6e6e6e"></div>
<div style="left:1499px;top:579px;width:407px;height:1px;background:#fafafa"></div>
<div style="left:1500px;top:577px;width:406px;height:1px;background:#fafafa"></div>
<div class="t" style="top:548.93px;line-height:22px;font-size:18.67px;color:#000;left:1102.5px;width:1200px;text-align:center;"><span style="letter-spacing:0.106px;">Regione: Campania</span></div>
<span class="t" style="letter-spacing:0.642px;top:604.73px;line-height:22px;font-size:18.67px;color:#000;font-weight:bold;left:1506.5px;"><u>M</u>ese/anno</span>
<div style="left:1507px;top:629px;width:122px;height:28px;background:#fff"></div>
<span class="t" style="letter-spacing:0.607px;top:631.83px;line-height:22px;font-size:18.67px;color:#6d6d6d;font-weight:bold;left:1509.5px;">08/2023</span>
<span class="t" style="letter-spacing:0.137px;top:604.73px;line-height:22px;font-size:18.67px;color:#000;font-weight:bold;left:1695.3px;"><u>D</u>ata</span>
<div style="left:1694px;top:629px;width:208px;height:28px;background:#fff;border-bottom:1px solid #868686;border-radius:2px"></div>
<span class="t" style="letter-spacing:0.483px;top:631.83px;line-height:22px;font-size:18.67px;color:#000;left:1696.5px;">31/08/2023</span>
<div style="left:1878px;top:630px;width:23px;height:26px;background:#fdfdfd;border:1px solid #d0d0d0;border-radius:4px;box-sizing:border-box"></div>
<svg style="left:1884px;top:636px;" width="14" height="14" viewBox="0 0 14 14"><rect x="1" y="1.5" width="10" height="10" fill="#fff"/><path d="M1 1.5h10" stroke="#000" stroke-width="1"/><path d="M11.5 2v10" stroke="#00008b" stroke-width="1"/><path d="M1 11.5h11" stroke="#000" stroke-width="1" /><path d="M3 11.5h2M7 11.5h1.5" stroke="#00008b" stroke-width="1"/><path d="M12.5 3v9.5H2" fill="none" stroke="#9a948a" stroke-width="0.8"/><path d="M2.3 5.2L3.6 4.2V9.5M2.3 9.5H5" fill="none" stroke="#000" stroke-width="1"/><path d="M9.6 4.5H6.8V6.6H8.6Q9.8 6.8 9.8 8Q9.8 9.5 8.4 9.5H6.6" fill="none" stroke="#000" stroke-width="1"/></svg>
<span class="t" style="letter-spacing:-0.271px;top:664.23px;line-height:22px;font-size:18.67px;color:#000;font-weight:bold;left:1506.5px;">ASL</span>
<span class="t" style="letter-spacing:0.285px;top:664.23px;line-height:22px;font-size:18.67px;color:#000;font-weight:bold;left:1554px;">Ricetta:</span>
<span class="t" style="letter-spacing:-0.036px;top:664.23px;line-height:22px;font-size:18.67px;color:#000;left:1735.5px;">( &lt; ins. nuova)</span>
<div style="left:1506px;top:688px;width:397px;height:30px;background:#fdfdfd;border:1px solid #d4d4d4;border-radius:2px;box-sizing:border-box"></div>
<span class="t" style="letter-spacing:0.304px;top:692.73px;line-height:22px;font-size:18.67px;color:#000;font-weight:bold;left:1510.6px;">BN01 - ASL Benevento</span>
<svg style="left:1889px;top:700.5px;" width="10" height="7" viewBox="0 0 10 7"><path d="M1 1.5L5 5.5L9 1.5" fill="none" stroke="#5a5a5a" stroke-width="1"/></svg>
<div style="left:1506px;top:753px;width:397px;height:30px;background:#fdfdfd;border:1px solid #d4d4d4;border-radius:2px;box-sizing:border-box"></div>
<span class="t" style="letter-spacing:0.089px;top:757.73px;line-height:22px;font-size:18.67px;color:#000;font-weight:bold;left:1510.3px;"><span style="font-size:23px;line-height:10px;position:relative;top:1.5px">@</span> - Ricette Elettroniche Etico</span>
<svg style="left:1889px;top:765.5px;" width="10" height="7" viewBox="0 0 10 7"><path d="M1 1.5L5 5.5L9 1.5" fill="none" stroke="#5a5a5a" stroke-width="1"/></svg>
<div style="left:1506px;top:816px;width:397px;height:30px;background:#fdfdfd;border:1px solid #d4d4d4;border-radius:2px;box-sizing:border-box"></div>
<span class="t" style="letter-spacing:0.207px;top:820.73px;line-height:22px;font-size:18.67px;color:#000;font-weight:bold;left:1510.6px;">D - Ticket + Q.Ric. (2,00€)</span>
<svg style="left:1889px;top:828.5px;" width="10" height="7" viewBox="0 0 10 7"><path d="M1 1.5L5 5.5L9 1.5" fill="none" stroke="#5a5a5a" stroke-width="1"/></svg>
<span class="t" style="letter-spacing:0.205px;top:726.73px;line-height:22px;font-size:18.67px;color:#000;font-weight:bold;left:1507.3px;">Tipo Ricetta :</span>
<span class="t" style="letter-spacing:0.426px;top:789.73px;line-height:22px;font-size:18.67px;color:#000;font-weight:bold;left:1507.3px;">Tipo Esenzione :</span>
<div style="left:0px;top:874px;width:1906px;height:1px;background:#fdfdfd"></div>
<div style="left:63px;top:875px;width:1780px;height:65px;background:#fff;border:1px solid #5c5c5c;box-sizing:border-box"></div>
<span class="t" style="letter-spacing:0.285px;top:881.73px;line-height:22px;font-size:18.67px;color:#000080;font-weight:bold;left:69.7px;">Griglia Ricette (1), per scorrere le ricette, utilizzare le frecce in alto o in basso, oppure pagina su e pagina giù; M per Altri Dati.</span>
<span class="t" style="letter-spacing:0.308px;top:903.83px;line-height:22px;font-size:18.67px;color:#000080;font-weight:bold;left:69.7px;">Griglia modificabile dall&#x27;operatore.</span>
<svg style="left:1px;top:890px;" width="34" height="34" viewBox="0 0 34 34"><defs><linearGradient id="ig" x1="0.2" y1="0" x2="0.8" y2="1"><stop offset="0" stop-color="#4472e0"/><stop offset="0.5" stop-color="#1e3fb0"/><stop offset="1" stop-color="#172e98"/></linearGradient>
<radialGradient id="ih" cx="0.5" cy="1.05" r="0.75"><stop offset="0" stop-color="#6f9cff" stop-opacity="0.7"/><stop offset="1" stop-color="#7fa8ff" stop-opacity="0"/></radialGradient>
<linearGradient id="is" x1="0" y1="0" x2="1" y2="0"><stop offset="0" stop-color="#fff"/><stop offset="1" stop-color="#c9c9c9"/></linearGradient></defs>
<circle cx="17" cy="17" r="15.9" fill="#fbfbfb" stroke="#767676" stroke-width="0.9"/><circle cx="17" cy="17" r="13.7" fill="url(#ig)" stroke="#1d2f80" stroke-width="0.6"/>
<circle cx="17" cy="17" r="13.4" fill="url(#ih)"/>
<path d="M4.2 15A13 13 0 0 1 29.8 15A24 15 0 0 0 4.2 15z" fill="#fff" opacity="0.13"/>
<circle cx="17.1" cy="8.4" r="2.15" fill="#fff"/><rect x="15.3" y="12.6" width="3.6" height="14" rx="1.6" fill="url(#is)" stroke="#8a93b8" stroke-width="0.4"/></svg>
<svg style="left:1845px;top:898px;" width="32" height="17" viewBox="0 0 33 18"><rect x="0.5" y="0.5" width="32" height="17" rx="2" fill="#dfe7f7" stroke="#26386e" stroke-width="1.3"/><rect x="2" y="2" width="29" height="14" fill="#4a5e98"/><rect x="2.70" y="2.80" width="2.4" height="2.2" fill="#f6f8fe"/><rect x="5.85" y="2.80" width="2.4" height="2.2" fill="#f6f8fe"/><rect x="9.00" y="2.80" width="2.4" height="2.2" fill="#f6f8fe"/><rect x="12.15" y="2.80" width="2.4" height="2.2" fill="#f6f8fe"/><rect x="15.30" y="2.80" width="2.4" height="2.2" fill="#f6f8fe"/><rect x="18.45" y="2.80" width="2.4" height="2.2" fill="#f6f8fe"/><rect x="21.60" y="2.80" width="2.4" height="2.2" fill="#f6f8fe"/><rect x="24.75" y="2.80" width="2.4" height="2.2" fill="#f6f8fe"/><rect x="27.90" y="2.80" width="2.4" height="2.2" fill="#f6f8fe"/><rect x="3.50" y="6.00" width="2.4" height="2.2" fill="#f6f8fe"/><rect x="6.65" y="6.00" width="2.4" height="2.2" fill="#f6f8fe"/><rect x="9.80" y="6.00" width="2.4" height="2.2" fill="#f6f8fe"/><rect x="12.95" y="6.00" width="2.4" height="2.2" fill="#f6f8fe"/><rect x="16.10" y="6.00" width="2.4" height="2.2" fill="#f6f8fe"/><rect x="19.25" y="6.00" width="2.4" height="2.2" fill="#f6f8fe"/><rect x="22.40" y="6.00" width="2.4" height="2.2" fill="#f6f8fe"/><rect x="25.55" y="6.00" width="2.4" height="2.2" fill="#f6f8fe"/><rect x="28.70" y="6.00" width="2.4" height="2.2" fill="#f6f8fe"/><rect x="2.70" y="9.20" width="2.4" height="2.2" fill="#f6f8fe"/><rect x="5.85" y="9.20" width="2.4" height="2.2" fill="#f6f8fe"/><rect x="9.00" y="9.20" width="2.4" height="2.2" fill="#f6f8fe"/><rect x="12.15" y="9.20" width="2.4" height="2.2" fill="#f6f8fe"/><rect x="15.30" y="9.20" width="2.4" height="2.2" fill="#f6f8fe"/><rect x="18.45" y="9.20" width="2.4" height="2.2" fill="#f6f8fe"/><rect x="21.60" y="9.20" width="2.4" height="2.2" fill="#f6f8fe"/><rect x="24.75" y="9.20" width="2.4" height="2.2" fill="#f6f8fe"/><rect x="27.90" y="9.20" width="2.4" height="2.2" fill="#f6f8fe"/><rect x="3.50" y="12.40" width="2.4" height="2.2" fill="#f6f8fe"/><rect x="6.65" y="12.40" width="2.4" height="2.2" fill="#f6f8fe"/><rect x="9.80" y="12.40" width="2.4" height="2.2" fill="#f6f8fe"/><rect x="12.95" y="12.40" width="2.4" height="2.2" fill="#f6f8fe"/><rect x="16.10" y="12.40" width="2.4" height="2.2" fill="#f6f8fe"/><rect x="19.25" y="12.40" width="2.4" height="2.2" fill="#f6f8fe"/><rect x="22.40" y="12.40" width="2.4" height="2.2" fill="#f6f8fe"/><rect x="25.55" y="12.40" width="2.4" height="2.2" fill="#f6f8fe"/><rect x="28.70" y="12.40" width="2.4" height="2.2" fill="#f6f8fe"/><rect x="11" y="12.5" width="11.5" height="1.9" fill="#f2f5fd"/></svg>
<div style="left:0px;top:939px;width:63px;height:1px;background:#fafafa"></div>
<div style="left:0px;top:940px;width:1906px;height:1px;background:#a0a0a0"></div>
<div style="left:0px;top:941px;width:1906px;height:1px;background:#606060"></div>
<div style="left:0px;top:942px;width:1906px;height:1px;background:#f8f8f8"></div>
<div style="left:0px;top:947px;width:1906px;height:1px;background:#a3a3a3"></div>
<div style="left:-4.3px;top:949px;width:316.3px;height:40px;background:#fdfdfd;border:1px solid #c4c4c4;border-radius:4px;box-sizing:border-box"></div>
<div class="t" style="top:958.63px;line-height:22px;font-size:18.67px;color:#000080;font-weight:bold;left:-445.5px;width:1200px;text-align:center;"><span style="letter-spacing:0.270px;">F1 Calcola DCR</span></div>
<svg style="left:301.5px;top:951px;" width="9" height="8" viewBox="0 0 9 8"><path d="M0 0H9V8z" fill="#000080"/></svg>
<div style="left:-4.3px;top:991px;width:316.3px;height:40px;background:#fdfdfd;border:1px solid #c4c4c4;border-radius:4px;box-sizing:border-box"></div>
<span class="t" style="letter-spacing:0.382px;top:1000.03px;line-height:22px;font-size:18.67px;color:#000080;font-weight:bold;left:121.7px;">F7 Stampe</span>
<svg style="left:301.5px;top:993px;" width="9" height="8" viewBox="0 0 9 8"><path d="M0 0H9V8z" fill="#000080"/></svg>
<div style="left:314.3px;top:949px;width:316.3px;height:40px;background:#fdfdfd;border:1px solid #c4c4c4;border-radius:4px;box-sizing:border-box"></div>
<div class="t" style="top:958.63px;line-height:22px;font-size:18.67px;color:#000080;font-weight:bold;left:-126.89999999999998px;width:1200px;text-align:center;"><span style="letter-spacing:0.419px;">F2 Modif.Parametri</span></div>
<div style="left:314.3px;top:991px;width:316.3px;height:40px;background:#fdfdfd;border:1px solid #c4c4c4;border-radius:4px;box-sizing:border-box"></div>
<div class="t" style="top:1000.03px;line-height:22px;font-size:18.67px;color:#000080;font-weight:bold;left:-126.89999999999998px;width:1200px;text-align:center;"><span style="letter-spacing:0.404px;">F8 Scontrini per DCR</span></div>
<svg style="left:620.1px;top:993px;" width="9" height="8" viewBox="0 0 9 8"><path d="M0 0H9V8z" fill="#000080"/></svg>
<div style="left:633.4px;top:949px;width:316.3px;height:40px;background:#fdfdfd;border:1px solid #c4c4c4;border-radius:4px;box-sizing:border-box"></div>
<div class="t" style="top:958.63px;line-height:22px;font-size:18.67px;color:#000080;font-weight:bold;left:192.19999999999993px;width:1200px;text-align:center;"><span style="letter-spacing:0.262px;">F3 Ricette Elettroniche</span></div>
<div style="left:633.4px;top:991px;width:316.3px;height:40px;background:#fdfdfd;border:1px solid #c4c4c4;border-radius:4px;box-sizing:border-box"></div>
<div class="t" style="top:1000.03px;line-height:22px;font-size:18.67px;color:#000080;font-weight:bold;left:192.19999999999993px;width:1200px;text-align:center;"><span style="letter-spacing:0.222px;">F9 Elimina Ricetta</span></div>
<div style="left:952.4px;top:949px;width:316.3px;height:40px;background:#fdfdfd;border:1px solid #c4c4c4;border-radius:4px;box-sizing:border-box"></div>
<div class="t" style="top:958.63px;line-height:22px;font-size:18.67px;color:#000080;font-weight:bold;left:511.1999999999998px;width:1200px;text-align:center;"><span style="letter-spacing:0.238px;">F4 Altro</span></div>
<svg style="left:1258.2px;top:951px;" width="9" height="8" viewBox="0 0 9 8"><path d="M0 0H9V8z" fill="#000080"/></svg>
<div style="left:952.4px;top:991px;width:316.3px;height:40px;background:#f5f5f5;border:1px solid #dcdcdc;border-radius:4px;box-sizing:border-box"></div>
<div class="t" style="top:1000.03px;line-height:22px;font-size:18.67px;color:#838383;font-weight:bold;left:511.1999999999998px;width:1200px;text-align:center;"><span style="letter-spacing:0.391px;">F10 Conf. Parametri</span></div>
<div style="left:1272.0px;top:949px;width:316.3px;height:40px;background:#fdfdfd;border:1px solid #c4c4c4;border-radius:4px;box-sizing:border-box"></div>
<div class="t" style="top:958.63px;line-height:22px;font-size:18.67px;color:#000080;font-weight:bold;left:830.8px;width:1200px;text-align:center;"><span style="letter-spacing:0.248px;">F5 Gestione Ricette</span></div>
<div style="left:1272.0px;top:991px;width:316.3px;height:40px;background:#fdfdfd;border:1px solid #c4c4c4;border-radius:4px;box-sizing:border-box"></div>
<span class="t" style="letter-spacing:0.346px;top:1000.03px;line-height:22px;font-size:18.67px;color:#000080;font-weight:bold;left:1407.6px;">F11 Help</span>
<div style="left:1591.2px;top:949px;width:330px;height:40px;background:#fdfdfd;border:1px solid #c4c4c4;border-radius:4px;box-sizing:border-box"></div>
<div class="t" style="top:958.63px;line-height:22px;font-size:18.67px;color:#000080;font-weight:bold;left:1150.0px;width:1200px;text-align:center;"><span style="letter-spacing:0.741px;">F6 Immagine</span></div>
<div style="left:1591.2px;top:991px;width:330px;height:40px;background:#fdfdfd;border:1px solid #c4c4c4;border-radius:4px;box-sizing:border-box"></div>
<span class="t" style="letter-spacing:0.498px;top:1000.03px;line-height:22px;font-size:18.67px;color:#000080;font-weight:bold;left:1728.5px;">F12 Esci</span>
<svg style="left:89px;top:994px;" width="31" height="31" viewBox="0 0 31 31"><defs><linearGradient id="pp" x1="0" y1="0" x2="0" y2="1"><stop offset="0" stop-color="#f4faff"/><stop offset="1" stop-color="#bcdcf6"/></linearGradient>
<linearGradient id="pb" x1="0" y1="0" x2="0" y2="1"><stop offset="0" stop-color="#bdbdbd"/><stop offset="0.5" stop-color="#e2e2e2"/><stop offset="1" stop-color="#c6c6c6"/></linearGradient></defs>
<rect x="6.4" y="1.4" width="17.4" height="12" fill="url(#pp)" stroke="#4f94cd" stroke-width="1.1"/>
<rect x="0.7" y="11.3" width="29.2" height="15.4" rx="1.4" fill="url(#pb)" stroke="#8c8c8c" stroke-width="0.9"/>
<path d="M5.4 11H24.8V16.2Q24.8 18.2 22.8 18.2H7.4Q5.4 18.2 5.4 16.2z" fill="#6c6c6c"/><rect x="5.4" y="11" width="19.4" height="2" fill="#8a8a8a"/>
<rect x="6.4" y="24" width="17.4" height="8" fill="url(#pp)" stroke="#4f94cd" stroke-width="1.1"/></svg>
<svg style="left:1375px;top:995px;" width="31" height="31" viewBox="0 0 31 31"><defs><linearGradient id="hg" x1="0" y1="0" x2="0" y2="1"><stop offset="0" stop-color="#4c82b8"/><stop offset="1" stop-color="#6b9fd0"/></linearGradient></defs>
<path d="M15.5 0.8L30 15.3L15.5 29.8L1 15.3z" fill="#fbfcfe" stroke="#5b82ad" stroke-width="1.2" stroke-linejoin="round"/>
<path d="M15.5 4.2L26.6 15.3L15.5 26.4L4.4 15.3z" fill="url(#hg)"/>
<circle cx="15.3" cy="9.6" r="2" fill="#fff"/><path d="M13 13h4v7.5h1.3v1.6h-5.8v-1.6H14v-5.9h-1z" fill="#fff"/></svg>
<svg style="left:1696px;top:1017px;" width="20" height="8" viewBox="0 0 20 8"><path d="M0.8 8V2.2H7.2V4.8H16.4V8z" fill="#3aaed0" stroke="#2390b4" stroke-width="0.8"/></svg>
<div style="left:1559px;top:930px;width:208px;height:89.5px;background:#f4f4f8;border-radius:8px;box-shadow:0 0 0 1px rgba(0,0,0,0.06),0 3px 10px rgba(0,0,0,0.22)"></div>
<svg style="left:1575px;top:946px;" width="16" height="18" viewBox="0 0 16 18"><path d="M8.1 1L14.6 3.6V8.4C14.6 12.4 11.6 15.4 8.1 16.8C4.6 15.4 1.6 12.4 1.6 8.4V3.6z" fill="#14160e" stroke="#8aa81c" stroke-width="0.9" stroke-opacity="0.75"/><path d="M4.9 8.6L7.3 11L11.6 6.2" fill="none" stroke="#9cc41a" stroke-width="2.1"/></svg>
<svg style="left:1614px;top:946px;" width="18" height="18" viewBox="0 0 18 18"><rect x="4" y="1" width="13" height="16" rx="0.8" fill="#1490df"/><rect x="4" y="1" width="6.5" height="8" fill="#0f78d4"/><rect x="10.5" y="1" width="6.5" height="8" fill="#4fd4fd"/><rect x="10.5" y="5" width="6.5" height="4" fill="#28a8ea"/><path d="M17 8.5L8 14V17H17z" fill="#1c9be6"/><path d="M4 11L17 17H4z" fill="#0c66c4" opacity="0.55"/><path d="M11.6 11.2L17 8.2" stroke="#0a2a6a" stroke-width="0.7" opacity="0.7"/><rect x="1" y="4.2" width="10" height="10" rx="1" fill="#0a6cd0"/><rect x="11" y="5" width="1" height="9.5" fill="#0a3f8a" opacity="0.35"/><ellipse cx="6" cy="9.2" rx="2.5" ry="2.8" fill="none" stroke="#fff" stroke-width="1.6"/></svg>
<svg style="left:1654.7px;top:946.8px;" width="16.5" height="16.5" viewBox="0 0 16.5 16.5"><rect x="0" y="0" width="16.5" height="16.5" fill="#3b3b3b"/><rect x="1.0" y="4.0" width="1.3" height="1.3" fill="#78e400"/><rect x="2.0" y="3.2" width="1.3" height="1.3" fill="#78e400"/><rect x="3.0" y="2.6" width="1.3" height="1.3" fill="#78e400"/><rect x="4.0" y="3.3" width="1.3" height="1.3" fill="#78e400"/><rect x="5.0" y="3.8" width="1.3" height="1.3" fill="#78e400"/><rect x="6.0" y="4.2" width="1.3" height="1.3" fill="#78e400"/><rect x="7.0" y="4.7" width="1.3" height="1.3" fill="#78e400"/><rect x="8.0" y="5.1" width="1.3" height="1.3" fill="#78e400"/><rect x="9.0" y="5.5" width="1.3" height="1.3" fill="#78e400"/><rect x="10.0" y="6.0" width="1.3" height="1.3" fill="#78e400"/><rect x="11.0" y="6.4" width="1.3" height="1.3" fill="#78e400"/><rect x="12.0" y="6.9" width="1.3" height="1.3" fill="#78e400"/><rect x="1.0" y="5.5" width="1.3" height="1.3" fill="#78e400"/><rect x="2.0" y="5.0" width="1.3" height="1.3" fill="#78e400"/><rect x="1.0" y="7.0" width="1.3" height="1.3" fill="#78e400"/><rect x="2.0" y="6.8" width="1.3" height="1.3" fill="#78e400"/><rect x="1.0" y="8.5" width="1.3" height="1.3" fill="#78e400"/><rect x="1.5" y="10.0" width="1.3" height="1.3" fill="#78e400"/><rect x="1.0" y="11.5" width="1.3" height="1.3" fill="#78e400"/><rect x="1.5" y="13.0" width="1.3" height="1.3" fill="#78e400"/><rect x="1.0" y="14.5" width="1.3" height="1.3" fill="#78e400"/><rect x="2.5" y="15.2" width="1.3" height="1.3" fill="#78e400"/><rect x="4.0" y="15.6" width="1.3" height="1.3" fill="#78e400"/><rect x="5.0" y="15.0" width="1.3" height="1.3" fill="#78e400"/><rect x="7.0" y="11.6" width="1.3" height="1.3" fill="#78e400"/><rect x="8.0" y="12.2" width="1.3" height="1.3" fill="#78e400"/><rect x="9.0" y="12.7" width="1.3" height="1.3" fill="#78e400"/><rect x="10.0" y="13.2" width="1.3" height="1.3" fill="#78e400"/><rect x="11.0" y="13.6" width="1.3" height="1.3" fill="#78e400"/><rect x="12.0" y="13.0" width="1.3" height="1.3" fill="#78e400"/><rect x="10.5" y="14.6" width="1.3" height="1.3" fill="#78e400"/><rect x="9.5" y="15.6" width="1.3" height="1.3" fill="#78e400"/><rect x="11.5" y="15.2" width="1.3" height="1.3" fill="#78e400"/><rect x="8.0" y="13.8" width="1.3" height="1.3" fill="#78e400"/></svg>
<svg style="left:1694px;top:946px;" width="18" height="18" viewBox="0 0 18 18"><rect x="1.9" y="1.7" width="13.8" height="13.8" rx="5" fill="#fff" stroke="#0d8a91" stroke-width="1.7"/><text x="8.8" y="12.9" font-size="14.5" font-weight="bold" text-anchor="middle" fill="#0d8a91" stroke="#0d8a91" stroke-width="0.45" font-family="Liberation Sans">e</text></svg>
<svg style="left:1735px;top:946px;" width="18" height="18" viewBox="0 0 18 18"><path d="M8 1.2L15 3.3V8.2H1V3.3z" fill="#35c1f1"/><path d="M8 1.2L15 3.3V8.2H8z" fill="#0f7be0"/><path d="M1 8.2H8V15.6C4.5 14 1.4 11.8 1 8.2z" fill="#0669cf"/><path d="M8 8.2H15C14.6 11.8 11.5 14 8 15.6z" fill="#0a4fa8"/><path d="M11.4 5.2L17.6 17.6H5.2z" fill="#f4f4f8"/><path d="M11.4 7.8L16 16.9H6.8z" fill="#fcc10f"/><path d="M11.4 10.6v3.4M11.4 14.8v1.1" stroke="#111" stroke-width="1.2"/></svg>
<svg style="left:1576px;top:986px;" width="14" height="18" viewBox="0 0 14 18"><rect x="0.9" y="0.7" width="12.5" height="16.6" rx="6.2" fill="#0a80f5"/><path d="M4 6L9.4 11.4L6.4 14.2V3.6L9.4 6.4L4 11.8" fill="none" stroke="#fff" stroke-width="1.15"/></svg>
</body></html>
